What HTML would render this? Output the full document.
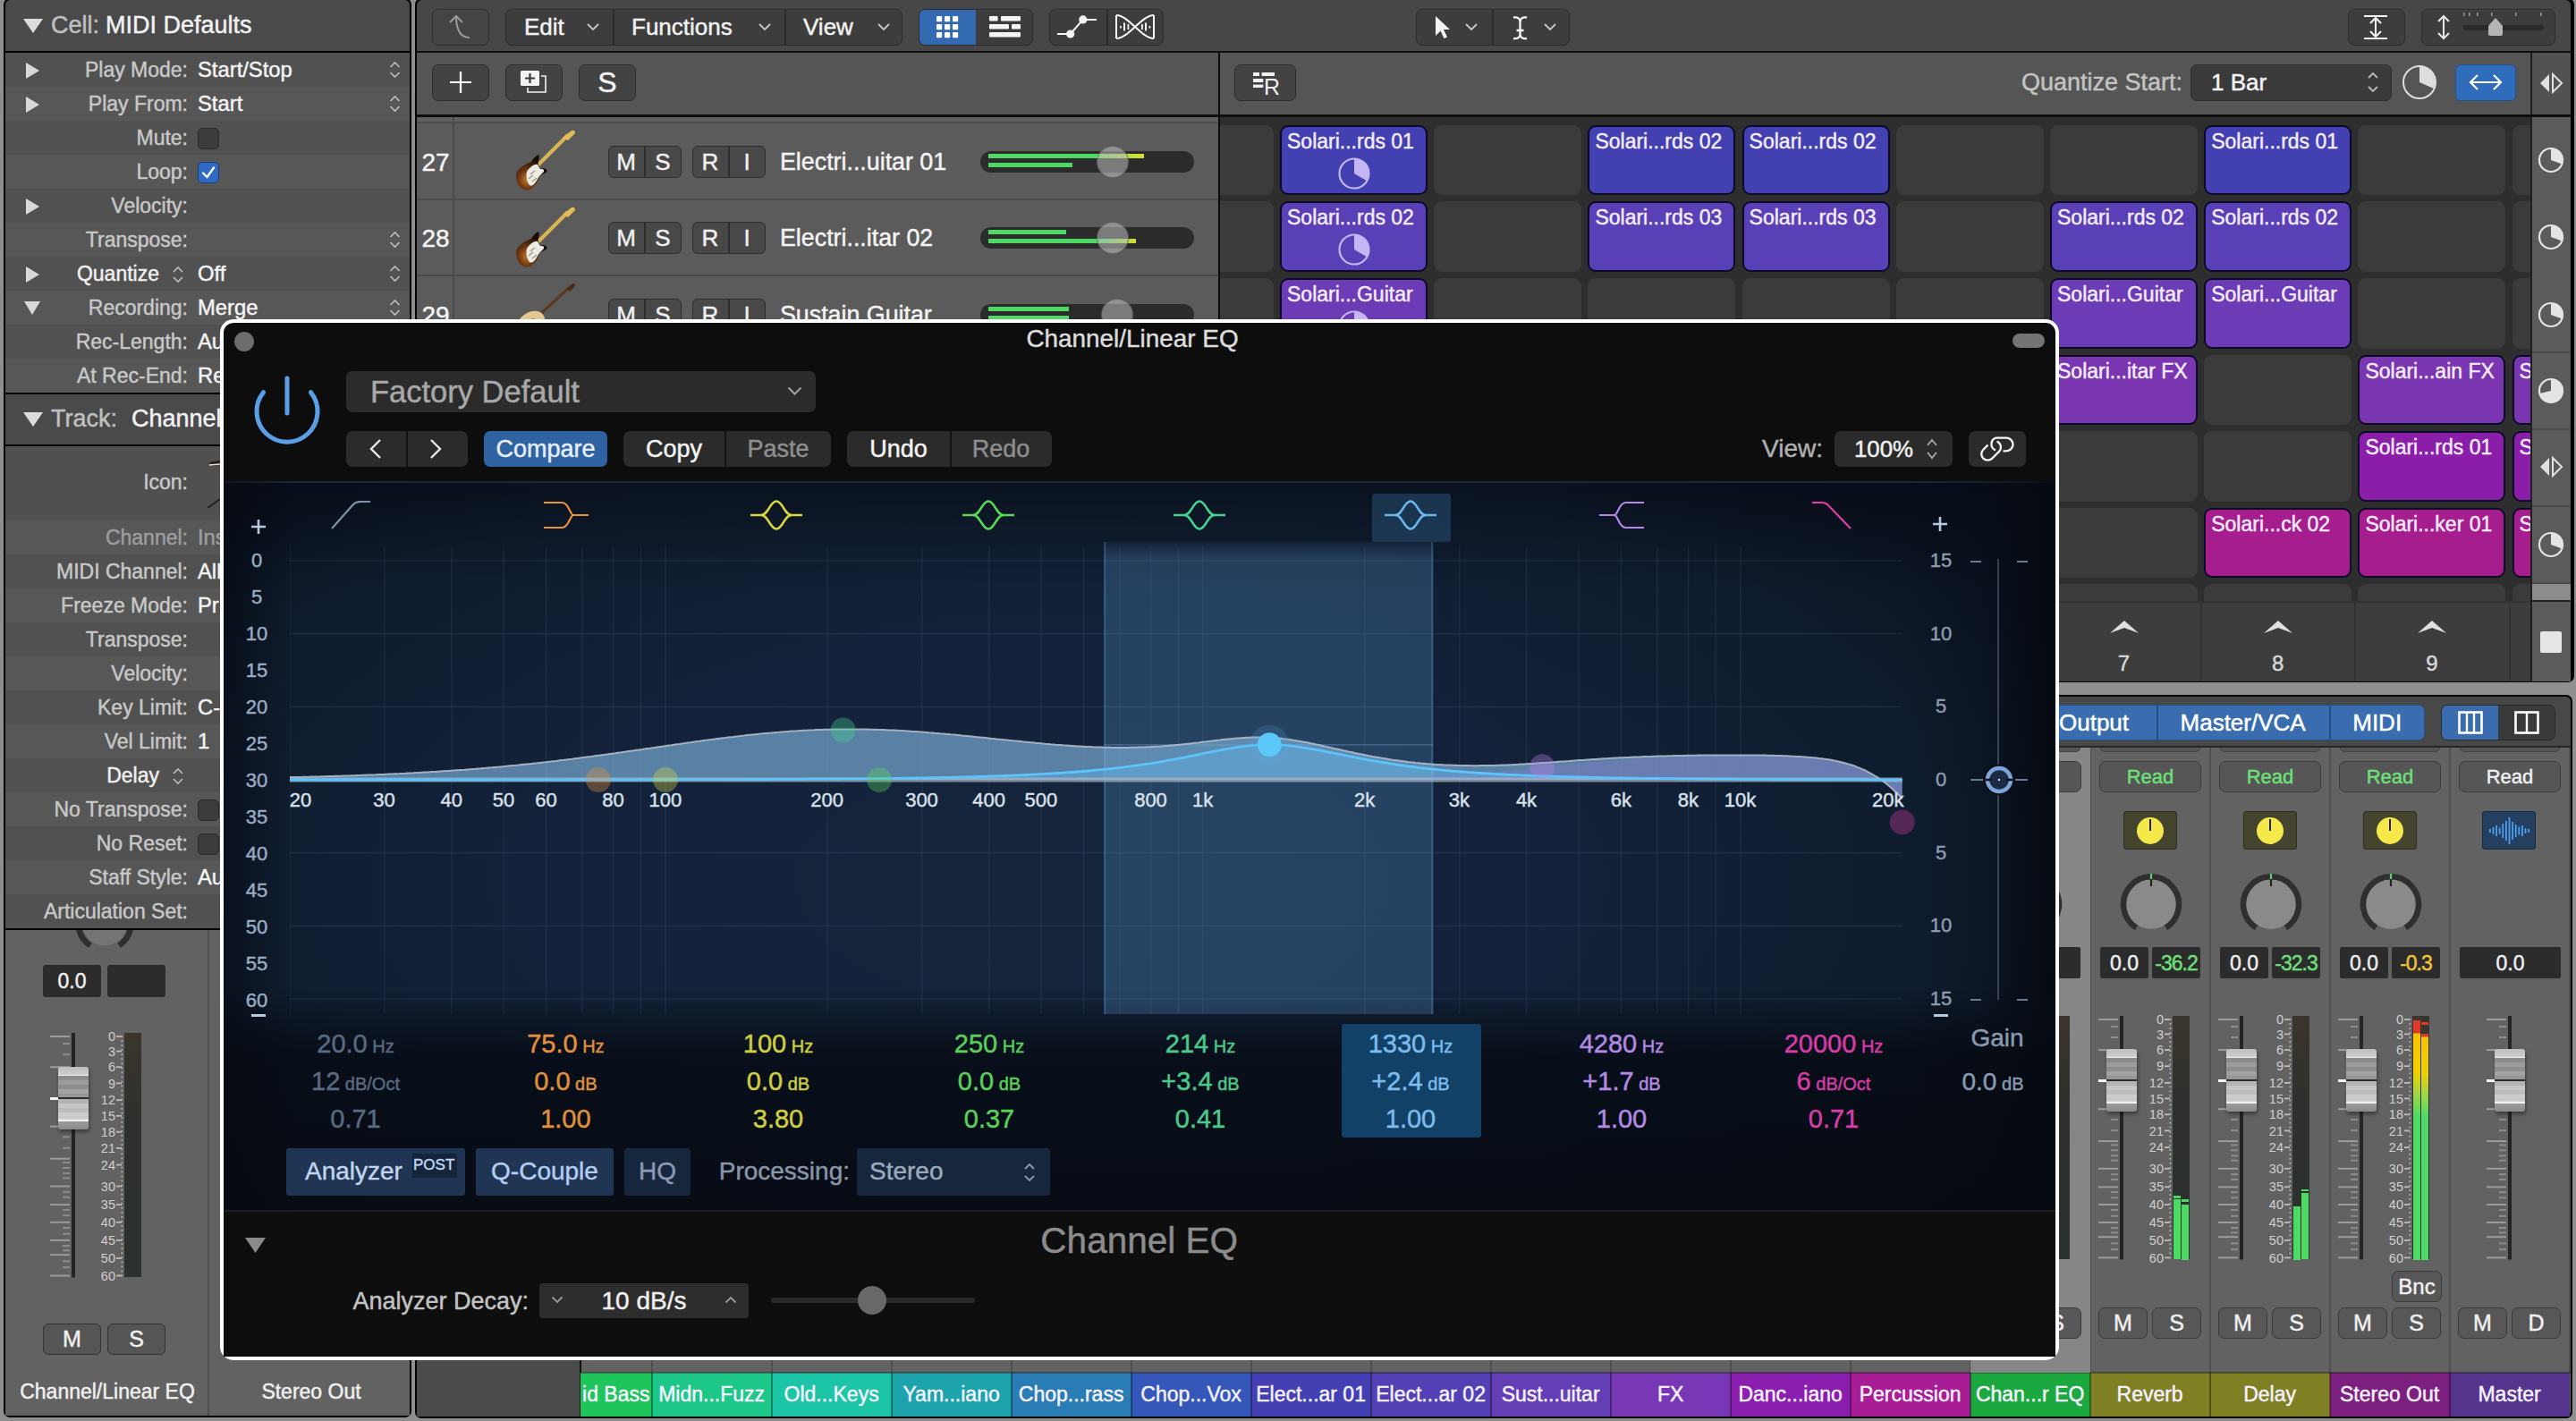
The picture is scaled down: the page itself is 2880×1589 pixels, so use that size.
<!DOCTYPE html>
<html><head><meta charset="utf-8"><title>Logic</title>
<style>
html,body{margin:0;padding:0;background:#8f8f8f;overflow:hidden}
#root{position:relative;width:2880px;height:1589px;overflow:hidden;background:#8f8f8f;font-family:"Liberation Sans",sans-serif}
#root div{position:absolute;box-sizing:border-box;-webkit-text-stroke:0.45px}
</style></head><body><div id="root">
<div style="left:4px;top:-2px;width:456px;height:1587px;background:#000;border-radius:7px"></div>
<div style="left:6px;top:0px;width:452px;height:1583px;background:#525252;border-radius:6px;overflow:hidden"></div>
<div style="left:6px;top:0px;width:452px;height:57px;background:#4a4a4a;border-top-left-radius:6px;border-top-right-radius:6px"></div>
<div style="left:6px;top:57px;width:452px;height:2px;background:#000"></div>
<svg style="position:absolute;left:26px;top:20px;" width="24" height="18" viewBox="0 0 24 18"><path d="M0 1 L22 1 L11 17 Z" fill="#dcdcdc"/></svg>
<div style="left:57.0px;top:-2.0px;height:60px;line-height:60px;white-space:nowrap;font-size:27px;color:#c0c0c0;">Cell:</div>
<div style="left:118.0px;top:-2.0px;height:60px;line-height:60px;white-space:nowrap;font-size:27px;color:#f2f2f2;">MIDI Defaults</div>
<div style="left:6px;top:59px;width:452px;height:38px;background:#515151"></div>
<svg style="position:absolute;left:28px;top:69px;" width="18" height="20" viewBox="0 0 18 20"><path d="M1 1 L16 10 L1 19 Z" fill="#d8d8d8"/></svg>
<div style="left:-790.0px;top:48.0px;width:1000px;height:60px;line-height:60px;text-align:right;white-space:nowrap;font-size:23px;color:#c8c8c8;">Play Mode:</div>
<div style="left:221.0px;top:48.0px;height:60px;line-height:60px;white-space:nowrap;font-size:23.8px;color:#f4f4f4;">Start/Stop</div>
<svg style="position:absolute;left:435px;top:68px;" width="13" height="20" viewBox="0 0 13 20"><path d="M1.5 7 L6.5 2 L11.5 7 M1.5 13 L6.5 18 L11.5 13" stroke="#bdbdbd" stroke-width="1.6" fill="none"/></svg>
<div style="left:6px;top:97px;width:452px;height:38px;background:#575757"></div>
<svg style="position:absolute;left:28px;top:107px;" width="18" height="20" viewBox="0 0 18 20"><path d="M1 1 L16 10 L1 19 Z" fill="#d8d8d8"/></svg>
<div style="left:-790.0px;top:86.0px;width:1000px;height:60px;line-height:60px;text-align:right;white-space:nowrap;font-size:23px;color:#c8c8c8;">Play From:</div>
<div style="left:221.0px;top:86.0px;height:60px;line-height:60px;white-space:nowrap;font-size:23.8px;color:#f4f4f4;">Start</div>
<svg style="position:absolute;left:435px;top:106px;" width="13" height="20" viewBox="0 0 13 20"><path d="M1.5 7 L6.5 2 L11.5 7 M1.5 13 L6.5 18 L11.5 13" stroke="#bdbdbd" stroke-width="1.6" fill="none"/></svg>
<div style="left:6px;top:135px;width:452px;height:38px;background:#515151"></div>
<div style="left:-790.0px;top:124.0px;width:1000px;height:60px;line-height:60px;text-align:right;white-space:nowrap;font-size:23px;color:#c8c8c8;">Mute:</div>
<div style="left:221px;top:143px;width:24px;height:24px;background:#3c3c3c;border-radius:5px;border:1px solid #2a2a2a"></div>
<div style="left:6px;top:173px;width:452px;height:38px;background:#575757"></div>
<div style="left:-790.0px;top:162.0px;width:1000px;height:60px;line-height:60px;text-align:right;white-space:nowrap;font-size:23px;color:#c8c8c8;">Loop:</div>
<div style="left:221px;top:181px;width:24px;height:24px;background:#2f6bc4;border-radius:5px;border:1px solid #1a3e78"></div>
<svg style="position:absolute;left:221px;top:181px;" width="24" height="24" viewBox="0 0 24 24"><path d="M6 12.5 L10.5 17 L18 6.5" stroke="#fff" stroke-width="2.4" fill="none" stroke-linecap="round"/></svg>
<div style="left:6px;top:211px;width:452px;height:38px;background:#515151"></div>
<svg style="position:absolute;left:28px;top:221px;" width="18" height="20" viewBox="0 0 18 20"><path d="M1 1 L16 10 L1 19 Z" fill="#d8d8d8"/></svg>
<div style="left:-790.0px;top:200.0px;width:1000px;height:60px;line-height:60px;text-align:right;white-space:nowrap;font-size:23px;color:#c8c8c8;">Velocity:</div>
<div style="left:6px;top:249px;width:452px;height:38px;background:#575757"></div>
<div style="left:-790.0px;top:238.0px;width:1000px;height:60px;line-height:60px;text-align:right;white-space:nowrap;font-size:23px;color:#c8c8c8;">Transpose:</div>
<svg style="position:absolute;left:435px;top:258px;" width="13" height="20" viewBox="0 0 13 20"><path d="M1.5 7 L6.5 2 L11.5 7 M1.5 13 L6.5 18 L11.5 13" stroke="#bdbdbd" stroke-width="1.6" fill="none"/></svg>
<div style="left:6px;top:287px;width:452px;height:38px;background:#515151"></div>
<svg style="position:absolute;left:28px;top:297px;" width="18" height="20" viewBox="0 0 18 20"><path d="M1 1 L16 10 L1 19 Z" fill="#d8d8d8"/></svg>
<div style="left:-822.0px;top:276.0px;width:1000px;height:60px;line-height:60px;text-align:right;white-space:nowrap;font-size:23px;color:#f0f0f0;">Quantize</div>
<svg style="position:absolute;left:193px;top:297px;" width="12" height="20" viewBox="0 0 12 20"><path d="M1 7 L6 2 L11 7 M1 13 L6 18 L11 13" stroke="#bdbdbd" stroke-width="1.6" fill="none"/></svg>
<div style="left:221.0px;top:276.0px;height:60px;line-height:60px;white-space:nowrap;font-size:23.8px;color:#f4f4f4;">Off</div>
<svg style="position:absolute;left:435px;top:296px;" width="13" height="20" viewBox="0 0 13 20"><path d="M1.5 7 L6.5 2 L11.5 7 M1.5 13 L6.5 18 L11.5 13" stroke="#bdbdbd" stroke-width="1.6" fill="none"/></svg>
<div style="left:6px;top:325px;width:452px;height:38px;background:#575757"></div>
<svg style="position:absolute;left:26px;top:336px;" width="20" height="17" viewBox="0 0 20 17"><path d="M1 1 L19 1 L10 16 Z" fill="#d8d8d8"/></svg>
<div style="left:-790.0px;top:314.0px;width:1000px;height:60px;line-height:60px;text-align:right;white-space:nowrap;font-size:23px;color:#c8c8c8;">Recording:</div>
<div style="left:221.0px;top:314.0px;height:60px;line-height:60px;white-space:nowrap;font-size:23.8px;color:#f4f4f4;">Merge</div>
<svg style="position:absolute;left:435px;top:334px;" width="13" height="20" viewBox="0 0 13 20"><path d="M1.5 7 L6.5 2 L11.5 7 M1.5 13 L6.5 18 L11.5 13" stroke="#bdbdbd" stroke-width="1.6" fill="none"/></svg>
<div style="left:6px;top:363px;width:452px;height:38px;background:#515151"></div>
<div style="left:-790.0px;top:352.0px;width:1000px;height:60px;line-height:60px;text-align:right;white-space:nowrap;font-size:23px;color:#c8c8c8;">Rec-Length:</div>
<div style="left:221.0px;top:352.0px;height:60px;line-height:60px;white-space:nowrap;font-size:23.8px;color:#f4f4f4;">Au</div>
<div style="left:6px;top:401px;width:452px;height:38px;background:#575757"></div>
<div style="left:-790.0px;top:390.0px;width:1000px;height:60px;line-height:60px;text-align:right;white-space:nowrap;font-size:23px;color:#c8c8c8;">At Rec-End:</div>
<div style="left:221.0px;top:390.0px;height:60px;line-height:60px;white-space:nowrap;font-size:23.8px;color:#f4f4f4;">Re</div>
<div style="left:6px;top:439px;width:452px;height:2px;background:#000"></div>
<div style="left:6px;top:441px;width:452px;height:56px;background:#4a4a4a"></div>
<svg style="position:absolute;left:26px;top:460px;" width="24" height="18" viewBox="0 0 24 18"><path d="M0 1 L22 1 L11 17 Z" fill="#dcdcdc"/></svg>
<div style="left:57.0px;top:438.0px;height:60px;line-height:60px;white-space:nowrap;font-size:27px;color:#c0c0c0;">Track:</div>
<div style="left:147.0px;top:438.0px;height:60px;line-height:60px;white-space:nowrap;font-size:27px;color:#f2f2f2;">Channel</div>
<div style="left:6px;top:497px;width:452px;height:2px;background:#000"></div>
<div style="left:6px;top:499px;width:452px;height:83px;background:#505050"></div>
<div style="left:-790.0px;top:509.0px;width:1000px;height:60px;line-height:60px;text-align:right;white-space:nowrap;font-size:23px;color:#c8c8c8;">Icon:</div>
<svg style="position:absolute;left:232px;top:508px;" width="16" height="60" viewBox="0 0 16 60"><path d="M2 9 L14 7 L14 12 L4 13 Z" fill="#2a2018"/><path d="M2 12 L14 11" stroke="#e8e0d8" stroke-width="1.5"/><path d="M0 60 L14 50" stroke="#222" stroke-width="2"/></svg>
<div style="left:6px;top:582px;width:452px;height:38px;background:#575757"></div>
<div style="left:-790.0px;top:571.0px;width:1000px;height:60px;line-height:60px;text-align:right;white-space:nowrap;font-size:23px;color:#9e9e9e;">Channel:</div>
<div style="left:221.0px;top:571.0px;height:60px;line-height:60px;white-space:nowrap;font-size:23.8px;color:#9e9e9e;">Ins</div>
<div style="left:6px;top:620px;width:452px;height:38px;background:#515151"></div>
<div style="left:-790.0px;top:609.0px;width:1000px;height:60px;line-height:60px;text-align:right;white-space:nowrap;font-size:23px;color:#c8c8c8;">MIDI Channel:</div>
<div style="left:221.0px;top:609.0px;height:60px;line-height:60px;white-space:nowrap;font-size:23.8px;color:#f4f4f4;">All</div>
<div style="left:6px;top:658px;width:452px;height:38px;background:#575757"></div>
<div style="left:-790.0px;top:647.0px;width:1000px;height:60px;line-height:60px;text-align:right;white-space:nowrap;font-size:23px;color:#c8c8c8;">Freeze Mode:</div>
<div style="left:221.0px;top:647.0px;height:60px;line-height:60px;white-space:nowrap;font-size:23.8px;color:#f4f4f4;">Pr</div>
<div style="left:6px;top:696px;width:452px;height:38px;background:#515151"></div>
<div style="left:-790.0px;top:685.0px;width:1000px;height:60px;line-height:60px;text-align:right;white-space:nowrap;font-size:23px;color:#c8c8c8;">Transpose:</div>
<div style="left:6px;top:734px;width:452px;height:38px;background:#575757"></div>
<div style="left:-790.0px;top:723.0px;width:1000px;height:60px;line-height:60px;text-align:right;white-space:nowrap;font-size:23px;color:#c8c8c8;">Velocity:</div>
<div style="left:6px;top:772px;width:452px;height:38px;background:#515151"></div>
<div style="left:-790.0px;top:761.0px;width:1000px;height:60px;line-height:60px;text-align:right;white-space:nowrap;font-size:23px;color:#c8c8c8;">Key Limit:</div>
<div style="left:221.0px;top:761.0px;height:60px;line-height:60px;white-space:nowrap;font-size:23.8px;color:#f4f4f4;">C-</div>
<div style="left:6px;top:810px;width:452px;height:38px;background:#575757"></div>
<div style="left:-790.0px;top:799.0px;width:1000px;height:60px;line-height:60px;text-align:right;white-space:nowrap;font-size:23px;color:#c8c8c8;">Vel Limit:</div>
<div style="left:221.0px;top:799.0px;height:60px;line-height:60px;white-space:nowrap;font-size:23.8px;color:#f4f4f4;">1</div>
<div style="left:6px;top:848px;width:452px;height:38px;background:#515151"></div>
<div style="left:-822.0px;top:837.0px;width:1000px;height:60px;line-height:60px;text-align:right;white-space:nowrap;font-size:23px;color:#f0f0f0;">Delay</div>
<svg style="position:absolute;left:193px;top:858px;" width="12" height="20" viewBox="0 0 12 20"><path d="M1 7 L6 2 L11 7 M1 13 L6 18 L11 13" stroke="#bdbdbd" stroke-width="1.6" fill="none"/></svg>
<div style="left:6px;top:886px;width:452px;height:38px;background:#575757"></div>
<div style="left:-790.0px;top:875.0px;width:1000px;height:60px;line-height:60px;text-align:right;white-space:nowrap;font-size:23px;color:#c8c8c8;">No Transpose:</div>
<div style="left:221px;top:894px;width:24px;height:24px;background:#3c3c3c;border-radius:5px;border:1px solid #2a2a2a"></div>
<div style="left:6px;top:924px;width:452px;height:38px;background:#515151"></div>
<div style="left:-790.0px;top:913.0px;width:1000px;height:60px;line-height:60px;text-align:right;white-space:nowrap;font-size:23px;color:#c8c8c8;">No Reset:</div>
<div style="left:221px;top:932px;width:24px;height:24px;background:#3c3c3c;border-radius:5px;border:1px solid #2a2a2a"></div>
<div style="left:6px;top:962px;width:452px;height:38px;background:#575757"></div>
<div style="left:-790.0px;top:951.0px;width:1000px;height:60px;line-height:60px;text-align:right;white-space:nowrap;font-size:23px;color:#c8c8c8;">Staff Style:</div>
<div style="left:221.0px;top:951.0px;height:60px;line-height:60px;white-space:nowrap;font-size:23.8px;color:#f4f4f4;">Au</div>
<div style="left:6px;top:1000px;width:452px;height:38px;background:#515151"></div>
<div style="left:-790.0px;top:989.0px;width:1000px;height:60px;line-height:60px;text-align:right;white-space:nowrap;font-size:23px;color:#c8c8c8;">Articulation Set:</div>
<div style="left:6px;top:1038px;width:452px;height:2px;background:#000"></div>
<div style="left:6px;top:1040px;width:452px;height:543px;background:#626262"></div>
<div style="left:232px;top:1040px;width:2px;height:543px;background:#4e4e4e"></div>
<svg style="position:absolute;left:80px;top:1040px;" width="74" height="24" viewBox="0 0 74 24"><circle cx="37" cy="-7.5" r="25" fill="#757575"/><path d="M20.9 17.2 A29.5 29.5 0 1 1 53.1 17.2" stroke="#2f2f2f" stroke-width="6.5" fill="none"/></svg>
<div style="left:48px;top:1079px;width:65px;height:36px;background:#2c2c2c;border-radius:3px"></div>
<div style="left:48.0px;top:1067.0px;width:65px;height:60px;line-height:60px;text-align:center;font-size:23px;color:#f0f0f0;">0.0</div>
<div style="left:120px;top:1079px;width:65px;height:36px;background:#2c2c2c;border-radius:3px"></div>
<svg style="position:absolute;left:56px;top:1148.5px;" width="104" height="289.5" viewBox="0 0 104 289.5"><g transform="translate(0,10)"><rect x="0" y="-1.0" width="22" height="2" fill="#9c9c9c"/><rect x="0" y="33.2" width="22" height="2" fill="#9c9c9c"/><rect x="0" y="99.6" width="22" height="2" fill="#9c9c9c"/><rect x="0" y="135.7" width="22" height="2" fill="#9c9c9c"/><rect x="0" y="166.5" width="22" height="2" fill="#9c9c9c"/><rect x="0" y="187.1" width="22" height="2" fill="#9c9c9c"/><rect x="0" y="206.8" width="22" height="2" fill="#9c9c9c"/><rect x="0" y="226.9" width="22" height="2" fill="#9c9c9c"/><rect x="0" y="243.2" width="22" height="2" fill="#9c9c9c"/><rect x="0" y="266.5" width="22" height="2" fill="#9c9c9c"/><rect x="14" y="7.0" width="8" height="2" fill="#8c8c8c"/><rect x="14" y="19.1" width="8" height="2" fill="#8c8c8c"/><rect x="14" y="111.3" width="8" height="2" fill="#8c8c8c"/><rect x="14" y="123.7" width="8" height="2" fill="#8c8c8c"/><rect x="14" y="140.0" width="8" height="2" fill="#8c8c8c"/><rect x="14" y="145.9" width="8" height="2" fill="#8c8c8c"/><rect x="14" y="152.0" width="8" height="2" fill="#8c8c8c"/><rect x="14" y="157.4" width="8" height="2" fill="#8c8c8c"/><rect x="14" y="172.9" width="8" height="2" fill="#8c8c8c"/><rect x="14" y="178.8" width="8" height="2" fill="#8c8c8c"/><rect x="14" y="192.9" width="8" height="2" fill="#8c8c8c"/><rect x="14" y="199.1" width="8" height="2" fill="#8c8c8c"/><rect x="14" y="213.0" width="8" height="2" fill="#8c8c8c"/><rect x="14" y="219.7" width="8" height="2" fill="#8c8c8c"/><rect x="14" y="233.1" width="8" height="2" fill="#8c8c8c"/><rect x="14" y="238.4" width="8" height="2" fill="#8c8c8c"/><rect x="14" y="250.4" width="8" height="2" fill="#8c8c8c"/><rect x="14" y="257.1" width="8" height="2" fill="#8c8c8c"/><rect x="24" y="-4" width="4" height="273.5" fill="#242424"/><text x="73" y="5.2" text-anchor="end" font-size="14.5" fill="#d0d0d0" font-family="Liberation Sans">0</text><rect x="74" y="-0.9" width="6" height="1.8" fill="#bdbdbd"/><text x="73" y="21.7" text-anchor="end" font-size="14.5" fill="#d0d0d0" font-family="Liberation Sans">3</text><rect x="74" y="15.6" width="6" height="1.8" fill="#bdbdbd"/><text x="73" y="39.4" text-anchor="end" font-size="14.5" fill="#d0d0d0" font-family="Liberation Sans">6</text><rect x="74" y="33.3" width="6" height="1.8" fill="#bdbdbd"/><text x="73" y="57.6" text-anchor="end" font-size="14.5" fill="#d0d0d0" font-family="Liberation Sans">9</text><rect x="74" y="51.5" width="6" height="1.8" fill="#bdbdbd"/><text x="73" y="76.4" text-anchor="end" font-size="14.5" fill="#d0d0d0" font-family="Liberation Sans">12</text><rect x="74" y="70.3" width="6" height="1.8" fill="#bdbdbd"/><text x="73" y="94.0" text-anchor="end" font-size="14.5" fill="#d0d0d0" font-family="Liberation Sans">15</text><rect x="74" y="87.9" width="6" height="1.8" fill="#bdbdbd"/><text x="73" y="111.9" text-anchor="end" font-size="14.5" fill="#d0d0d0" font-family="Liberation Sans">18</text><rect x="74" y="105.8" width="6" height="1.8" fill="#bdbdbd"/><text x="73" y="130.1" text-anchor="end" font-size="14.5" fill="#d0d0d0" font-family="Liberation Sans">21</text><rect x="74" y="124.0" width="6" height="1.8" fill="#bdbdbd"/><text x="73" y="148.8" text-anchor="end" font-size="14.5" fill="#d0d0d0" font-family="Liberation Sans">24</text><rect x="74" y="142.7" width="6" height="1.8" fill="#bdbdbd"/><text x="73" y="172.7" text-anchor="end" font-size="14.5" fill="#d0d0d0" font-family="Liberation Sans">30</text><rect x="74" y="166.6" width="6" height="1.8" fill="#bdbdbd"/><text x="73" y="193.3" text-anchor="end" font-size="14.5" fill="#d0d0d0" font-family="Liberation Sans">35</text><rect x="74" y="187.2" width="6" height="1.8" fill="#bdbdbd"/><text x="73" y="213.0" text-anchor="end" font-size="14.5" fill="#d0d0d0" font-family="Liberation Sans">40</text><rect x="74" y="206.9" width="6" height="1.8" fill="#bdbdbd"/><text x="73" y="233.1" text-anchor="end" font-size="14.5" fill="#d0d0d0" font-family="Liberation Sans">45</text><rect x="74" y="227.0" width="6" height="1.8" fill="#bdbdbd"/><text x="73" y="253.2" text-anchor="end" font-size="14.5" fill="#d0d0d0" font-family="Liberation Sans">50</text><rect x="74" y="247.1" width="6" height="1.8" fill="#bdbdbd"/><text x="73" y="272.7" text-anchor="end" font-size="14.5" fill="#d0d0d0" font-family="Liberation Sans">60</text><rect x="74" y="266.6" width="6" height="1.8" fill="#bdbdbd"/><rect x="79.4" y="-0.9" width="1.8" height="1.8" fill="#b0b0b0"/><rect x="79.4" y="4.1" width="1.8" height="1.8" fill="#b0b0b0"/><rect x="79.4" y="9.2" width="1.8" height="1.8" fill="#b0b0b0"/><rect x="79.4" y="14.2" width="1.8" height="1.8" fill="#b0b0b0"/><rect x="79.4" y="19.3" width="1.8" height="1.8" fill="#b0b0b0"/><rect x="79.4" y="24.3" width="1.8" height="1.8" fill="#b0b0b0"/><rect x="79.4" y="29.4" width="1.8" height="1.8" fill="#b0b0b0"/><rect x="79.4" y="34.4" width="1.8" height="1.8" fill="#b0b0b0"/><rect x="79.4" y="39.5" width="1.8" height="1.8" fill="#b0b0b0"/><rect x="79.4" y="44.5" width="1.8" height="1.8" fill="#b0b0b0"/><rect x="79.4" y="49.6" width="1.8" height="1.8" fill="#b0b0b0"/><rect x="79.4" y="54.6" width="1.8" height="1.8" fill="#b0b0b0"/><rect x="79.4" y="59.7" width="1.8" height="1.8" fill="#b0b0b0"/><rect x="79.4" y="64.7" width="1.8" height="1.8" fill="#b0b0b0"/><rect x="79.4" y="69.8" width="1.8" height="1.8" fill="#b0b0b0"/><rect x="79.4" y="74.8" width="1.8" height="1.8" fill="#b0b0b0"/><rect x="79.4" y="79.9" width="1.8" height="1.8" fill="#b0b0b0"/><rect x="79.4" y="84.9" width="1.8" height="1.8" fill="#b0b0b0"/><rect x="79.4" y="89.9" width="1.8" height="1.8" fill="#b0b0b0"/><rect x="79.4" y="95.0" width="1.8" height="1.8" fill="#b0b0b0"/><rect x="79.4" y="100.0" width="1.8" height="1.8" fill="#b0b0b0"/><rect x="79.4" y="105.1" width="1.8" height="1.8" fill="#b0b0b0"/><rect x="79.4" y="110.1" width="1.8" height="1.8" fill="#b0b0b0"/><rect x="79.4" y="115.2" width="1.8" height="1.8" fill="#b0b0b0"/><rect x="79.4" y="120.2" width="1.8" height="1.8" fill="#b0b0b0"/><rect x="79.4" y="125.3" width="1.8" height="1.8" fill="#b0b0b0"/><rect x="79.4" y="130.3" width="1.8" height="1.8" fill="#b0b0b0"/><rect x="79.4" y="135.4" width="1.8" height="1.8" fill="#b0b0b0"/><rect x="79.4" y="140.4" width="1.8" height="1.8" fill="#b0b0b0"/><rect x="79.4" y="145.5" width="1.8" height="1.8" fill="#b0b0b0"/><rect x="79.4" y="150.5" width="1.8" height="1.8" fill="#b0b0b0"/><rect x="79.4" y="155.6" width="1.8" height="1.8" fill="#b0b0b0"/><rect x="79.4" y="160.6" width="1.8" height="1.8" fill="#b0b0b0"/><rect x="79.4" y="165.7" width="1.8" height="1.8" fill="#b0b0b0"/><rect x="79.4" y="170.7" width="1.8" height="1.8" fill="#b0b0b0"/><rect x="79.4" y="175.8" width="1.8" height="1.8" fill="#b0b0b0"/><rect x="79.4" y="180.8" width="1.8" height="1.8" fill="#b0b0b0"/><rect x="79.4" y="185.8" width="1.8" height="1.8" fill="#b0b0b0"/><rect x="79.4" y="190.9" width="1.8" height="1.8" fill="#b0b0b0"/><rect x="79.4" y="195.9" width="1.8" height="1.8" fill="#b0b0b0"/><rect x="79.4" y="201.0" width="1.8" height="1.8" fill="#b0b0b0"/><rect x="79.4" y="206.0" width="1.8" height="1.8" fill="#b0b0b0"/><rect x="79.4" y="211.1" width="1.8" height="1.8" fill="#b0b0b0"/><rect x="79.4" y="216.1" width="1.8" height="1.8" fill="#b0b0b0"/><rect x="79.4" y="221.2" width="1.8" height="1.8" fill="#b0b0b0"/><rect x="79.4" y="226.2" width="1.8" height="1.8" fill="#b0b0b0"/><rect x="79.4" y="231.3" width="1.8" height="1.8" fill="#b0b0b0"/><rect x="79.4" y="236.3" width="1.8" height="1.8" fill="#b0b0b0"/><rect x="79.4" y="241.4" width="1.8" height="1.8" fill="#b0b0b0"/><rect x="79.4" y="246.4" width="1.8" height="1.8" fill="#b0b0b0"/><rect x="79.4" y="251.5" width="1.8" height="1.8" fill="#b0b0b0"/><rect x="79.4" y="256.5" width="1.8" height="1.8" fill="#b0b0b0"/><rect x="79.4" y="261.6" width="1.8" height="1.8" fill="#b0b0b0"/><rect x="79.4" y="266.6" width="1.8" height="1.8" fill="#b0b0b0"/></g></svg>
<div style="left:139px;top:1154.5px;width:19px;height:273.5px;background:linear-gradient(#3b352c,#2e302d 35%,#2b312d)"></div>
<div style="left:65px;top:1193px;width:34px;height:70px;border-radius:3px;box-shadow:1px 3px 4px rgba(0,0,0,.4);background:linear-gradient(#bdbdbd 0,#cfcfcf 13%,#ececec 13.5%,#ececec 14.5%,#8c8c8c 15%,#8c8c8c 21.5%,#9c9c9c 22%,#9c9c9c 28%,#8e8e8e 28.5%,#8e8e8e 35%,#a3a3a3 35.5%,#a3a3a3 42%,#979797 42.5%,#979797 48.5%,#2c2c2c 49%,#2c2c2c 51%,#b4b4b4 51.5%,#b4b4b4 58%,#c6c6c6 58.5%,#c6c6c6 65%,#bcbcbc 65.5%,#bcbcbc 72%,#cdcdcd 72.5%,#cdcdcd 79%,#c4c4c4 79.5%,#d6d6d6 84.5%,#f2f2f2 85%,#f2f2f2 86.5%,#9c9c9c 87%,#8a8a8a 100%)"></div>
<div style="left:56px;top:1226.5px;width:9px;height:3px;background:#f4f4f4"></div>
<div style="left:48px;top:1480px;width:65px;height:35px;background:#555;border:1.5px solid #333;border-radius:6px"></div>
<div style="left:48.0px;top:1467.0px;width:65px;height:60px;line-height:60px;text-align:center;font-size:25px;color:#f0f0f0;">M</div>
<div style="left:120px;top:1480px;width:65px;height:35px;background:#555;border:1.5px solid #333;border-radius:6px"></div>
<div style="left:120.0px;top:1467.0px;width:65px;height:60px;line-height:60px;text-align:center;font-size:25px;color:#f0f0f0;">S</div>
<div style="left:7.0px;top:1526.0px;width:226px;height:60px;line-height:60px;text-align:center;font-size:23px;color:#f0f0f0;">Channel/Linear EQ</div>
<div style="left:235.0px;top:1526.0px;width:226px;height:60px;line-height:60px;text-align:center;font-size:23px;color:#f0f0f0;">Stereo Out</div>
<div style="left:464px;top:-2px;width:2414px;height:765px;background:#000;border-radius:7px"></div>
<div style="left:466px;top:0px;width:2408px;height:761px;background:#2d2d2d;border-radius:6px;overflow:hidden"></div>
<div style="left:466px;top:0px;width:2408px;height:57px;background:#474747;border-top-left-radius:6px;border-top-right-radius:6px"></div>
<div style="left:466px;top:57px;width:2408px;height:2px;background:#111"></div>
<div style="left:483px;top:10px;width:64px;height:41px;background:#444;border-radius:7px;border:1.5px solid #2c2c2c;box-shadow:0 1px 0 rgba(255,255,255,.04) inset"></div>
<svg style="position:absolute;left:483px;top:10px;" width="64" height="41" viewBox="0 0 64 41"><path d="M20 15 L27 8 L34 15 M27 8 Q27 32 42 32" stroke="#9c9c9c" stroke-width="2" fill="none"/></svg>
<div style="left:565px;top:10px;width:444px;height:41px;background:#3d3d3d;border-radius:7px;border:1.5px solid #2c2c2c;box-shadow:0 1px 0 rgba(255,255,255,.04) inset"></div>
<div style="left:685px;top:11px;width:2px;height:39px;background:#2c2c2c"></div>
<div style="left:877px;top:11px;width:2px;height:39px;background:#2c2c2c"></div>
<div style="left:586.0px;top:0.0px;height:60px;line-height:60px;white-space:nowrap;font-size:26px;color:#f2f2f2;">Edit</div>
<svg style="position:absolute;left:656px;top:26px;" width="15" height="9" viewBox="0 0 15 9"><path d="M1 1 L7 7 L13 1" stroke="#c8c8c8" stroke-width="1.8" fill="none"/></svg>
<div style="left:706.0px;top:0.0px;height:60px;line-height:60px;white-space:nowrap;font-size:26px;color:#f2f2f2;">Functions</div>
<svg style="position:absolute;left:848px;top:26px;" width="15" height="9" viewBox="0 0 15 9"><path d="M1 1 L7 7 L13 1" stroke="#c8c8c8" stroke-width="1.8" fill="none"/></svg>
<div style="left:898.0px;top:0.0px;height:60px;line-height:60px;white-space:nowrap;font-size:26px;color:#f2f2f2;">View</div>
<svg style="position:absolute;left:981px;top:26px;" width="15" height="9" viewBox="0 0 15 9"><path d="M1 1 L7 7 L13 1" stroke="#c8c8c8" stroke-width="1.8" fill="none"/></svg>
<div style="left:1027px;top:10px;width:128px;height:41px;background:#3d3d3d;border-radius:7px;border:1.5px solid #2c2c2c;box-shadow:0 1px 0 rgba(255,255,255,.04) inset"></div>
<div style="left:1028px;top:11px;width:63px;height:39px;background:#336ab1;border-radius:6px 0 0 6px"></div>
<svg style="position:absolute;left:1047px;top:18px;" width="26" height="26" viewBox="0 0 26 26"><rect x="0" y="0" width="6.2" height="6.2" rx="1" fill="#fff"/><rect x="9" y="0" width="6.2" height="6.2" rx="1" fill="#fff"/><rect x="18" y="0" width="6.2" height="6.2" rx="1" fill="#fff"/><rect x="0" y="9" width="6.2" height="6.2" rx="1" fill="#fff"/><rect x="9" y="9" width="6.2" height="6.2" rx="1" fill="#fff"/><rect x="18" y="9" width="6.2" height="6.2" rx="1" fill="#fff"/><rect x="0" y="18" width="6.2" height="6.2" rx="1" fill="#fff"/><rect x="9" y="18" width="6.2" height="6.2" rx="1" fill="#fff"/><rect x="18" y="18" width="6.2" height="6.2" rx="1" fill="#fff"/></svg>
<svg style="position:absolute;left:1106px;top:18px;" width="36" height="24" viewBox="0 0 36 24"><g fill="#f4f4f4"><rect x="0" y="0" width="9.6" height="5.6" rx="1"/><rect x="13" y="0" width="22" height="5.6" rx="1"/><rect x="0" y="9" width="22" height="5.6" rx="1"/><rect x="25" y="9" width="10" height="5.6" rx="1"/><rect x="0" y="18" width="35" height="5.6" rx="1"/></g></svg>
<div style="left:1173px;top:10px;width:128px;height:41px;background:#3d3d3d;border-radius:7px;border:1.5px solid #2c2c2c;box-shadow:0 1px 0 rgba(255,255,255,.04) inset"></div>
<div style="left:1237px;top:11px;width:2px;height:39px;background:#2c2c2c"></div>
<svg style="position:absolute;left:1173px;top:10px;" width="64" height="41" viewBox="0 0 64 41"><g stroke="#f4f4f4" stroke-width="2" fill="#f4f4f4"><path d="M9 28 H20 M23.7 28 L37.8 11.9 M42 11.9 H53"/><circle cx="23.7" cy="28" r="3.6"/><circle cx="37.8" cy="11.9" r="3.6"/></g></svg>
<svg style="position:absolute;left:1240px;top:10px;" width="60" height="41" viewBox="0 0 60 41"><g stroke="#f4f4f4" stroke-width="2" fill="none"><path d="M8 7 V33 M50 7 V33"/><path d="M8 7 C22 7 36 33 50 33 M8 33 C22 33 36 7 50 7"/></g><g fill="#f4f4f4"><rect x="12" y="19" width="1.8" height="2.5"/><rect x="16" y="15.5" width="2" height="9"/><rect x="20.5" y="17" width="1.8" height="6"/><rect x="36" y="17" width="1.8" height="6"/><rect x="40" y="15.5" width="2" height="9"/><rect x="44.5" y="19" width="1.8" height="2.5"/></g></svg>
<div style="left:1583px;top:10px;width:172px;height:41px;background:#3d3d3d;border-radius:7px;border:1.5px solid #2c2c2c;box-shadow:0 1px 0 rgba(255,255,255,.04) inset"></div>
<div style="left:1668px;top:11px;width:2px;height:39px;background:#2c2c2c"></div>
<svg style="position:absolute;left:1603px;top:16px;" width="22" height="30" viewBox="0 0 22 30"><path d="M2 2 L2 24 L7.5 18.5 L11.5 27 L15 25.5 L11 17 L18 17 Z" fill="#f4f4f4"/></svg>
<svg style="position:absolute;left:1638px;top:26px;" width="15" height="9" viewBox="0 0 15 9"><path d="M1 1 L7 7 L13 1" stroke="#c8c8c8" stroke-width="1.8" fill="none"/></svg>
<svg style="position:absolute;left:1691px;top:17px;" width="18" height="28" viewBox="0 0 18 28"><g stroke="#f6f6f6" stroke-width="2.3" fill="none"><path d="M1 2.5 Q8.5 1.5 8.5 8 M16 2.5 Q8.5 1.5 8.5 8 M8.5 8 V20.5 M8.5 20.5 Q8.5 27 1 26 M8.5 20.5 Q8.5 27 16 26 M4.5 17 H12.5"/></g></svg>
<svg style="position:absolute;left:1726px;top:26px;" width="15" height="9" viewBox="0 0 15 9"><path d="M1 1 L7 7 L13 1" stroke="#c8c8c8" stroke-width="1.8" fill="none"/></svg>
<div style="left:2625px;top:10px;width:64px;height:41px;background:#3d3d3d;border-radius:7px;border:1.5px solid #2c2c2c;box-shadow:0 1px 0 rgba(255,255,255,.04) inset"></div>
<svg style="position:absolute;left:2641px;top:16px;" width="32" height="30" viewBox="0 0 32 30"><path d="M2 2 H28 M2 27 H28 M15 4 V25 M9 10 L15 4 L21 10 M9 19 L15 25 L21 19" stroke="#f4f4f4" stroke-width="2" fill="none"/></svg>
<div style="left:2707px;top:10px;width:150px;height:41px;background:#3d3d3d;border-radius:7px;border:1.5px solid #2c2c2c;box-shadow:0 1px 0 rgba(255,255,255,.04) inset"></div>
<svg style="position:absolute;left:2722px;top:16px;" width="20" height="30" viewBox="0 0 20 30"><path d="M10 2 V27 M4 8 L10 2 L16 8 M4 21 L10 27 L16 21" stroke="#e8e8e8" stroke-width="2" fill="none"/></svg>
<svg style="position:absolute;left:2754px;top:14px;" width="90" height="6" viewBox="0 0 90 6"><rect x="0" y="0" width="1.5" height="4" fill="#9a9a9a"/><rect x="6" y="0" width="1.5" height="4" fill="#9a9a9a"/><rect x="15" y="0" width="1.5" height="4" fill="#9a9a9a"/><rect x="31" y="0" width="1.5" height="4" fill="#9a9a9a"/><rect x="58" y="0" width="1.5" height="4" fill="#9a9a9a"/><rect x="86" y="0" width="1.5" height="4" fill="#9a9a9a"/></svg>
<div style="left:2754px;top:28px;width:90px;height:6px;background:#2a2a2a;border-radius:3px"></div>
<svg style="position:absolute;left:2780px;top:19px;" width="20" height="22" viewBox="0 0 20 22"><path d="M10 1 L18 10 L18 19 Q18 21 16 21 L4 21 Q2 21 2 19 L2 10 Z" fill="#b5b5b5"/></svg>
<div style="left:466px;top:59px;width:896px;height:69px;background:#555555"></div>
<div style="left:1362px;top:59px;width:1468px;height:69px;background:#555555"></div>
<div style="left:2830px;top:59px;width:44px;height:69px;background:#525252"></div>
<div style="left:2829px;top:59px;width:2px;height:703px;background:#1e1e1e"></div>
<div style="left:466px;top:128px;width:2408px;height:3px;background:#0e0e0e"></div>
<div style="left:483px;top:72px;width:64px;height:41px;background:#434343;border-radius:7px;border:1.5px solid #2c2c2c;box-shadow:0 1px 0 rgba(255,255,255,.04) inset"></div>
<svg style="position:absolute;left:499px;top:76px;" width="32" height="32" viewBox="0 0 32 32"><path d="M16 4 V28 M4 16 H28" stroke="#fff" stroke-width="2.2"/></svg>
<div style="left:565px;top:72px;width:64px;height:41px;background:#434343;border-radius:7px;border:1.5px solid #2c2c2c;box-shadow:0 1px 0 rgba(255,255,255,.04) inset"></div>
<svg style="position:absolute;left:580px;top:77px;" width="36" height="32" viewBox="0 0 36 32"><path d="M11 13 H3 V3 H26 V8" stroke="none" fill="none"/><rect x="2" y="2" width="21" height="17" rx="1.5" fill="#f4f4f4"/><path d="M12.5 5 V16 M7 10.5 H18" stroke="#3a3a3a" stroke-width="2.2"/><path d="M25 8 H30 V26 H10 V21" stroke="#f4f4f4" stroke-width="1.6" fill="none"/></svg>
<div style="left:647px;top:72px;width:64px;height:41px;background:#434343;border-radius:7px;border:1.5px solid #2c2c2c;box-shadow:0 1px 0 rgba(255,255,255,.04) inset"></div>
<div style="left:647.0px;top:62.0px;width:64px;height:60px;line-height:60px;text-align:center;font-size:32px;color:#f4f4f4;">S</div>
<div style="left:1380px;top:72px;width:69px;height:41px;background:#434343;border-radius:7px;border:1.5px solid #2c2c2c;box-shadow:0 1px 0 rgba(255,255,255,.04) inset"></div>
<svg style="position:absolute;left:1399px;top:79px;" width="34" height="30" viewBox="0 0 34 30"><g fill="#f0f0f0"><rect x="2" y="2" width="7" height="4"/><rect x="11.6" y="2" width="14.4" height="4"/><rect x="2" y="9" width="11.3" height="4"/><rect x="2" y="15.6" width="11.3" height="3.4"/></g></svg>
<div style="left:1413px;top:82px;height:30px;line-height:30px;font-size:25px;color:#f0f0f0;-webkit-text-stroke:0">R</div>
<div style="left:1440.0px;top:62.0px;width:1000px;height:60px;line-height:60px;text-align:right;white-space:nowrap;font-size:27px;color:#c4c4c4;">Quantize Start:</div>
<div style="left:2449px;top:72px;width:225px;height:41px;background:#3a3a3a;border-radius:7px;border:1.5px solid #2c2c2c;box-shadow:0 1px 0 rgba(255,255,255,.04) inset"></div>
<div style="left:2472.0px;top:62.0px;height:60px;line-height:60px;white-space:nowrap;font-size:26px;color:#f4f4f4;">1 Bar</div>
<svg style="position:absolute;left:2646px;top:79px;" width="14" height="26" viewBox="0 0 14 26"><path d="M2 8 L7 3 L12 8 M2 18 L7 23 L12 18" stroke="#bbb" stroke-width="1.8" fill="none"/></svg>
<svg style="position:absolute;left:2684px;top:71px;" width="42" height="42" viewBox="0 0 42 42"><circle cx="21" cy="21" r="18" stroke="#ddd" stroke-width="2" fill="none"/><path d="M21 21 V3 A18 18 0 0 1 37 28 Z" fill="#ddd"/></svg>
<div style="left:2745px;top:72px;width:68px;height:41px;background:#2f6cbb;border-radius:6px;border:1.5px solid #22508a"></div>
<svg style="position:absolute;left:2759px;top:81px;" width="40" height="22" viewBox="0 0 40 22"><path d="M3 11 H37 M11 3 L3 11 L11 19 M29 3 L37 11 L29 19" stroke="#fff" stroke-width="2.2" fill="none"/></svg>
<svg style="position:absolute;left:2838px;top:81px;" width="30" height="24" viewBox="0 0 30 24"><path d="M12 2 L2 12 L12 22 Z" fill="#e0e0e0"/><path d="M16 2 L26 12 L16 22 Z" stroke="#e0e0e0" stroke-width="2" fill="none"/></svg>
<div style="left:1362px;top:59px;width:2px;height:703px;background:#0c0c0c"></div>
<div style="left:466px;top:131px;width:896px;height:631px;background:#5b5b5b"></div>
<div style="left:466px;top:131px;width:896px;height:5px;background:#606060"></div>
<div style="left:466px;top:136px;width:896px;height:1.5px;background:#4c4c4c"></div>
<div style="left:506px;top:131px;width:2px;height:631px;background:#4a4a4a"></div>
<div style="left:466px;top:221.5px;width:896px;height:2px;background:#4b4b4b"></div>
<div style="left:462.0px;top:151.5px;width:50px;height:60px;line-height:60px;text-align:center;font-size:28px;color:#f4f4f4;">27</div>
<svg style="position:absolute;left:560px;top:135.0px;" width="100" height="90" viewBox="0 0 100 90"><defs><radialGradient id="sb" cx="0.35" cy="0.7" r="0.6"><stop offset="0" stop-color="#c07a2a"/><stop offset="0.45" stop-color="#6e3612"/><stop offset="1" stop-color="#160c06"/></radialGradient></defs><path d="M41 50 L75 16" stroke="#d9b455" stroke-width="4.2"/><path d="M69 19 L79 11 Q83 10 83 14 L75 22 Z" fill="#e2bc55"/><path d="M41.8 38 C38 40 35 44 34 46 C28 48 17 54 17 61 C17 70 22 77 28 77.5 C33 78 37 74 40 70 C42 66 43 62 45 60.5 C48 59 52 58 51.5 55.5 C51 53 46 53 44 53.5 L41.5 48 C42 44 44 39 41.8 38 Z" fill="url(#sb)"/><path d="M29 57 C33 51 38 48 41 49 L44 54 C47 53.5 49.5 55 47.5 57.5 C45 60 42.5 61.5 40.5 66 C37.5 72 34 73.5 32 72 C29.5 69.5 27.5 62 29 57 Z" fill="#ecece4"/><path d="M33 60 L38 56 M31 65 L36 61 M35 68 L40 64" stroke="#9a9a90" stroke-width="1.4"/></svg>
<div style="left:680px;top:162.5px;width:82px;height:36px;background:#484848;border:1.5px solid #2e2e2e;border-radius:6px"></div>
<div style="left:720px;top:163.5px;width:1.5px;height:34px;background:#2e2e2e"></div>
<div style="left:680.0px;top:150.5px;width:40px;height:60px;line-height:60px;text-align:center;font-size:26px;color:#f0f0f0;">M</div>
<div style="left:721.0px;top:150.5px;width:40px;height:60px;line-height:60px;text-align:center;font-size:26px;color:#f0f0f0;">S</div>
<div style="left:774px;top:162.5px;width:82px;height:36px;background:#484848;border:1.5px solid #2e2e2e;border-radius:6px"></div>
<div style="left:814px;top:163.5px;width:1.5px;height:34px;background:#2e2e2e"></div>
<div style="left:774.0px;top:150.5px;width:40px;height:60px;line-height:60px;text-align:center;font-size:26px;color:#f0f0f0;">R</div>
<div style="left:815.0px;top:150.5px;width:40px;height:60px;line-height:60px;text-align:center;font-size:26px;color:#f0f0f0;">I</div>
<div style="left:872.0px;top:150.5px;height:60px;line-height:60px;white-space:nowrap;font-size:26.8px;color:#f4f4f4;">Electri...uitar 01</div>
<div style="left:1096px;top:168.5px;width:239px;height:24px;background:#2b2b2b;border-radius:12px"></div>
<div style="left:1105px;top:171.5px;width:122px;height:5px;background:#4cd964"></div>
<div style="left:1227px;top:171.5px;width:52px;height:5px;background:linear-gradient(90deg,#6bd85a,#d8e030)"></div>
<div style="left:1105px;top:181.5px;width:94px;height:5px;background:#4cd964"></div>
<div style="left:1226px;top:162.5px;width:36px;height:36px;border-radius:50%;background:rgba(190,190,190,.55);border:1.5px solid rgba(70,70,70,.6)"></div>
<div style="left:466px;top:307.1px;width:896px;height:2px;background:#4b4b4b"></div>
<div style="left:462.0px;top:237.1px;width:50px;height:60px;line-height:60px;text-align:center;font-size:28px;color:#f4f4f4;">28</div>
<svg style="position:absolute;left:560px;top:220.6px;" width="100" height="90" viewBox="0 0 100 90"><defs><radialGradient id="sb" cx="0.35" cy="0.7" r="0.6"><stop offset="0" stop-color="#c07a2a"/><stop offset="0.45" stop-color="#6e3612"/><stop offset="1" stop-color="#160c06"/></radialGradient></defs><path d="M41 50 L75 16" stroke="#d9b455" stroke-width="4.2"/><path d="M69 19 L79 11 Q83 10 83 14 L75 22 Z" fill="#e2bc55"/><path d="M41.8 38 C38 40 35 44 34 46 C28 48 17 54 17 61 C17 70 22 77 28 77.5 C33 78 37 74 40 70 C42 66 43 62 45 60.5 C48 59 52 58 51.5 55.5 C51 53 46 53 44 53.5 L41.5 48 C42 44 44 39 41.8 38 Z" fill="url(#sb)"/><path d="M29 57 C33 51 38 48 41 49 L44 54 C47 53.5 49.5 55 47.5 57.5 C45 60 42.5 61.5 40.5 66 C37.5 72 34 73.5 32 72 C29.5 69.5 27.5 62 29 57 Z" fill="#ecece4"/><path d="M33 60 L38 56 M31 65 L36 61 M35 68 L40 64" stroke="#9a9a90" stroke-width="1.4"/></svg>
<div style="left:680px;top:248.10000000000002px;width:82px;height:36px;background:#484848;border:1.5px solid #2e2e2e;border-radius:6px"></div>
<div style="left:720px;top:249.10000000000002px;width:1.5px;height:34px;background:#2e2e2e"></div>
<div style="left:680.0px;top:236.1px;width:40px;height:60px;line-height:60px;text-align:center;font-size:26px;color:#f0f0f0;">M</div>
<div style="left:721.0px;top:236.1px;width:40px;height:60px;line-height:60px;text-align:center;font-size:26px;color:#f0f0f0;">S</div>
<div style="left:774px;top:248.10000000000002px;width:82px;height:36px;background:#484848;border:1.5px solid #2e2e2e;border-radius:6px"></div>
<div style="left:814px;top:249.10000000000002px;width:1.5px;height:34px;background:#2e2e2e"></div>
<div style="left:774.0px;top:236.1px;width:40px;height:60px;line-height:60px;text-align:center;font-size:26px;color:#f0f0f0;">R</div>
<div style="left:815.0px;top:236.1px;width:40px;height:60px;line-height:60px;text-align:center;font-size:26px;color:#f0f0f0;">I</div>
<div style="left:872.0px;top:236.1px;height:60px;line-height:60px;white-space:nowrap;font-size:26.8px;color:#f4f4f4;">Electri...itar 02</div>
<div style="left:1096px;top:254.10000000000002px;width:239px;height:24px;background:#2b2b2b;border-radius:12px"></div>
<div style="left:1105px;top:257.1px;width:87px;height:5px;background:#4cd964"></div>
<div style="left:1105px;top:267.1px;width:135px;height:5px;background:#4cd964"></div>
<div style="left:1240px;top:267.1px;width:30px;height:5px;background:linear-gradient(90deg,#6bd85a,#d8e030)"></div>
<div style="left:1226px;top:248.10000000000002px;width:36px;height:36px;border-radius:50%;background:rgba(190,190,190,.55);border:1.5px solid rgba(70,70,70,.6)"></div>
<div style="left:466px;top:392.7px;width:896px;height:2px;background:#4b4b4b"></div>
<div style="left:462.0px;top:322.7px;width:50px;height:60px;line-height:60px;text-align:center;font-size:28px;color:#f4f4f4;">29</div>
<svg style="position:absolute;left:560px;top:306.2px;" width="100" height="90" viewBox="0 0 100 90"><path d="M40 49 L78 14" stroke="#5a3a22" stroke-width="3.2"/><path d="M74 17 L80 11 Q83 10 83 14 L77 20 Z" fill="#4a2a16"/><ellipse cx="33" cy="57" rx="18" ry="13" fill="#e6c690" transform="rotate(-40 33 57)"/><circle cx="36" cy="54" r="3.5" fill="#3a2410"/></svg>
<div style="left:680px;top:333.7px;width:82px;height:36px;background:#484848;border:1.5px solid #2e2e2e;border-radius:6px"></div>
<div style="left:720px;top:334.7px;width:1.5px;height:34px;background:#2e2e2e"></div>
<div style="left:680.0px;top:321.7px;width:40px;height:60px;line-height:60px;text-align:center;font-size:26px;color:#f0f0f0;">M</div>
<div style="left:721.0px;top:321.7px;width:40px;height:60px;line-height:60px;text-align:center;font-size:26px;color:#f0f0f0;">S</div>
<div style="left:774px;top:333.7px;width:82px;height:36px;background:#484848;border:1.5px solid #2e2e2e;border-radius:6px"></div>
<div style="left:814px;top:334.7px;width:1.5px;height:34px;background:#2e2e2e"></div>
<div style="left:774.0px;top:321.7px;width:40px;height:60px;line-height:60px;text-align:center;font-size:26px;color:#f0f0f0;">R</div>
<div style="left:815.0px;top:321.7px;width:40px;height:60px;line-height:60px;text-align:center;font-size:26px;color:#f0f0f0;">I</div>
<div style="left:872.0px;top:321.7px;height:60px;line-height:60px;white-space:nowrap;font-size:26.8px;color:#f4f4f4;">Sustain Guitar</div>
<div style="left:1096px;top:339.7px;width:239px;height:24px;background:#2b2b2b;border-radius:12px"></div>
<div style="left:1105px;top:342.7px;width:90px;height:5px;background:#4cd964"></div>
<div style="left:1105px;top:352.7px;width:90px;height:5px;background:#4cd964"></div>
<div style="left:1231px;top:333.7px;width:36px;height:36px;border-radius:50%;background:rgba(190,190,190,.55);border:1.5px solid rgba(70,70,70,.6)"></div>
<div style="left:1364px;top:131px;width:1465px;height:631px;background:#2e2e2e;overflow:hidden"></div>
<div style="left:1364px;top:131px;width:1465px;height:631px;overflow:hidden"><div style="left:-105.2px;top:8.8px;width:165px;height:78.5px;background:#3b3b3b;border-radius:9px"></div><div style="left:67.0px;top:8.8px;width:165px;height:78.5px;background:#4340b1;border:2.5px solid #0c0a28;border-radius:9px;overflow:hidden;white-space:nowrap"><div style="left:6px;top:2px;height:28px;line-height:28px;font-size:23px;color:#f4ecff">Solari...rds 01</div></div><svg style="position:absolute;left:130.5px;top:43.8px" width="38" height="38" viewBox="0 0 38 38"><circle cx="19" cy="19" r="16.5" stroke="#c4b6f4" stroke-width="2.2" fill="none"/><path d="M19 19 V2.5 A16.5 16.5 0 0 1 33.3 27.2 Z" fill="#c4b6f4"/></svg><div style="left:239.2px;top:8.8px;width:165px;height:78.5px;background:#3b3b3b;border-radius:9px"></div><div style="left:411.4px;top:8.8px;width:165px;height:78.5px;background:#4340b1;border:2.5px solid #0c0a28;border-radius:9px;overflow:hidden;white-space:nowrap"><div style="left:6px;top:2px;height:28px;line-height:28px;font-size:23px;color:#f4ecff">Solari...rds 02</div></div><div style="left:583.6px;top:8.8px;width:165px;height:78.5px;background:#4340b1;border:2.5px solid #0c0a28;border-radius:9px;overflow:hidden;white-space:nowrap"><div style="left:6px;top:2px;height:28px;line-height:28px;font-size:23px;color:#f4ecff">Solari...rds 02</div></div><div style="left:755.8px;top:8.8px;width:165px;height:78.5px;background:#3b3b3b;border-radius:9px"></div><div style="left:928.0px;top:8.8px;width:165px;height:78.5px;background:#3b3b3b;border-radius:9px"></div><div style="left:1100.2px;top:8.8px;width:165px;height:78.5px;background:#4340b1;border:2.5px solid #0c0a28;border-radius:9px;overflow:hidden;white-space:nowrap"><div style="left:6px;top:2px;height:28px;line-height:28px;font-size:23px;color:#f4ecff">Solari...rds 01</div></div><div style="left:1272.4px;top:8.8px;width:165px;height:78.5px;background:#3b3b3b;border-radius:9px"></div><div style="left:1444.6px;top:8.8px;width:165px;height:78.5px;background:#3b3b3b;border-radius:9px"></div><div style="left:-105.2px;top:94.4px;width:165px;height:78.5px;background:#3b3b3b;border-radius:9px"></div><div style="left:67.0px;top:94.4px;width:165px;height:78.5px;background:#5a40b6;border:2.5px solid #0c0a28;border-radius:9px;overflow:hidden;white-space:nowrap"><div style="left:6px;top:2px;height:28px;line-height:28px;font-size:23px;color:#f4ecff">Solari...rds 02</div></div><svg style="position:absolute;left:130.5px;top:129.4px" width="38" height="38" viewBox="0 0 38 38"><circle cx="19" cy="19" r="16.5" stroke="#c4b6f4" stroke-width="2.2" fill="none"/><path d="M19 19 V2.5 A16.5 16.5 0 0 1 33.3 27.2 Z" fill="#c4b6f4"/></svg><div style="left:239.2px;top:94.4px;width:165px;height:78.5px;background:#3b3b3b;border-radius:9px"></div><div style="left:411.4px;top:94.4px;width:165px;height:78.5px;background:#5a40b6;border:2.5px solid #0c0a28;border-radius:9px;overflow:hidden;white-space:nowrap"><div style="left:6px;top:2px;height:28px;line-height:28px;font-size:23px;color:#f4ecff">Solari...rds 03</div></div><div style="left:583.6px;top:94.4px;width:165px;height:78.5px;background:#5a40b6;border:2.5px solid #0c0a28;border-radius:9px;overflow:hidden;white-space:nowrap"><div style="left:6px;top:2px;height:28px;line-height:28px;font-size:23px;color:#f4ecff">Solari...rds 03</div></div><div style="left:755.8px;top:94.4px;width:165px;height:78.5px;background:#3b3b3b;border-radius:9px"></div><div style="left:928.0px;top:94.4px;width:165px;height:78.5px;background:#5a40b6;border:2.5px solid #0c0a28;border-radius:9px;overflow:hidden;white-space:nowrap"><div style="left:6px;top:2px;height:28px;line-height:28px;font-size:23px;color:#f4ecff">Solari...rds 02</div></div><div style="left:1100.2px;top:94.4px;width:165px;height:78.5px;background:#5a40b6;border:2.5px solid #0c0a28;border-radius:9px;overflow:hidden;white-space:nowrap"><div style="left:6px;top:2px;height:28px;line-height:28px;font-size:23px;color:#f4ecff">Solari...rds 02</div></div><div style="left:1272.4px;top:94.4px;width:165px;height:78.5px;background:#3b3b3b;border-radius:9px"></div><div style="left:1444.6px;top:94.4px;width:165px;height:78.5px;background:#3b3b3b;border-radius:9px"></div><div style="left:-105.2px;top:180.0px;width:165px;height:78.5px;background:#3b3b3b;border-radius:9px"></div><div style="left:67.0px;top:180.0px;width:165px;height:78.5px;background:#6c3cb6;border:2.5px solid #0c0a28;border-radius:9px;overflow:hidden;white-space:nowrap"><div style="left:6px;top:2px;height:28px;line-height:28px;font-size:23px;color:#f4ecff">Solari...Guitar</div></div><svg style="position:absolute;left:130.5px;top:215.0px" width="38" height="38" viewBox="0 0 38 38"><circle cx="19" cy="19" r="16.5" stroke="#c4b6f4" stroke-width="2.2" fill="none"/><path d="M19 19 V2.5 A16.5 16.5 0 0 1 33.3 27.2 Z" fill="#c4b6f4"/></svg><div style="left:239.2px;top:180.0px;width:165px;height:78.5px;background:#3b3b3b;border-radius:9px"></div><div style="left:411.4px;top:180.0px;width:165px;height:78.5px;background:#3b3b3b;border-radius:9px"></div><div style="left:583.6px;top:180.0px;width:165px;height:78.5px;background:#3b3b3b;border-radius:9px"></div><div style="left:755.8px;top:180.0px;width:165px;height:78.5px;background:#3b3b3b;border-radius:9px"></div><div style="left:928.0px;top:180.0px;width:165px;height:78.5px;background:#6c3cb6;border:2.5px solid #0c0a28;border-radius:9px;overflow:hidden;white-space:nowrap"><div style="left:6px;top:2px;height:28px;line-height:28px;font-size:23px;color:#f4ecff">Solari...Guitar</div></div><div style="left:1100.2px;top:180.0px;width:165px;height:78.5px;background:#6c3cb6;border:2.5px solid #0c0a28;border-radius:9px;overflow:hidden;white-space:nowrap"><div style="left:6px;top:2px;height:28px;line-height:28px;font-size:23px;color:#f4ecff">Solari...Guitar</div></div><div style="left:1272.4px;top:180.0px;width:165px;height:78.5px;background:#3b3b3b;border-radius:9px"></div><div style="left:1444.6px;top:180.0px;width:165px;height:78.5px;background:#3b3b3b;border-radius:9px"></div><div style="left:-105.2px;top:265.6px;width:165px;height:78.5px;background:#3b3b3b;border-radius:9px"></div><div style="left:67.0px;top:265.6px;width:165px;height:78.5px;background:#3b3b3b;border-radius:9px"></div><div style="left:239.2px;top:265.6px;width:165px;height:78.5px;background:#3b3b3b;border-radius:9px"></div><div style="left:411.4px;top:265.6px;width:165px;height:78.5px;background:#3b3b3b;border-radius:9px"></div><div style="left:583.6px;top:265.6px;width:165px;height:78.5px;background:#3b3b3b;border-radius:9px"></div><div style="left:755.8px;top:265.6px;width:165px;height:78.5px;background:#3b3b3b;border-radius:9px"></div><div style="left:928.0px;top:265.6px;width:165px;height:78.5px;background:#7a36b0;border:2.5px solid #0c0a28;border-radius:9px;overflow:hidden;white-space:nowrap"><div style="left:6px;top:2px;height:28px;line-height:28px;font-size:23px;color:#f4ecff">Solari...itar FX</div></div><div style="left:1100.2px;top:265.6px;width:165px;height:78.5px;background:#3b3b3b;border-radius:9px"></div><div style="left:1272.4px;top:265.6px;width:165px;height:78.5px;background:#7a36b0;border:2.5px solid #0c0a28;border-radius:9px;overflow:hidden;white-space:nowrap"><div style="left:6px;top:2px;height:28px;line-height:28px;font-size:23px;color:#f4ecff">Solari...ain FX</div></div><div style="left:1444.6px;top:265.6px;width:165px;height:78.5px;background:#7a36b0;border:2.5px solid #0c0a28;border-radius:9px;overflow:hidden;white-space:nowrap"><div style="left:6px;top:2px;height:28px;line-height:28px;font-size:23px;color:#f4ecff">Solari...ain FX</div></div><div style="left:-105.2px;top:351.2px;width:165px;height:78.5px;background:#3b3b3b;border-radius:9px"></div><div style="left:67.0px;top:351.2px;width:165px;height:78.5px;background:#3b3b3b;border-radius:9px"></div><div style="left:239.2px;top:351.2px;width:165px;height:78.5px;background:#3b3b3b;border-radius:9px"></div><div style="left:411.4px;top:351.2px;width:165px;height:78.5px;background:#3b3b3b;border-radius:9px"></div><div style="left:583.6px;top:351.2px;width:165px;height:78.5px;background:#3b3b3b;border-radius:9px"></div><div style="left:755.8px;top:351.2px;width:165px;height:78.5px;background:#3b3b3b;border-radius:9px"></div><div style="left:928.0px;top:351.2px;width:165px;height:78.5px;background:#3b3b3b;border-radius:9px"></div><div style="left:1100.2px;top:351.2px;width:165px;height:78.5px;background:#3b3b3b;border-radius:9px"></div><div style="left:1272.4px;top:351.2px;width:165px;height:78.5px;background:#8a1ea8;border:2.5px solid #0c0a28;border-radius:9px;overflow:hidden;white-space:nowrap"><div style="left:6px;top:2px;height:28px;line-height:28px;font-size:23px;color:#f4ecff">Solari...rds 01</div></div><div style="left:1444.6px;top:351.2px;width:165px;height:78.5px;background:#8a1ea8;border:2.5px solid #0c0a28;border-radius:9px;overflow:hidden;white-space:nowrap"><div style="left:6px;top:2px;height:28px;line-height:28px;font-size:23px;color:#f4ecff">Solari...rds 01</div></div><div style="left:-105.2px;top:436.8px;width:165px;height:78.5px;background:#3b3b3b;border-radius:9px"></div><div style="left:67.0px;top:436.8px;width:165px;height:78.5px;background:#3b3b3b;border-radius:9px"></div><div style="left:239.2px;top:436.8px;width:165px;height:78.5px;background:#3b3b3b;border-radius:9px"></div><div style="left:411.4px;top:436.8px;width:165px;height:78.5px;background:#3b3b3b;border-radius:9px"></div><div style="left:583.6px;top:436.8px;width:165px;height:78.5px;background:#3b3b3b;border-radius:9px"></div><div style="left:755.8px;top:436.8px;width:165px;height:78.5px;background:#3b3b3b;border-radius:9px"></div><div style="left:928.0px;top:436.8px;width:165px;height:78.5px;background:#3b3b3b;border-radius:9px"></div><div style="left:1100.2px;top:436.8px;width:165px;height:78.5px;background:#a61d8e;border:2.5px solid #0c0a28;border-radius:9px;overflow:hidden;white-space:nowrap"><div style="left:6px;top:2px;height:28px;line-height:28px;font-size:23px;color:#f4ecff">Solari...ck 02</div></div><div style="left:1272.4px;top:436.8px;width:165px;height:78.5px;background:#a61d8e;border:2.5px solid #0c0a28;border-radius:9px;overflow:hidden;white-space:nowrap"><div style="left:6px;top:2px;height:28px;line-height:28px;font-size:23px;color:#f4ecff">Solari...ker 01</div></div><div style="left:1444.6px;top:436.8px;width:165px;height:78.5px;background:#a61d8e;border:2.5px solid #0c0a28;border-radius:9px;overflow:hidden;white-space:nowrap"><div style="left:6px;top:2px;height:28px;line-height:28px;font-size:23px;color:#f4ecff">Solari...ker 01</div></div><div style="left:-105.2px;top:522.4px;width:165px;height:40px;background:#3b3b3b;border-radius:9px"></div><div style="left:67.0px;top:522.4px;width:165px;height:40px;background:#3b3b3b;border-radius:9px"></div><div style="left:239.2px;top:522.4px;width:165px;height:40px;background:#3b3b3b;border-radius:9px"></div><div style="left:411.4px;top:522.4px;width:165px;height:40px;background:#3b3b3b;border-radius:9px"></div><div style="left:583.6px;top:522.4px;width:165px;height:40px;background:#3b3b3b;border-radius:9px"></div><div style="left:755.8px;top:522.4px;width:165px;height:40px;background:#3b3b3b;border-radius:9px"></div><div style="left:928.0px;top:522.4px;width:165px;height:40px;background:#3b3b3b;border-radius:9px"></div><div style="left:1100.2px;top:522.4px;width:165px;height:40px;background:#3b3b3b;border-radius:9px"></div><div style="left:1272.4px;top:522.4px;width:165px;height:40px;background:#3b3b3b;border-radius:9px"></div><div style="left:1444.6px;top:522.4px;width:165px;height:40px;background:#3b3b3b;border-radius:9px"></div></div>
<div style="left:1364px;top:672px;width:1465px;height:90px;background:#3d3d3d;border-top:2px solid #333"></div>
<div style="left:1771.3999999999999px;top:673px;width:2px;height:89px;background:#333"></div>
<div style="left:1943.6px;top:673px;width:2px;height:89px;background:#333"></div>
<div style="left:2115.8px;top:673px;width:2px;height:89px;background:#333"></div>
<div style="left:2288.0px;top:673px;width:2px;height:89px;background:#333"></div>
<div style="left:2460.2px;top:673px;width:2px;height:89px;background:#333"></div>
<div style="left:2632.3999999999996px;top:673px;width:2px;height:89px;background:#333"></div>
<div style="left:2804.6px;top:673px;width:2px;height:89px;background:#333"></div>
<svg style="position:absolute;left:1496.5px;top:692px;" width="34" height="18" viewBox="0 0 34 18"><path d="M1 16 L17 2 L33 16 L17 10 Z" fill="#e0e0e0"/></svg>
<div style="left:1483.5px;top:712.0px;width:60px;height:60px;line-height:60px;text-align:center;font-size:24px;color:#d8d8d8;">2</div>
<svg style="position:absolute;left:1668.6999999999998px;top:692px;" width="34" height="18" viewBox="0 0 34 18"><path d="M1 16 L17 2 L33 16 L17 10 Z" fill="#e0e0e0"/></svg>
<div style="left:1655.7px;top:712.0px;width:60px;height:60px;line-height:60px;text-align:center;font-size:24px;color:#d8d8d8;">3</div>
<svg style="position:absolute;left:1840.8999999999999px;top:692px;" width="34" height="18" viewBox="0 0 34 18"><path d="M1 16 L17 2 L33 16 L17 10 Z" fill="#e0e0e0"/></svg>
<div style="left:1827.9px;top:712.0px;width:60px;height:60px;line-height:60px;text-align:center;font-size:24px;color:#d8d8d8;">4</div>
<svg style="position:absolute;left:2013.1px;top:692px;" width="34" height="18" viewBox="0 0 34 18"><path d="M1 16 L17 2 L33 16 L17 10 Z" fill="#e0e0e0"/></svg>
<div style="left:2000.1px;top:712.0px;width:60px;height:60px;line-height:60px;text-align:center;font-size:24px;color:#d8d8d8;">5</div>
<svg style="position:absolute;left:2185.3px;top:692px;" width="34" height="18" viewBox="0 0 34 18"><path d="M1 16 L17 2 L33 16 L17 10 Z" fill="#e0e0e0"/></svg>
<div style="left:2172.3px;top:712.0px;width:60px;height:60px;line-height:60px;text-align:center;font-size:24px;color:#d8d8d8;">6</div>
<svg style="position:absolute;left:2357.5px;top:692px;" width="34" height="18" viewBox="0 0 34 18"><path d="M1 16 L17 2 L33 16 L17 10 Z" fill="#e0e0e0"/></svg>
<div style="left:2344.5px;top:712.0px;width:60px;height:60px;line-height:60px;text-align:center;font-size:24px;color:#d8d8d8;">7</div>
<svg style="position:absolute;left:2529.7px;top:692px;" width="34" height="18" viewBox="0 0 34 18"><path d="M1 16 L17 2 L33 16 L17 10 Z" fill="#e0e0e0"/></svg>
<div style="left:2516.7px;top:712.0px;width:60px;height:60px;line-height:60px;text-align:center;font-size:24px;color:#d8d8d8;">8</div>
<svg style="position:absolute;left:2701.8999999999996px;top:692px;" width="34" height="18" viewBox="0 0 34 18"><path d="M1 16 L17 2 L33 16 L17 10 Z" fill="#e0e0e0"/></svg>
<div style="left:2688.9px;top:712.0px;width:60px;height:60px;line-height:60px;text-align:center;font-size:24px;color:#d8d8d8;">9</div>
<div style="left:2831px;top:131px;width:43px;height:631px;background:#5b5b5b"></div>
<div style="left:2831px;top:392.6px;width:43px;height:2px;background:#4a4a4a"></div>
<div style="left:2831px;top:479px;width:43px;height:2px;background:#4a4a4a"></div>
<div style="left:2831px;top:565.4px;width:43px;height:2px;background:#4a4a4a"></div>
<div style="left:2831px;top:651px;width:43px;height:2px;background:#4a4a4a"></div>
<div style="left:2831px;top:653px;width:43px;height:18px;background:#8c8c8c"></div>
<div style="left:2831px;top:671px;width:43px;height:2px;background:#222"></div>
<div style="left:2831px;top:673px;width:43px;height:89px;background:#5b5b5b"></div>
<svg style="position:absolute;left:2837px;top:164px;" width="30" height="30" viewBox="0 0 30 30"><circle cx="15" cy="15" r="13" stroke="#e4e4e4" stroke-width="2.2" fill="none"/><path d="M15 15 V2 A13 13 0 0 1 27.2 19.5 Z" fill="#e4e4e4"/></svg>
<svg style="position:absolute;left:2837px;top:250px;" width="30" height="30" viewBox="0 0 30 30"><circle cx="15" cy="15" r="13" stroke="#e4e4e4" stroke-width="2.2" fill="none"/><path d="M15 15 V2 A13 13 0 0 1 27.2 19.5 Z" fill="#e4e4e4"/></svg>
<svg style="position:absolute;left:2837px;top:337px;" width="30" height="30" viewBox="0 0 30 30"><circle cx="15" cy="15" r="13" stroke="#e4e4e4" stroke-width="2.2" fill="none"/><path d="M15 15 V2 A13 13 0 0 1 27.2 19.5 Z" fill="#e4e4e4"/></svg>
<svg style="position:absolute;left:2837px;top:422px;" width="30" height="30" viewBox="0 0 30 30"><circle cx="15" cy="15" r="13" stroke="#e4e4e4" stroke-width="2.2" fill="none"/><path d="M15 15 V2 A13 13 0 1 1 2.5 18 Z" fill="#e4e4e4"/></svg>
<svg style="position:absolute;left:2837px;top:594px;" width="30" height="30" viewBox="0 0 30 30"><circle cx="15" cy="15" r="13" stroke="#e4e4e4" stroke-width="2.2" fill="none"/><path d="M15 15 V2 A13 13 0 0 1 27.2 19.5 Z" fill="#e4e4e4"/></svg>
<svg style="position:absolute;left:2838px;top:510px;" width="30" height="24" viewBox="0 0 30 24"><path d="M12 2 L2 12 L12 22 Z" fill="#e0e0e0"/><path d="M16 2 L26 12 L16 22 Z" stroke="#e0e0e0" stroke-width="2" fill="none"/></svg>
<div style="left:2840px;top:706px;width:24px;height:24px;background:#e6e6e6;border-radius:2px"></div>
<div style="left:464px;top:777px;width:2412px;height:809px;background:#000;border-radius:7px"></div>
<div style="left:466px;top:779px;width:2408px;height:805px;background:#626262;border-radius:6px;overflow:hidden"></div>
<div style="left:466px;top:779px;width:2408px;height:55px;background:#484848;border-top-left-radius:6px;border-top-right-radius:6px"></div>
<div style="left:466px;top:834px;width:2408px;height:2px;background:#262626"></div>
<div style="left:2150px;top:788px;width:561px;height:40px;background:#3a6cb0;border-radius:7px;border:1.5px solid #24508a"></div>
<div style="left:2411px;top:789px;width:2px;height:38px;background:#234f86"></div>
<div style="left:2604px;top:789px;width:2px;height:38px;background:#234f86"></div>
<div style="left:2302.0px;top:778.0px;height:60px;line-height:60px;white-space:nowrap;font-size:26px;color:#fff;">Output</div>
<div style="left:2412.6px;top:778.0px;width:190px;height:60px;line-height:60px;text-align:center;font-size:26px;color:#fff;">Master/VCA</div>
<div style="left:2607.7px;top:778.0px;width:100px;height:60px;line-height:60px;text-align:center;font-size:26px;color:#fff;">MIDI</div>
<div style="left:2729px;top:788px;width:128px;height:40px;background:#3a3a3a;border-radius:7px;border:1.5px solid #2a2a2a"></div>
<div style="left:2730px;top:789px;width:63px;height:38px;background:#3a6cb0;border-radius:6px 0 0 6px"></div>
<svg style="position:absolute;left:2748px;top:795px;" width="28" height="26" viewBox="0 0 28 26"><rect x="1.5" y="1.5" width="25" height="23" stroke="#fff" stroke-width="2.6" fill="none"/><path d="M10 2 V24 M18 2 V24" stroke="#fff" stroke-width="2.4"/></svg>
<svg style="position:absolute;left:2811px;top:795px;" width="28" height="26" viewBox="0 0 28 26"><rect x="1.5" y="1.5" width="25" height="23" stroke="#fff" stroke-width="2.6" fill="none"/><path d="M14 2 V24" stroke="#fff" stroke-width="2.4"/></svg>
<div style="left:466px;top:836px;width:183px;height:748px;background:#4b4b4b"></div>
<div style="left:648px;top:836px;width:2px;height:748px;background:#111"></div>
<div style="left:727.6px;top:836px;width:2px;height:700px;background:#4f4f4f"></div>
<div style="left:861.6px;top:836px;width:2px;height:700px;background:#4f4f4f"></div>
<div style="left:995.6px;top:836px;width:2px;height:700px;background:#4f4f4f"></div>
<div style="left:1129.6px;top:836px;width:2px;height:700px;background:#4f4f4f"></div>
<div style="left:1263.6px;top:836px;width:2px;height:700px;background:#4f4f4f"></div>
<div style="left:1397.6px;top:836px;width:2px;height:700px;background:#4f4f4f"></div>
<div style="left:1531.6px;top:836px;width:2px;height:700px;background:#4f4f4f"></div>
<div style="left:1665.6px;top:836px;width:2px;height:700px;background:#4f4f4f"></div>
<div style="left:1799.6px;top:836px;width:2px;height:700px;background:#4f4f4f"></div>
<div style="left:1933.6px;top:836px;width:2px;height:700px;background:#4f4f4f"></div>
<div style="left:2067.6px;top:836px;width:2px;height:700px;background:#4f4f4f"></div>
<div style="left:2201.6px;top:836px;width:2px;height:700px;background:#4f4f4f"></div>
<div style="left:2335.6px;top:836px;width:2px;height:700px;background:#4f4f4f"></div>
<div style="left:2469.6px;top:836px;width:2px;height:700px;background:#4f4f4f"></div>
<div style="left:2603.6px;top:836px;width:2px;height:700px;background:#4f4f4f"></div>
<div style="left:2737.6px;top:836px;width:2px;height:700px;background:#4f4f4f"></div>
<div style="left:2871.6px;top:836px;width:2px;height:700px;background:#4f4f4f"></div>
<div style="left:649px;top:1535px;width:79.60000000000002px;height:49px;background:#1dc55a"></div>
<div style="left:621.8px;top:1529.0px;width:134px;height:60px;line-height:60px;text-align:center;font-size:23px;color:#f6f2ff;">id Bass</div>
<div style="left:728.6px;top:1535px;width:134.0px;height:49px;background:#1dc787"></div>
<div style="left:727.6px;top:1535px;width:2px;height:49px;background:rgba(0,0,0,.35)"></div>
<div style="left:728.6px;top:1529.0px;width:134px;height:60px;line-height:60px;text-align:center;font-size:23px;color:#f6f2ff;">Midn...Fuzz</div>
<div style="left:862.6px;top:1535px;width:134.0px;height:49px;background:#1cc5a5"></div>
<div style="left:861.6px;top:1535px;width:2px;height:49px;background:rgba(0,0,0,.35)"></div>
<div style="left:862.6px;top:1529.0px;width:134px;height:60px;line-height:60px;text-align:center;font-size:23px;color:#f6f2ff;">Old...Keys</div>
<div style="left:996.6px;top:1535px;width:133.9999999999999px;height:49px;background:#1da3ab"></div>
<div style="left:995.6px;top:1535px;width:2px;height:49px;background:rgba(0,0,0,.35)"></div>
<div style="left:996.6px;top:1529.0px;width:134px;height:60px;line-height:60px;text-align:center;font-size:23px;color:#f6f2ff;">Yam...iano</div>
<div style="left:1130.6px;top:1535px;width:134.0px;height:49px;background:#2a7cb5"></div>
<div style="left:1129.6px;top:1535px;width:2px;height:49px;background:rgba(0,0,0,.35)"></div>
<div style="left:1130.6px;top:1529.0px;width:134px;height:60px;line-height:60px;text-align:center;font-size:23px;color:#f6f2ff;">Chop...rass</div>
<div style="left:1264.6px;top:1535px;width:134.0px;height:49px;background:#3457b9"></div>
<div style="left:1263.6px;top:1535px;width:2px;height:49px;background:rgba(0,0,0,.35)"></div>
<div style="left:1264.6px;top:1529.0px;width:134px;height:60px;line-height:60px;text-align:center;font-size:23px;color:#f6f2ff;">Chop...Vox</div>
<div style="left:1398.6px;top:1535px;width:134.0px;height:49px;background:#4440b4"></div>
<div style="left:1397.6px;top:1535px;width:2px;height:49px;background:rgba(0,0,0,.35)"></div>
<div style="left:1398.6px;top:1529.0px;width:134px;height:60px;line-height:60px;text-align:center;font-size:23px;color:#f6f2ff;">Elect...ar 01</div>
<div style="left:1532.6px;top:1535px;width:134.0px;height:49px;background:#5340b4"></div>
<div style="left:1531.6px;top:1535px;width:2px;height:49px;background:rgba(0,0,0,.35)"></div>
<div style="left:1532.6px;top:1529.0px;width:134px;height:60px;line-height:60px;text-align:center;font-size:23px;color:#f6f2ff;">Elect...ar 02</div>
<div style="left:1666.6px;top:1535px;width:134.0px;height:49px;background:#643eb4"></div>
<div style="left:1665.6px;top:1535px;width:2px;height:49px;background:rgba(0,0,0,.35)"></div>
<div style="left:1666.6px;top:1529.0px;width:134px;height:60px;line-height:60px;text-align:center;font-size:23px;color:#f6f2ff;">Sust...uitar</div>
<div style="left:1800.6px;top:1535px;width:134.0px;height:49px;background:#7838b6"></div>
<div style="left:1799.6px;top:1535px;width:2px;height:49px;background:rgba(0,0,0,.35)"></div>
<div style="left:1800.6px;top:1529.0px;width:134px;height:60px;line-height:60px;text-align:center;font-size:23px;color:#f6f2ff;">FX</div>
<div style="left:1934.6px;top:1535px;width:134.0px;height:49px;background:#8a1eae"></div>
<div style="left:1933.6px;top:1535px;width:2px;height:49px;background:rgba(0,0,0,.35)"></div>
<div style="left:1934.6px;top:1529.0px;width:134px;height:60px;line-height:60px;text-align:center;font-size:23px;color:#f6f2ff;">Danc...iano</div>
<div style="left:2068.6px;top:1535px;width:134.0px;height:49px;background:#a81c96"></div>
<div style="left:2067.6px;top:1535px;width:2px;height:49px;background:rgba(0,0,0,.35)"></div>
<div style="left:2068.6px;top:1529.0px;width:134px;height:60px;line-height:60px;text-align:center;font-size:23px;color:#f6f2ff;">Percussion</div>
<div style="left:2202.6px;top:1535px;width:134.0px;height:49px;background:#1ba83e"></div>
<div style="left:2201.6px;top:1535px;width:2px;height:49px;background:rgba(0,0,0,.35)"></div>
<div style="left:2202.6px;top:1529.0px;width:134px;height:60px;line-height:60px;text-align:center;font-size:23px;color:#f6f2ff;">Chan...r EQ</div>
<div style="left:2336.6px;top:1535px;width:134.0px;height:49px;background:#7f7f24"></div>
<div style="left:2335.6px;top:1535px;width:2px;height:49px;background:rgba(0,0,0,.35)"></div>
<div style="left:2336.6px;top:1529.0px;width:134px;height:60px;line-height:60px;text-align:center;font-size:23px;color:#f6f2ff;">Reverb</div>
<div style="left:2470.6px;top:1535px;width:134.0px;height:49px;background:#7f7f24"></div>
<div style="left:2469.6px;top:1535px;width:2px;height:49px;background:rgba(0,0,0,.35)"></div>
<div style="left:2470.6px;top:1529.0px;width:134px;height:60px;line-height:60px;text-align:center;font-size:23px;color:#f6f2ff;">Delay</div>
<div style="left:2604.6px;top:1535px;width:134.0px;height:49px;background:#7c1f7e"></div>
<div style="left:2603.6px;top:1535px;width:2px;height:49px;background:rgba(0,0,0,.35)"></div>
<div style="left:2604.6px;top:1529.0px;width:134px;height:60px;line-height:60px;text-align:center;font-size:23px;color:#f6f2ff;">Stereo Out</div>
<div style="left:2738.6px;top:1535px;width:134.0px;height:49px;background:#54348c"></div>
<div style="left:2737.6px;top:1535px;width:2px;height:49px;background:rgba(0,0,0,.35)"></div>
<div style="left:2738.6px;top:1529.0px;width:134px;height:60px;line-height:60px;text-align:center;font-size:23px;color:#f6f2ff;">Master</div>
<div style="left:649px;top:1534px;width:2224px;height:2px;background:rgba(0,0,0,.3)"></div>
<div style="left:2203px;top:836px;width:134px;height:699px;background:#868686"></div>
<div style="left:2214px;top:836px;width:112px;height:5px;background:#555;border-radius:0 0 5px 5px;border:1px solid #444;border-top:none"></div>
<div style="left:2213px;top:851px;width:114px;height:35px;background:#565656;border:1.5px solid #3c3c3c;border-radius:7px"></div>
<div style="left:2215.0px;top:838.5px;width:110px;height:60px;line-height:60px;text-align:center;font-size:22px;color:#6ee07a;">Read</div>
<div style="left:2240px;top:907px;width:60px;height:43px;background:#45442f;border:1.5px solid #2d2d22;border-radius:3px"></div>
<svg style="position:absolute;left:2254px;top:913px;" width="32" height="32" viewBox="0 0 32 32"><circle cx="16" cy="16" r="15" fill="#f4e84a"/><path d="M16 16 V3" stroke="#222" stroke-width="2"/></svg>
<svg style="position:absolute;left:2234px;top:973.8px;" width="74" height="74" viewBox="0 0 74 74"><circle cx="37" cy="37" r="28" fill="#8a8a8a"/><path d="M20.5 63.5 A31 31 0 1 1 53.5 63.5" stroke="#2f2f2f" stroke-width="6.5" fill="none"/><path d="M37 3 V10" stroke="#5ad16a" stroke-width="2.2"/><path d="M37 9 V17" stroke="#222" stroke-width="2.2"/></svg>
<div style="left:2214px;top:1059.4px;width:54px;height:35px;background:#2c2c2c;border-radius:2px"></div>
<div style="left:2214.0px;top:1047.0px;width:54px;height:60px;line-height:60px;text-align:center;font-size:23px;color:#f0f0f0;"></div>
<div style="left:2272px;top:1059.4px;width:54px;height:35px;background:#2c2c2c;border-radius:2px"></div>
<svg style="position:absolute;left:2212px;top:1130.1px;" width="104" height="288.4000000000001" viewBox="0 0 104 288.4000000000001"><g transform="translate(0,10)"><rect x="0" y="-1.0" width="22" height="2" fill="#9c9c9c"/><rect x="0" y="33.1" width="22" height="2" fill="#9c9c9c"/><rect x="0" y="99.2" width="22" height="2" fill="#9c9c9c"/><rect x="0" y="135.1" width="22" height="2" fill="#9c9c9c"/><rect x="0" y="165.8" width="22" height="2" fill="#9c9c9c"/><rect x="0" y="186.3" width="22" height="2" fill="#9c9c9c"/><rect x="0" y="206.0" width="22" height="2" fill="#9c9c9c"/><rect x="0" y="226.0" width="22" height="2" fill="#9c9c9c"/><rect x="0" y="242.2" width="22" height="2" fill="#9c9c9c"/><rect x="0" y="265.4" width="22" height="2" fill="#9c9c9c"/><rect x="14" y="7.0" width="8" height="2" fill="#8c8c8c"/><rect x="14" y="19.0" width="8" height="2" fill="#8c8c8c"/><rect x="14" y="110.9" width="8" height="2" fill="#8c8c8c"/><rect x="14" y="123.1" width="8" height="2" fill="#8c8c8c"/><rect x="14" y="139.4" width="8" height="2" fill="#8c8c8c"/><rect x="14" y="145.3" width="8" height="2" fill="#8c8c8c"/><rect x="14" y="151.4" width="8" height="2" fill="#8c8c8c"/><rect x="14" y="156.7" width="8" height="2" fill="#8c8c8c"/><rect x="14" y="172.2" width="8" height="2" fill="#8c8c8c"/><rect x="14" y="178.0" width="8" height="2" fill="#8c8c8c"/><rect x="14" y="192.1" width="8" height="2" fill="#8c8c8c"/><rect x="14" y="198.3" width="8" height="2" fill="#8c8c8c"/><rect x="14" y="212.1" width="8" height="2" fill="#8c8c8c"/><rect x="14" y="218.8" width="8" height="2" fill="#8c8c8c"/><rect x="14" y="232.1" width="8" height="2" fill="#8c8c8c"/><rect x="14" y="237.4" width="8" height="2" fill="#8c8c8c"/><rect x="14" y="249.4" width="8" height="2" fill="#8c8c8c"/><rect x="14" y="256.1" width="8" height="2" fill="#8c8c8c"/><rect x="24" y="-4" width="4" height="272.4000000000001" fill="#242424"/><text x="73" y="5.2" text-anchor="end" font-size="14.5" fill="#d0d0d0" font-family="Liberation Sans">0</text><rect x="74" y="-0.9" width="6" height="1.8" fill="#bdbdbd"/><text x="73" y="21.6" text-anchor="end" font-size="14.5" fill="#d0d0d0" font-family="Liberation Sans">3</text><rect x="74" y="15.5" width="6" height="1.8" fill="#bdbdbd"/><text x="73" y="39.3" text-anchor="end" font-size="14.5" fill="#d0d0d0" font-family="Liberation Sans">6</text><rect x="74" y="33.2" width="6" height="1.8" fill="#bdbdbd"/><text x="73" y="57.4" text-anchor="end" font-size="14.5" fill="#d0d0d0" font-family="Liberation Sans">9</text><rect x="74" y="51.3" width="6" height="1.8" fill="#bdbdbd"/><text x="73" y="76.1" text-anchor="end" font-size="14.5" fill="#d0d0d0" font-family="Liberation Sans">12</text><rect x="74" y="70.0" width="6" height="1.8" fill="#bdbdbd"/><text x="73" y="93.6" text-anchor="end" font-size="14.5" fill="#d0d0d0" font-family="Liberation Sans">15</text><rect x="74" y="87.5" width="6" height="1.8" fill="#bdbdbd"/><text x="73" y="111.5" text-anchor="end" font-size="14.5" fill="#d0d0d0" font-family="Liberation Sans">18</text><rect x="74" y="105.4" width="6" height="1.8" fill="#bdbdbd"/><text x="73" y="129.6" text-anchor="end" font-size="14.5" fill="#d0d0d0" font-family="Liberation Sans">21</text><rect x="74" y="123.5" width="6" height="1.8" fill="#bdbdbd"/><text x="73" y="148.3" text-anchor="end" font-size="14.5" fill="#d0d0d0" font-family="Liberation Sans">24</text><rect x="74" y="142.2" width="6" height="1.8" fill="#bdbdbd"/><text x="73" y="172.0" text-anchor="end" font-size="14.5" fill="#d0d0d0" font-family="Liberation Sans">30</text><rect x="74" y="165.9" width="6" height="1.8" fill="#bdbdbd"/><text x="73" y="192.5" text-anchor="end" font-size="14.5" fill="#d0d0d0" font-family="Liberation Sans">35</text><rect x="74" y="186.4" width="6" height="1.8" fill="#bdbdbd"/><text x="73" y="212.2" text-anchor="end" font-size="14.5" fill="#d0d0d0" font-family="Liberation Sans">40</text><rect x="74" y="206.1" width="6" height="1.8" fill="#bdbdbd"/><text x="73" y="232.2" text-anchor="end" font-size="14.5" fill="#d0d0d0" font-family="Liberation Sans">45</text><rect x="74" y="226.1" width="6" height="1.8" fill="#bdbdbd"/><text x="73" y="252.2" text-anchor="end" font-size="14.5" fill="#d0d0d0" font-family="Liberation Sans">50</text><rect x="74" y="246.1" width="6" height="1.8" fill="#bdbdbd"/><text x="73" y="271.6" text-anchor="end" font-size="14.5" fill="#d0d0d0" font-family="Liberation Sans">60</text><rect x="74" y="265.5" width="6" height="1.8" fill="#bdbdbd"/><rect x="79.4" y="-0.9" width="1.8" height="1.8" fill="#b0b0b0"/><rect x="79.4" y="4.1" width="1.8" height="1.8" fill="#b0b0b0"/><rect x="79.4" y="9.2" width="1.8" height="1.8" fill="#b0b0b0"/><rect x="79.4" y="14.2" width="1.8" height="1.8" fill="#b0b0b0"/><rect x="79.4" y="19.2" width="1.8" height="1.8" fill="#b0b0b0"/><rect x="79.4" y="24.2" width="1.8" height="1.8" fill="#b0b0b0"/><rect x="79.4" y="29.3" width="1.8" height="1.8" fill="#b0b0b0"/><rect x="79.4" y="34.3" width="1.8" height="1.8" fill="#b0b0b0"/><rect x="79.4" y="39.3" width="1.8" height="1.8" fill="#b0b0b0"/><rect x="79.4" y="44.3" width="1.8" height="1.8" fill="#b0b0b0"/><rect x="79.4" y="49.4" width="1.8" height="1.8" fill="#b0b0b0"/><rect x="79.4" y="54.4" width="1.8" height="1.8" fill="#b0b0b0"/><rect x="79.4" y="59.4" width="1.8" height="1.8" fill="#b0b0b0"/><rect x="79.4" y="64.4" width="1.8" height="1.8" fill="#b0b0b0"/><rect x="79.4" y="69.5" width="1.8" height="1.8" fill="#b0b0b0"/><rect x="79.4" y="74.5" width="1.8" height="1.8" fill="#b0b0b0"/><rect x="79.4" y="79.5" width="1.8" height="1.8" fill="#b0b0b0"/><rect x="79.4" y="84.5" width="1.8" height="1.8" fill="#b0b0b0"/><rect x="79.4" y="89.6" width="1.8" height="1.8" fill="#b0b0b0"/><rect x="79.4" y="94.6" width="1.8" height="1.8" fill="#b0b0b0"/><rect x="79.4" y="99.6" width="1.8" height="1.8" fill="#b0b0b0"/><rect x="79.4" y="104.7" width="1.8" height="1.8" fill="#b0b0b0"/><rect x="79.4" y="109.7" width="1.8" height="1.8" fill="#b0b0b0"/><rect x="79.4" y="114.7" width="1.8" height="1.8" fill="#b0b0b0"/><rect x="79.4" y="119.7" width="1.8" height="1.8" fill="#b0b0b0"/><rect x="79.4" y="124.8" width="1.8" height="1.8" fill="#b0b0b0"/><rect x="79.4" y="129.8" width="1.8" height="1.8" fill="#b0b0b0"/><rect x="79.4" y="134.8" width="1.8" height="1.8" fill="#b0b0b0"/><rect x="79.4" y="139.8" width="1.8" height="1.8" fill="#b0b0b0"/><rect x="79.4" y="144.9" width="1.8" height="1.8" fill="#b0b0b0"/><rect x="79.4" y="149.9" width="1.8" height="1.8" fill="#b0b0b0"/><rect x="79.4" y="154.9" width="1.8" height="1.8" fill="#b0b0b0"/><rect x="79.4" y="159.9" width="1.8" height="1.8" fill="#b0b0b0"/><rect x="79.4" y="165.0" width="1.8" height="1.8" fill="#b0b0b0"/><rect x="79.4" y="170.0" width="1.8" height="1.8" fill="#b0b0b0"/><rect x="79.4" y="175.0" width="1.8" height="1.8" fill="#b0b0b0"/><rect x="79.4" y="180.1" width="1.8" height="1.8" fill="#b0b0b0"/><rect x="79.4" y="185.1" width="1.8" height="1.8" fill="#b0b0b0"/><rect x="79.4" y="190.1" width="1.8" height="1.8" fill="#b0b0b0"/><rect x="79.4" y="195.1" width="1.8" height="1.8" fill="#b0b0b0"/><rect x="79.4" y="200.2" width="1.8" height="1.8" fill="#b0b0b0"/><rect x="79.4" y="205.2" width="1.8" height="1.8" fill="#b0b0b0"/><rect x="79.4" y="210.2" width="1.8" height="1.8" fill="#b0b0b0"/><rect x="79.4" y="215.2" width="1.8" height="1.8" fill="#b0b0b0"/><rect x="79.4" y="220.3" width="1.8" height="1.8" fill="#b0b0b0"/><rect x="79.4" y="225.3" width="1.8" height="1.8" fill="#b0b0b0"/><rect x="79.4" y="230.3" width="1.8" height="1.8" fill="#b0b0b0"/><rect x="79.4" y="235.3" width="1.8" height="1.8" fill="#b0b0b0"/><rect x="79.4" y="240.4" width="1.8" height="1.8" fill="#b0b0b0"/><rect x="79.4" y="245.4" width="1.8" height="1.8" fill="#b0b0b0"/><rect x="79.4" y="250.4" width="1.8" height="1.8" fill="#b0b0b0"/><rect x="79.4" y="255.4" width="1.8" height="1.8" fill="#b0b0b0"/><rect x="79.4" y="260.5" width="1.8" height="1.8" fill="#b0b0b0"/><rect x="79.4" y="265.5" width="1.8" height="1.8" fill="#b0b0b0"/></g></svg>
<div style="left:2295px;top:1136.1px;width:19px;height:272.4000000000001px;background:linear-gradient(#3b352c,#2e302d 35%,#2b312d)"></div>
<div style="left:2221px;top:1173px;width:34px;height:70px;border-radius:3px;box-shadow:1px 3px 4px rgba(0,0,0,.4);background:linear-gradient(#bdbdbd 0,#cfcfcf 13%,#ececec 13.5%,#ececec 14.5%,#8c8c8c 15%,#8c8c8c 21.5%,#9c9c9c 22%,#9c9c9c 28%,#8e8e8e 28.5%,#8e8e8e 35%,#a3a3a3 35.5%,#a3a3a3 42%,#979797 42.5%,#979797 48.5%,#2c2c2c 49%,#2c2c2c 51%,#b4b4b4 51.5%,#b4b4b4 58%,#c6c6c6 58.5%,#c6c6c6 65%,#bcbcbc 65.5%,#bcbcbc 72%,#cdcdcd 72.5%,#cdcdcd 79%,#c4c4c4 79.5%,#d6d6d6 84.5%,#f2f2f2 85%,#f2f2f2 86.5%,#9c9c9c 87%,#8a8a8a 100%)"></div>
<div style="left:2212px;top:1206.5px;width:9px;height:3px;background:#f4f4f4"></div>
<div style="left:2212px;top:1461.6px;width:55px;height:35px;background:#575757;border:1.5px solid #3a3a3a;border-radius:7px"></div>
<div style="left:2214.5px;top:1449.0px;width:50px;height:60px;line-height:60px;text-align:center;font-size:25px;color:#f0f0f0;">M</div>
<div style="left:2272px;top:1461.6px;width:55px;height:35px;background:#575757;border:1.5px solid #3a3a3a;border-radius:7px"></div>
<div style="left:2274.5px;top:1449.0px;width:50px;height:60px;line-height:60px;text-align:center;font-size:25px;color:#f0f0f0;">S</div>
<div style="left:2348px;top:836px;width:112px;height:5px;background:#555;border-radius:0 0 5px 5px;border:1px solid #444;border-top:none"></div>
<div style="left:2347px;top:851px;width:114px;height:35px;background:#565656;border:1.5px solid #3c3c3c;border-radius:7px"></div>
<div style="left:2349.0px;top:838.5px;width:110px;height:60px;line-height:60px;text-align:center;font-size:22px;color:#6ee07a;">Read</div>
<div style="left:2374px;top:907px;width:60px;height:43px;background:#45442f;border:1.5px solid #2d2d22;border-radius:3px"></div>
<svg style="position:absolute;left:2388px;top:913px;" width="32" height="32" viewBox="0 0 32 32"><circle cx="16" cy="16" r="15" fill="#f4e84a"/><path d="M16 16 V3" stroke="#222" stroke-width="2"/></svg>
<svg style="position:absolute;left:2368px;top:973.8px;" width="74" height="74" viewBox="0 0 74 74"><circle cx="37" cy="37" r="28" fill="#8a8a8a"/><path d="M20.5 63.5 A31 31 0 1 1 53.5 63.5" stroke="#2f2f2f" stroke-width="6.5" fill="none"/><path d="M37 3 V10" stroke="#5ad16a" stroke-width="2.2"/><path d="M37 9 V17" stroke="#222" stroke-width="2.2"/></svg>
<div style="left:2348px;top:1059.4px;width:54px;height:35px;background:#2c2c2c;border-radius:2px"></div>
<div style="left:2348.0px;top:1047.0px;width:54px;height:60px;line-height:60px;text-align:center;font-size:23px;color:#f0f0f0;">0.0</div>
<div style="left:2406px;top:1059.4px;width:54px;height:35px;background:#2c2c2c;border-radius:2px"></div>
<div style="left:2406.0px;top:1047.0px;width:54px;height:60px;line-height:60px;text-align:center;font-size:23px;color:#6ee07a;letter-spacing:-1px">-36.2</div>
<svg style="position:absolute;left:2346px;top:1130.1px;" width="104" height="288.4000000000001" viewBox="0 0 104 288.4000000000001"><g transform="translate(0,10)"><rect x="0" y="-1.0" width="22" height="2" fill="#9c9c9c"/><rect x="0" y="33.1" width="22" height="2" fill="#9c9c9c"/><rect x="0" y="99.2" width="22" height="2" fill="#9c9c9c"/><rect x="0" y="135.1" width="22" height="2" fill="#9c9c9c"/><rect x="0" y="165.8" width="22" height="2" fill="#9c9c9c"/><rect x="0" y="186.3" width="22" height="2" fill="#9c9c9c"/><rect x="0" y="206.0" width="22" height="2" fill="#9c9c9c"/><rect x="0" y="226.0" width="22" height="2" fill="#9c9c9c"/><rect x="0" y="242.2" width="22" height="2" fill="#9c9c9c"/><rect x="0" y="265.4" width="22" height="2" fill="#9c9c9c"/><rect x="14" y="7.0" width="8" height="2" fill="#8c8c8c"/><rect x="14" y="19.0" width="8" height="2" fill="#8c8c8c"/><rect x="14" y="110.9" width="8" height="2" fill="#8c8c8c"/><rect x="14" y="123.1" width="8" height="2" fill="#8c8c8c"/><rect x="14" y="139.4" width="8" height="2" fill="#8c8c8c"/><rect x="14" y="145.3" width="8" height="2" fill="#8c8c8c"/><rect x="14" y="151.4" width="8" height="2" fill="#8c8c8c"/><rect x="14" y="156.7" width="8" height="2" fill="#8c8c8c"/><rect x="14" y="172.2" width="8" height="2" fill="#8c8c8c"/><rect x="14" y="178.0" width="8" height="2" fill="#8c8c8c"/><rect x="14" y="192.1" width="8" height="2" fill="#8c8c8c"/><rect x="14" y="198.3" width="8" height="2" fill="#8c8c8c"/><rect x="14" y="212.1" width="8" height="2" fill="#8c8c8c"/><rect x="14" y="218.8" width="8" height="2" fill="#8c8c8c"/><rect x="14" y="232.1" width="8" height="2" fill="#8c8c8c"/><rect x="14" y="237.4" width="8" height="2" fill="#8c8c8c"/><rect x="14" y="249.4" width="8" height="2" fill="#8c8c8c"/><rect x="14" y="256.1" width="8" height="2" fill="#8c8c8c"/><rect x="24" y="-4" width="4" height="272.4000000000001" fill="#242424"/><text x="73" y="5.2" text-anchor="end" font-size="14.5" fill="#d0d0d0" font-family="Liberation Sans">0</text><rect x="74" y="-0.9" width="6" height="1.8" fill="#bdbdbd"/><text x="73" y="21.6" text-anchor="end" font-size="14.5" fill="#d0d0d0" font-family="Liberation Sans">3</text><rect x="74" y="15.5" width="6" height="1.8" fill="#bdbdbd"/><text x="73" y="39.3" text-anchor="end" font-size="14.5" fill="#d0d0d0" font-family="Liberation Sans">6</text><rect x="74" y="33.2" width="6" height="1.8" fill="#bdbdbd"/><text x="73" y="57.4" text-anchor="end" font-size="14.5" fill="#d0d0d0" font-family="Liberation Sans">9</text><rect x="74" y="51.3" width="6" height="1.8" fill="#bdbdbd"/><text x="73" y="76.1" text-anchor="end" font-size="14.5" fill="#d0d0d0" font-family="Liberation Sans">12</text><rect x="74" y="70.0" width="6" height="1.8" fill="#bdbdbd"/><text x="73" y="93.6" text-anchor="end" font-size="14.5" fill="#d0d0d0" font-family="Liberation Sans">15</text><rect x="74" y="87.5" width="6" height="1.8" fill="#bdbdbd"/><text x="73" y="111.5" text-anchor="end" font-size="14.5" fill="#d0d0d0" font-family="Liberation Sans">18</text><rect x="74" y="105.4" width="6" height="1.8" fill="#bdbdbd"/><text x="73" y="129.6" text-anchor="end" font-size="14.5" fill="#d0d0d0" font-family="Liberation Sans">21</text><rect x="74" y="123.5" width="6" height="1.8" fill="#bdbdbd"/><text x="73" y="148.3" text-anchor="end" font-size="14.5" fill="#d0d0d0" font-family="Liberation Sans">24</text><rect x="74" y="142.2" width="6" height="1.8" fill="#bdbdbd"/><text x="73" y="172.0" text-anchor="end" font-size="14.5" fill="#d0d0d0" font-family="Liberation Sans">30</text><rect x="74" y="165.9" width="6" height="1.8" fill="#bdbdbd"/><text x="73" y="192.5" text-anchor="end" font-size="14.5" fill="#d0d0d0" font-family="Liberation Sans">35</text><rect x="74" y="186.4" width="6" height="1.8" fill="#bdbdbd"/><text x="73" y="212.2" text-anchor="end" font-size="14.5" fill="#d0d0d0" font-family="Liberation Sans">40</text><rect x="74" y="206.1" width="6" height="1.8" fill="#bdbdbd"/><text x="73" y="232.2" text-anchor="end" font-size="14.5" fill="#d0d0d0" font-family="Liberation Sans">45</text><rect x="74" y="226.1" width="6" height="1.8" fill="#bdbdbd"/><text x="73" y="252.2" text-anchor="end" font-size="14.5" fill="#d0d0d0" font-family="Liberation Sans">50</text><rect x="74" y="246.1" width="6" height="1.8" fill="#bdbdbd"/><text x="73" y="271.6" text-anchor="end" font-size="14.5" fill="#d0d0d0" font-family="Liberation Sans">60</text><rect x="74" y="265.5" width="6" height="1.8" fill="#bdbdbd"/><rect x="79.4" y="-0.9" width="1.8" height="1.8" fill="#b0b0b0"/><rect x="79.4" y="4.1" width="1.8" height="1.8" fill="#b0b0b0"/><rect x="79.4" y="9.2" width="1.8" height="1.8" fill="#b0b0b0"/><rect x="79.4" y="14.2" width="1.8" height="1.8" fill="#b0b0b0"/><rect x="79.4" y="19.2" width="1.8" height="1.8" fill="#b0b0b0"/><rect x="79.4" y="24.2" width="1.8" height="1.8" fill="#b0b0b0"/><rect x="79.4" y="29.3" width="1.8" height="1.8" fill="#b0b0b0"/><rect x="79.4" y="34.3" width="1.8" height="1.8" fill="#b0b0b0"/><rect x="79.4" y="39.3" width="1.8" height="1.8" fill="#b0b0b0"/><rect x="79.4" y="44.3" width="1.8" height="1.8" fill="#b0b0b0"/><rect x="79.4" y="49.4" width="1.8" height="1.8" fill="#b0b0b0"/><rect x="79.4" y="54.4" width="1.8" height="1.8" fill="#b0b0b0"/><rect x="79.4" y="59.4" width="1.8" height="1.8" fill="#b0b0b0"/><rect x="79.4" y="64.4" width="1.8" height="1.8" fill="#b0b0b0"/><rect x="79.4" y="69.5" width="1.8" height="1.8" fill="#b0b0b0"/><rect x="79.4" y="74.5" width="1.8" height="1.8" fill="#b0b0b0"/><rect x="79.4" y="79.5" width="1.8" height="1.8" fill="#b0b0b0"/><rect x="79.4" y="84.5" width="1.8" height="1.8" fill="#b0b0b0"/><rect x="79.4" y="89.6" width="1.8" height="1.8" fill="#b0b0b0"/><rect x="79.4" y="94.6" width="1.8" height="1.8" fill="#b0b0b0"/><rect x="79.4" y="99.6" width="1.8" height="1.8" fill="#b0b0b0"/><rect x="79.4" y="104.7" width="1.8" height="1.8" fill="#b0b0b0"/><rect x="79.4" y="109.7" width="1.8" height="1.8" fill="#b0b0b0"/><rect x="79.4" y="114.7" width="1.8" height="1.8" fill="#b0b0b0"/><rect x="79.4" y="119.7" width="1.8" height="1.8" fill="#b0b0b0"/><rect x="79.4" y="124.8" width="1.8" height="1.8" fill="#b0b0b0"/><rect x="79.4" y="129.8" width="1.8" height="1.8" fill="#b0b0b0"/><rect x="79.4" y="134.8" width="1.8" height="1.8" fill="#b0b0b0"/><rect x="79.4" y="139.8" width="1.8" height="1.8" fill="#b0b0b0"/><rect x="79.4" y="144.9" width="1.8" height="1.8" fill="#b0b0b0"/><rect x="79.4" y="149.9" width="1.8" height="1.8" fill="#b0b0b0"/><rect x="79.4" y="154.9" width="1.8" height="1.8" fill="#b0b0b0"/><rect x="79.4" y="159.9" width="1.8" height="1.8" fill="#b0b0b0"/><rect x="79.4" y="165.0" width="1.8" height="1.8" fill="#b0b0b0"/><rect x="79.4" y="170.0" width="1.8" height="1.8" fill="#b0b0b0"/><rect x="79.4" y="175.0" width="1.8" height="1.8" fill="#b0b0b0"/><rect x="79.4" y="180.1" width="1.8" height="1.8" fill="#b0b0b0"/><rect x="79.4" y="185.1" width="1.8" height="1.8" fill="#b0b0b0"/><rect x="79.4" y="190.1" width="1.8" height="1.8" fill="#b0b0b0"/><rect x="79.4" y="195.1" width="1.8" height="1.8" fill="#b0b0b0"/><rect x="79.4" y="200.2" width="1.8" height="1.8" fill="#b0b0b0"/><rect x="79.4" y="205.2" width="1.8" height="1.8" fill="#b0b0b0"/><rect x="79.4" y="210.2" width="1.8" height="1.8" fill="#b0b0b0"/><rect x="79.4" y="215.2" width="1.8" height="1.8" fill="#b0b0b0"/><rect x="79.4" y="220.3" width="1.8" height="1.8" fill="#b0b0b0"/><rect x="79.4" y="225.3" width="1.8" height="1.8" fill="#b0b0b0"/><rect x="79.4" y="230.3" width="1.8" height="1.8" fill="#b0b0b0"/><rect x="79.4" y="235.3" width="1.8" height="1.8" fill="#b0b0b0"/><rect x="79.4" y="240.4" width="1.8" height="1.8" fill="#b0b0b0"/><rect x="79.4" y="245.4" width="1.8" height="1.8" fill="#b0b0b0"/><rect x="79.4" y="250.4" width="1.8" height="1.8" fill="#b0b0b0"/><rect x="79.4" y="255.4" width="1.8" height="1.8" fill="#b0b0b0"/><rect x="79.4" y="260.5" width="1.8" height="1.8" fill="#b0b0b0"/><rect x="79.4" y="265.5" width="1.8" height="1.8" fill="#b0b0b0"/></g></svg>
<div style="left:2429px;top:1136.1px;width:19px;height:272.4000000000001px;background:linear-gradient(#3b352c,#2e302d 35%,#2b312d)"></div>
<div style="left:2429.5px;top:1340.6px;width:8px;height:67.90000000000009px;background:#4cd964"></div>
<div style="left:2429.5px;top:1337px;width:8px;height:2.5px;background:#4cd964"></div>
<div style="left:2439.0px;top:1347px;width:8px;height:61.5px;background:#4cd964"></div>
<div style="left:2439.0px;top:1341px;width:8px;height:2.5px;background:#4cd964"></div>
<div style="left:2355px;top:1173px;width:34px;height:70px;border-radius:3px;box-shadow:1px 3px 4px rgba(0,0,0,.4);background:linear-gradient(#bdbdbd 0,#cfcfcf 13%,#ececec 13.5%,#ececec 14.5%,#8c8c8c 15%,#8c8c8c 21.5%,#9c9c9c 22%,#9c9c9c 28%,#8e8e8e 28.5%,#8e8e8e 35%,#a3a3a3 35.5%,#a3a3a3 42%,#979797 42.5%,#979797 48.5%,#2c2c2c 49%,#2c2c2c 51%,#b4b4b4 51.5%,#b4b4b4 58%,#c6c6c6 58.5%,#c6c6c6 65%,#bcbcbc 65.5%,#bcbcbc 72%,#cdcdcd 72.5%,#cdcdcd 79%,#c4c4c4 79.5%,#d6d6d6 84.5%,#f2f2f2 85%,#f2f2f2 86.5%,#9c9c9c 87%,#8a8a8a 100%)"></div>
<div style="left:2346px;top:1206.5px;width:9px;height:3px;background:#f4f4f4"></div>
<div style="left:2346px;top:1461.6px;width:55px;height:35px;background:#575757;border:1.5px solid #3a3a3a;border-radius:7px"></div>
<div style="left:2348.5px;top:1449.0px;width:50px;height:60px;line-height:60px;text-align:center;font-size:25px;color:#f0f0f0;">M</div>
<div style="left:2406px;top:1461.6px;width:55px;height:35px;background:#575757;border:1.5px solid #3a3a3a;border-radius:7px"></div>
<div style="left:2408.5px;top:1449.0px;width:50px;height:60px;line-height:60px;text-align:center;font-size:25px;color:#f0f0f0;">S</div>
<div style="left:2482px;top:836px;width:112px;height:5px;background:#555;border-radius:0 0 5px 5px;border:1px solid #444;border-top:none"></div>
<div style="left:2481px;top:851px;width:114px;height:35px;background:#565656;border:1.5px solid #3c3c3c;border-radius:7px"></div>
<div style="left:2483.0px;top:838.5px;width:110px;height:60px;line-height:60px;text-align:center;font-size:22px;color:#6ee07a;">Read</div>
<div style="left:2508px;top:907px;width:60px;height:43px;background:#45442f;border:1.5px solid #2d2d22;border-radius:3px"></div>
<svg style="position:absolute;left:2522px;top:913px;" width="32" height="32" viewBox="0 0 32 32"><circle cx="16" cy="16" r="15" fill="#f4e84a"/><path d="M16 16 V3" stroke="#222" stroke-width="2"/></svg>
<svg style="position:absolute;left:2502px;top:973.8px;" width="74" height="74" viewBox="0 0 74 74"><circle cx="37" cy="37" r="28" fill="#8a8a8a"/><path d="M20.5 63.5 A31 31 0 1 1 53.5 63.5" stroke="#2f2f2f" stroke-width="6.5" fill="none"/><path d="M37 3 V10" stroke="#5ad16a" stroke-width="2.2"/><path d="M37 9 V17" stroke="#222" stroke-width="2.2"/></svg>
<div style="left:2482px;top:1059.4px;width:54px;height:35px;background:#2c2c2c;border-radius:2px"></div>
<div style="left:2482.0px;top:1047.0px;width:54px;height:60px;line-height:60px;text-align:center;font-size:23px;color:#f0f0f0;">0.0</div>
<div style="left:2540px;top:1059.4px;width:54px;height:35px;background:#2c2c2c;border-radius:2px"></div>
<div style="left:2540.0px;top:1047.0px;width:54px;height:60px;line-height:60px;text-align:center;font-size:23px;color:#6ee07a;letter-spacing:-1px">-32.3</div>
<svg style="position:absolute;left:2480px;top:1130.1px;" width="104" height="288.4000000000001" viewBox="0 0 104 288.4000000000001"><g transform="translate(0,10)"><rect x="0" y="-1.0" width="22" height="2" fill="#9c9c9c"/><rect x="0" y="33.1" width="22" height="2" fill="#9c9c9c"/><rect x="0" y="99.2" width="22" height="2" fill="#9c9c9c"/><rect x="0" y="135.1" width="22" height="2" fill="#9c9c9c"/><rect x="0" y="165.8" width="22" height="2" fill="#9c9c9c"/><rect x="0" y="186.3" width="22" height="2" fill="#9c9c9c"/><rect x="0" y="206.0" width="22" height="2" fill="#9c9c9c"/><rect x="0" y="226.0" width="22" height="2" fill="#9c9c9c"/><rect x="0" y="242.2" width="22" height="2" fill="#9c9c9c"/><rect x="0" y="265.4" width="22" height="2" fill="#9c9c9c"/><rect x="14" y="7.0" width="8" height="2" fill="#8c8c8c"/><rect x="14" y="19.0" width="8" height="2" fill="#8c8c8c"/><rect x="14" y="110.9" width="8" height="2" fill="#8c8c8c"/><rect x="14" y="123.1" width="8" height="2" fill="#8c8c8c"/><rect x="14" y="139.4" width="8" height="2" fill="#8c8c8c"/><rect x="14" y="145.3" width="8" height="2" fill="#8c8c8c"/><rect x="14" y="151.4" width="8" height="2" fill="#8c8c8c"/><rect x="14" y="156.7" width="8" height="2" fill="#8c8c8c"/><rect x="14" y="172.2" width="8" height="2" fill="#8c8c8c"/><rect x="14" y="178.0" width="8" height="2" fill="#8c8c8c"/><rect x="14" y="192.1" width="8" height="2" fill="#8c8c8c"/><rect x="14" y="198.3" width="8" height="2" fill="#8c8c8c"/><rect x="14" y="212.1" width="8" height="2" fill="#8c8c8c"/><rect x="14" y="218.8" width="8" height="2" fill="#8c8c8c"/><rect x="14" y="232.1" width="8" height="2" fill="#8c8c8c"/><rect x="14" y="237.4" width="8" height="2" fill="#8c8c8c"/><rect x="14" y="249.4" width="8" height="2" fill="#8c8c8c"/><rect x="14" y="256.1" width="8" height="2" fill="#8c8c8c"/><rect x="24" y="-4" width="4" height="272.4000000000001" fill="#242424"/><text x="73" y="5.2" text-anchor="end" font-size="14.5" fill="#d0d0d0" font-family="Liberation Sans">0</text><rect x="74" y="-0.9" width="6" height="1.8" fill="#bdbdbd"/><text x="73" y="21.6" text-anchor="end" font-size="14.5" fill="#d0d0d0" font-family="Liberation Sans">3</text><rect x="74" y="15.5" width="6" height="1.8" fill="#bdbdbd"/><text x="73" y="39.3" text-anchor="end" font-size="14.5" fill="#d0d0d0" font-family="Liberation Sans">6</text><rect x="74" y="33.2" width="6" height="1.8" fill="#bdbdbd"/><text x="73" y="57.4" text-anchor="end" font-size="14.5" fill="#d0d0d0" font-family="Liberation Sans">9</text><rect x="74" y="51.3" width="6" height="1.8" fill="#bdbdbd"/><text x="73" y="76.1" text-anchor="end" font-size="14.5" fill="#d0d0d0" font-family="Liberation Sans">12</text><rect x="74" y="70.0" width="6" height="1.8" fill="#bdbdbd"/><text x="73" y="93.6" text-anchor="end" font-size="14.5" fill="#d0d0d0" font-family="Liberation Sans">15</text><rect x="74" y="87.5" width="6" height="1.8" fill="#bdbdbd"/><text x="73" y="111.5" text-anchor="end" font-size="14.5" fill="#d0d0d0" font-family="Liberation Sans">18</text><rect x="74" y="105.4" width="6" height="1.8" fill="#bdbdbd"/><text x="73" y="129.6" text-anchor="end" font-size="14.5" fill="#d0d0d0" font-family="Liberation Sans">21</text><rect x="74" y="123.5" width="6" height="1.8" fill="#bdbdbd"/><text x="73" y="148.3" text-anchor="end" font-size="14.5" fill="#d0d0d0" font-family="Liberation Sans">24</text><rect x="74" y="142.2" width="6" height="1.8" fill="#bdbdbd"/><text x="73" y="172.0" text-anchor="end" font-size="14.5" fill="#d0d0d0" font-family="Liberation Sans">30</text><rect x="74" y="165.9" width="6" height="1.8" fill="#bdbdbd"/><text x="73" y="192.5" text-anchor="end" font-size="14.5" fill="#d0d0d0" font-family="Liberation Sans">35</text><rect x="74" y="186.4" width="6" height="1.8" fill="#bdbdbd"/><text x="73" y="212.2" text-anchor="end" font-size="14.5" fill="#d0d0d0" font-family="Liberation Sans">40</text><rect x="74" y="206.1" width="6" height="1.8" fill="#bdbdbd"/><text x="73" y="232.2" text-anchor="end" font-size="14.5" fill="#d0d0d0" font-family="Liberation Sans">45</text><rect x="74" y="226.1" width="6" height="1.8" fill="#bdbdbd"/><text x="73" y="252.2" text-anchor="end" font-size="14.5" fill="#d0d0d0" font-family="Liberation Sans">50</text><rect x="74" y="246.1" width="6" height="1.8" fill="#bdbdbd"/><text x="73" y="271.6" text-anchor="end" font-size="14.5" fill="#d0d0d0" font-family="Liberation Sans">60</text><rect x="74" y="265.5" width="6" height="1.8" fill="#bdbdbd"/><rect x="79.4" y="-0.9" width="1.8" height="1.8" fill="#b0b0b0"/><rect x="79.4" y="4.1" width="1.8" height="1.8" fill="#b0b0b0"/><rect x="79.4" y="9.2" width="1.8" height="1.8" fill="#b0b0b0"/><rect x="79.4" y="14.2" width="1.8" height="1.8" fill="#b0b0b0"/><rect x="79.4" y="19.2" width="1.8" height="1.8" fill="#b0b0b0"/><rect x="79.4" y="24.2" width="1.8" height="1.8" fill="#b0b0b0"/><rect x="79.4" y="29.3" width="1.8" height="1.8" fill="#b0b0b0"/><rect x="79.4" y="34.3" width="1.8" height="1.8" fill="#b0b0b0"/><rect x="79.4" y="39.3" width="1.8" height="1.8" fill="#b0b0b0"/><rect x="79.4" y="44.3" width="1.8" height="1.8" fill="#b0b0b0"/><rect x="79.4" y="49.4" width="1.8" height="1.8" fill="#b0b0b0"/><rect x="79.4" y="54.4" width="1.8" height="1.8" fill="#b0b0b0"/><rect x="79.4" y="59.4" width="1.8" height="1.8" fill="#b0b0b0"/><rect x="79.4" y="64.4" width="1.8" height="1.8" fill="#b0b0b0"/><rect x="79.4" y="69.5" width="1.8" height="1.8" fill="#b0b0b0"/><rect x="79.4" y="74.5" width="1.8" height="1.8" fill="#b0b0b0"/><rect x="79.4" y="79.5" width="1.8" height="1.8" fill="#b0b0b0"/><rect x="79.4" y="84.5" width="1.8" height="1.8" fill="#b0b0b0"/><rect x="79.4" y="89.6" width="1.8" height="1.8" fill="#b0b0b0"/><rect x="79.4" y="94.6" width="1.8" height="1.8" fill="#b0b0b0"/><rect x="79.4" y="99.6" width="1.8" height="1.8" fill="#b0b0b0"/><rect x="79.4" y="104.7" width="1.8" height="1.8" fill="#b0b0b0"/><rect x="79.4" y="109.7" width="1.8" height="1.8" fill="#b0b0b0"/><rect x="79.4" y="114.7" width="1.8" height="1.8" fill="#b0b0b0"/><rect x="79.4" y="119.7" width="1.8" height="1.8" fill="#b0b0b0"/><rect x="79.4" y="124.8" width="1.8" height="1.8" fill="#b0b0b0"/><rect x="79.4" y="129.8" width="1.8" height="1.8" fill="#b0b0b0"/><rect x="79.4" y="134.8" width="1.8" height="1.8" fill="#b0b0b0"/><rect x="79.4" y="139.8" width="1.8" height="1.8" fill="#b0b0b0"/><rect x="79.4" y="144.9" width="1.8" height="1.8" fill="#b0b0b0"/><rect x="79.4" y="149.9" width="1.8" height="1.8" fill="#b0b0b0"/><rect x="79.4" y="154.9" width="1.8" height="1.8" fill="#b0b0b0"/><rect x="79.4" y="159.9" width="1.8" height="1.8" fill="#b0b0b0"/><rect x="79.4" y="165.0" width="1.8" height="1.8" fill="#b0b0b0"/><rect x="79.4" y="170.0" width="1.8" height="1.8" fill="#b0b0b0"/><rect x="79.4" y="175.0" width="1.8" height="1.8" fill="#b0b0b0"/><rect x="79.4" y="180.1" width="1.8" height="1.8" fill="#b0b0b0"/><rect x="79.4" y="185.1" width="1.8" height="1.8" fill="#b0b0b0"/><rect x="79.4" y="190.1" width="1.8" height="1.8" fill="#b0b0b0"/><rect x="79.4" y="195.1" width="1.8" height="1.8" fill="#b0b0b0"/><rect x="79.4" y="200.2" width="1.8" height="1.8" fill="#b0b0b0"/><rect x="79.4" y="205.2" width="1.8" height="1.8" fill="#b0b0b0"/><rect x="79.4" y="210.2" width="1.8" height="1.8" fill="#b0b0b0"/><rect x="79.4" y="215.2" width="1.8" height="1.8" fill="#b0b0b0"/><rect x="79.4" y="220.3" width="1.8" height="1.8" fill="#b0b0b0"/><rect x="79.4" y="225.3" width="1.8" height="1.8" fill="#b0b0b0"/><rect x="79.4" y="230.3" width="1.8" height="1.8" fill="#b0b0b0"/><rect x="79.4" y="235.3" width="1.8" height="1.8" fill="#b0b0b0"/><rect x="79.4" y="240.4" width="1.8" height="1.8" fill="#b0b0b0"/><rect x="79.4" y="245.4" width="1.8" height="1.8" fill="#b0b0b0"/><rect x="79.4" y="250.4" width="1.8" height="1.8" fill="#b0b0b0"/><rect x="79.4" y="255.4" width="1.8" height="1.8" fill="#b0b0b0"/><rect x="79.4" y="260.5" width="1.8" height="1.8" fill="#b0b0b0"/><rect x="79.4" y="265.5" width="1.8" height="1.8" fill="#b0b0b0"/></g></svg>
<div style="left:2563px;top:1136.1px;width:19px;height:272.4000000000001px;background:linear-gradient(#3b352c,#2e302d 35%,#2b312d)"></div>
<div style="left:2563.5px;top:1348.5px;width:8px;height:60.0px;background:#4cd964"></div>
<div style="left:2573.0px;top:1334.3px;width:8px;height:74.20000000000005px;background:#4cd964"></div>
<div style="left:2573.0px;top:1329.6px;width:8px;height:2.5px;background:#4cd964"></div>
<div style="left:2489px;top:1173px;width:34px;height:70px;border-radius:3px;box-shadow:1px 3px 4px rgba(0,0,0,.4);background:linear-gradient(#bdbdbd 0,#cfcfcf 13%,#ececec 13.5%,#ececec 14.5%,#8c8c8c 15%,#8c8c8c 21.5%,#9c9c9c 22%,#9c9c9c 28%,#8e8e8e 28.5%,#8e8e8e 35%,#a3a3a3 35.5%,#a3a3a3 42%,#979797 42.5%,#979797 48.5%,#2c2c2c 49%,#2c2c2c 51%,#b4b4b4 51.5%,#b4b4b4 58%,#c6c6c6 58.5%,#c6c6c6 65%,#bcbcbc 65.5%,#bcbcbc 72%,#cdcdcd 72.5%,#cdcdcd 79%,#c4c4c4 79.5%,#d6d6d6 84.5%,#f2f2f2 85%,#f2f2f2 86.5%,#9c9c9c 87%,#8a8a8a 100%)"></div>
<div style="left:2480px;top:1206.5px;width:9px;height:3px;background:#f4f4f4"></div>
<div style="left:2480px;top:1461.6px;width:55px;height:35px;background:#575757;border:1.5px solid #3a3a3a;border-radius:7px"></div>
<div style="left:2482.5px;top:1449.0px;width:50px;height:60px;line-height:60px;text-align:center;font-size:25px;color:#f0f0f0;">M</div>
<div style="left:2540px;top:1461.6px;width:55px;height:35px;background:#575757;border:1.5px solid #3a3a3a;border-radius:7px"></div>
<div style="left:2542.5px;top:1449.0px;width:50px;height:60px;line-height:60px;text-align:center;font-size:25px;color:#f0f0f0;">S</div>
<div style="left:2616px;top:836px;width:112px;height:5px;background:#555;border-radius:0 0 5px 5px;border:1px solid #444;border-top:none"></div>
<div style="left:2615px;top:851px;width:114px;height:35px;background:#565656;border:1.5px solid #3c3c3c;border-radius:7px"></div>
<div style="left:2617.0px;top:838.5px;width:110px;height:60px;line-height:60px;text-align:center;font-size:22px;color:#6ee07a;">Read</div>
<div style="left:2642px;top:907px;width:60px;height:43px;background:#45442f;border:1.5px solid #2d2d22;border-radius:3px"></div>
<svg style="position:absolute;left:2656px;top:913px;" width="32" height="32" viewBox="0 0 32 32"><circle cx="16" cy="16" r="15" fill="#f4e84a"/><path d="M16 16 V3" stroke="#222" stroke-width="2"/></svg>
<svg style="position:absolute;left:2636px;top:973.8px;" width="74" height="74" viewBox="0 0 74 74"><circle cx="37" cy="37" r="28" fill="#8a8a8a"/><path d="M20.5 63.5 A31 31 0 1 1 53.5 63.5" stroke="#2f2f2f" stroke-width="6.5" fill="none"/><path d="M37 3 V10" stroke="#5ad16a" stroke-width="2.2"/><path d="M37 9 V17" stroke="#222" stroke-width="2.2"/></svg>
<div style="left:2616px;top:1059.4px;width:54px;height:35px;background:#2c2c2c;border-radius:2px"></div>
<div style="left:2616.0px;top:1047.0px;width:54px;height:60px;line-height:60px;text-align:center;font-size:23px;color:#f0f0f0;">0.0</div>
<div style="left:2674px;top:1059.4px;width:54px;height:35px;background:#2c2c2c;border-radius:2px"></div>
<div style="left:2674.0px;top:1047.0px;width:54px;height:60px;line-height:60px;text-align:center;font-size:23px;color:#f0c43a;letter-spacing:-1px">-0.3</div>
<svg style="position:absolute;left:2614px;top:1130.1px;" width="104" height="288.4000000000001" viewBox="0 0 104 288.4000000000001"><g transform="translate(0,10)"><rect x="0" y="-1.0" width="22" height="2" fill="#9c9c9c"/><rect x="0" y="33.1" width="22" height="2" fill="#9c9c9c"/><rect x="0" y="99.2" width="22" height="2" fill="#9c9c9c"/><rect x="0" y="135.1" width="22" height="2" fill="#9c9c9c"/><rect x="0" y="165.8" width="22" height="2" fill="#9c9c9c"/><rect x="0" y="186.3" width="22" height="2" fill="#9c9c9c"/><rect x="0" y="206.0" width="22" height="2" fill="#9c9c9c"/><rect x="0" y="226.0" width="22" height="2" fill="#9c9c9c"/><rect x="0" y="242.2" width="22" height="2" fill="#9c9c9c"/><rect x="0" y="265.4" width="22" height="2" fill="#9c9c9c"/><rect x="14" y="7.0" width="8" height="2" fill="#8c8c8c"/><rect x="14" y="19.0" width="8" height="2" fill="#8c8c8c"/><rect x="14" y="110.9" width="8" height="2" fill="#8c8c8c"/><rect x="14" y="123.1" width="8" height="2" fill="#8c8c8c"/><rect x="14" y="139.4" width="8" height="2" fill="#8c8c8c"/><rect x="14" y="145.3" width="8" height="2" fill="#8c8c8c"/><rect x="14" y="151.4" width="8" height="2" fill="#8c8c8c"/><rect x="14" y="156.7" width="8" height="2" fill="#8c8c8c"/><rect x="14" y="172.2" width="8" height="2" fill="#8c8c8c"/><rect x="14" y="178.0" width="8" height="2" fill="#8c8c8c"/><rect x="14" y="192.1" width="8" height="2" fill="#8c8c8c"/><rect x="14" y="198.3" width="8" height="2" fill="#8c8c8c"/><rect x="14" y="212.1" width="8" height="2" fill="#8c8c8c"/><rect x="14" y="218.8" width="8" height="2" fill="#8c8c8c"/><rect x="14" y="232.1" width="8" height="2" fill="#8c8c8c"/><rect x="14" y="237.4" width="8" height="2" fill="#8c8c8c"/><rect x="14" y="249.4" width="8" height="2" fill="#8c8c8c"/><rect x="14" y="256.1" width="8" height="2" fill="#8c8c8c"/><rect x="24" y="-4" width="4" height="272.4000000000001" fill="#242424"/><text x="73" y="5.2" text-anchor="end" font-size="14.5" fill="#d0d0d0" font-family="Liberation Sans">0</text><rect x="74" y="-0.9" width="6" height="1.8" fill="#bdbdbd"/><text x="73" y="21.6" text-anchor="end" font-size="14.5" fill="#d0d0d0" font-family="Liberation Sans">3</text><rect x="74" y="15.5" width="6" height="1.8" fill="#bdbdbd"/><text x="73" y="39.3" text-anchor="end" font-size="14.5" fill="#d0d0d0" font-family="Liberation Sans">6</text><rect x="74" y="33.2" width="6" height="1.8" fill="#bdbdbd"/><text x="73" y="57.4" text-anchor="end" font-size="14.5" fill="#d0d0d0" font-family="Liberation Sans">9</text><rect x="74" y="51.3" width="6" height="1.8" fill="#bdbdbd"/><text x="73" y="76.1" text-anchor="end" font-size="14.5" fill="#d0d0d0" font-family="Liberation Sans">12</text><rect x="74" y="70.0" width="6" height="1.8" fill="#bdbdbd"/><text x="73" y="93.6" text-anchor="end" font-size="14.5" fill="#d0d0d0" font-family="Liberation Sans">15</text><rect x="74" y="87.5" width="6" height="1.8" fill="#bdbdbd"/><text x="73" y="111.5" text-anchor="end" font-size="14.5" fill="#d0d0d0" font-family="Liberation Sans">18</text><rect x="74" y="105.4" width="6" height="1.8" fill="#bdbdbd"/><text x="73" y="129.6" text-anchor="end" font-size="14.5" fill="#d0d0d0" font-family="Liberation Sans">21</text><rect x="74" y="123.5" width="6" height="1.8" fill="#bdbdbd"/><text x="73" y="148.3" text-anchor="end" font-size="14.5" fill="#d0d0d0" font-family="Liberation Sans">24</text><rect x="74" y="142.2" width="6" height="1.8" fill="#bdbdbd"/><text x="73" y="172.0" text-anchor="end" font-size="14.5" fill="#d0d0d0" font-family="Liberation Sans">30</text><rect x="74" y="165.9" width="6" height="1.8" fill="#bdbdbd"/><text x="73" y="192.5" text-anchor="end" font-size="14.5" fill="#d0d0d0" font-family="Liberation Sans">35</text><rect x="74" y="186.4" width="6" height="1.8" fill="#bdbdbd"/><text x="73" y="212.2" text-anchor="end" font-size="14.5" fill="#d0d0d0" font-family="Liberation Sans">40</text><rect x="74" y="206.1" width="6" height="1.8" fill="#bdbdbd"/><text x="73" y="232.2" text-anchor="end" font-size="14.5" fill="#d0d0d0" font-family="Liberation Sans">45</text><rect x="74" y="226.1" width="6" height="1.8" fill="#bdbdbd"/><text x="73" y="252.2" text-anchor="end" font-size="14.5" fill="#d0d0d0" font-family="Liberation Sans">50</text><rect x="74" y="246.1" width="6" height="1.8" fill="#bdbdbd"/><text x="73" y="271.6" text-anchor="end" font-size="14.5" fill="#d0d0d0" font-family="Liberation Sans">60</text><rect x="74" y="265.5" width="6" height="1.8" fill="#bdbdbd"/><rect x="79.4" y="-0.9" width="1.8" height="1.8" fill="#b0b0b0"/><rect x="79.4" y="4.1" width="1.8" height="1.8" fill="#b0b0b0"/><rect x="79.4" y="9.2" width="1.8" height="1.8" fill="#b0b0b0"/><rect x="79.4" y="14.2" width="1.8" height="1.8" fill="#b0b0b0"/><rect x="79.4" y="19.2" width="1.8" height="1.8" fill="#b0b0b0"/><rect x="79.4" y="24.2" width="1.8" height="1.8" fill="#b0b0b0"/><rect x="79.4" y="29.3" width="1.8" height="1.8" fill="#b0b0b0"/><rect x="79.4" y="34.3" width="1.8" height="1.8" fill="#b0b0b0"/><rect x="79.4" y="39.3" width="1.8" height="1.8" fill="#b0b0b0"/><rect x="79.4" y="44.3" width="1.8" height="1.8" fill="#b0b0b0"/><rect x="79.4" y="49.4" width="1.8" height="1.8" fill="#b0b0b0"/><rect x="79.4" y="54.4" width="1.8" height="1.8" fill="#b0b0b0"/><rect x="79.4" y="59.4" width="1.8" height="1.8" fill="#b0b0b0"/><rect x="79.4" y="64.4" width="1.8" height="1.8" fill="#b0b0b0"/><rect x="79.4" y="69.5" width="1.8" height="1.8" fill="#b0b0b0"/><rect x="79.4" y="74.5" width="1.8" height="1.8" fill="#b0b0b0"/><rect x="79.4" y="79.5" width="1.8" height="1.8" fill="#b0b0b0"/><rect x="79.4" y="84.5" width="1.8" height="1.8" fill="#b0b0b0"/><rect x="79.4" y="89.6" width="1.8" height="1.8" fill="#b0b0b0"/><rect x="79.4" y="94.6" width="1.8" height="1.8" fill="#b0b0b0"/><rect x="79.4" y="99.6" width="1.8" height="1.8" fill="#b0b0b0"/><rect x="79.4" y="104.7" width="1.8" height="1.8" fill="#b0b0b0"/><rect x="79.4" y="109.7" width="1.8" height="1.8" fill="#b0b0b0"/><rect x="79.4" y="114.7" width="1.8" height="1.8" fill="#b0b0b0"/><rect x="79.4" y="119.7" width="1.8" height="1.8" fill="#b0b0b0"/><rect x="79.4" y="124.8" width="1.8" height="1.8" fill="#b0b0b0"/><rect x="79.4" y="129.8" width="1.8" height="1.8" fill="#b0b0b0"/><rect x="79.4" y="134.8" width="1.8" height="1.8" fill="#b0b0b0"/><rect x="79.4" y="139.8" width="1.8" height="1.8" fill="#b0b0b0"/><rect x="79.4" y="144.9" width="1.8" height="1.8" fill="#b0b0b0"/><rect x="79.4" y="149.9" width="1.8" height="1.8" fill="#b0b0b0"/><rect x="79.4" y="154.9" width="1.8" height="1.8" fill="#b0b0b0"/><rect x="79.4" y="159.9" width="1.8" height="1.8" fill="#b0b0b0"/><rect x="79.4" y="165.0" width="1.8" height="1.8" fill="#b0b0b0"/><rect x="79.4" y="170.0" width="1.8" height="1.8" fill="#b0b0b0"/><rect x="79.4" y="175.0" width="1.8" height="1.8" fill="#b0b0b0"/><rect x="79.4" y="180.1" width="1.8" height="1.8" fill="#b0b0b0"/><rect x="79.4" y="185.1" width="1.8" height="1.8" fill="#b0b0b0"/><rect x="79.4" y="190.1" width="1.8" height="1.8" fill="#b0b0b0"/><rect x="79.4" y="195.1" width="1.8" height="1.8" fill="#b0b0b0"/><rect x="79.4" y="200.2" width="1.8" height="1.8" fill="#b0b0b0"/><rect x="79.4" y="205.2" width="1.8" height="1.8" fill="#b0b0b0"/><rect x="79.4" y="210.2" width="1.8" height="1.8" fill="#b0b0b0"/><rect x="79.4" y="215.2" width="1.8" height="1.8" fill="#b0b0b0"/><rect x="79.4" y="220.3" width="1.8" height="1.8" fill="#b0b0b0"/><rect x="79.4" y="225.3" width="1.8" height="1.8" fill="#b0b0b0"/><rect x="79.4" y="230.3" width="1.8" height="1.8" fill="#b0b0b0"/><rect x="79.4" y="235.3" width="1.8" height="1.8" fill="#b0b0b0"/><rect x="79.4" y="240.4" width="1.8" height="1.8" fill="#b0b0b0"/><rect x="79.4" y="245.4" width="1.8" height="1.8" fill="#b0b0b0"/><rect x="79.4" y="250.4" width="1.8" height="1.8" fill="#b0b0b0"/><rect x="79.4" y="255.4" width="1.8" height="1.8" fill="#b0b0b0"/><rect x="79.4" y="260.5" width="1.8" height="1.8" fill="#b0b0b0"/><rect x="79.4" y="265.5" width="1.8" height="1.8" fill="#b0b0b0"/></g></svg>
<div style="left:2697px;top:1136.1px;width:19px;height:272.4000000000001px;background:linear-gradient(#3b352c,#2e302d 35%,#2b312d)"></div>
<div style="left:2697.5px;top:1141px;width:8px;height:267.5px;background:linear-gradient(#e23a2a 0,#e23a2a 14.0px,#f5c400 15.0px,#f0d000 59.09999999999991px,#9ad84a 84.09999999999991px,#4cd964 109.09999999999991px,#4cd964 100%)"></div>
<div style="left:2707.0px;top:1156px;width:8px;height:252.5px;background:linear-gradient(#e23a2a 0,#e23a2a 3.0px,#f5c400 4.0px,#f0d000 44.09999999999991px,#9ad84a 69.09999999999991px,#4cd964 94.09999999999991px,#4cd964 100%)"></div>
<div style="left:2707.0px;top:1143px;width:8px;height:2.5px;background:#e23a2a"></div>
<div style="left:2623px;top:1173px;width:34px;height:70px;border-radius:3px;box-shadow:1px 3px 4px rgba(0,0,0,.4);background:linear-gradient(#bdbdbd 0,#cfcfcf 13%,#ececec 13.5%,#ececec 14.5%,#8c8c8c 15%,#8c8c8c 21.5%,#9c9c9c 22%,#9c9c9c 28%,#8e8e8e 28.5%,#8e8e8e 35%,#a3a3a3 35.5%,#a3a3a3 42%,#979797 42.5%,#979797 48.5%,#2c2c2c 49%,#2c2c2c 51%,#b4b4b4 51.5%,#b4b4b4 58%,#c6c6c6 58.5%,#c6c6c6 65%,#bcbcbc 65.5%,#bcbcbc 72%,#cdcdcd 72.5%,#cdcdcd 79%,#c4c4c4 79.5%,#d6d6d6 84.5%,#f2f2f2 85%,#f2f2f2 86.5%,#9c9c9c 87%,#8a8a8a 100%)"></div>
<div style="left:2614px;top:1206.5px;width:9px;height:3px;background:#f4f4f4"></div>
<div style="left:2674px;top:1421px;width:56px;height:35px;background:#575757;border:1.5px solid #3a3a3a;border-radius:7px"></div>
<div style="left:2674.0px;top:1408.5px;width:56px;height:60px;line-height:60px;text-align:center;font-size:24px;color:#f0f0f0;">Bnc</div>
<div style="left:2614px;top:1461.6px;width:55px;height:35px;background:#575757;border:1.5px solid #3a3a3a;border-radius:7px"></div>
<div style="left:2616.5px;top:1449.0px;width:50px;height:60px;line-height:60px;text-align:center;font-size:25px;color:#f0f0f0;">M</div>
<div style="left:2674px;top:1461.6px;width:55px;height:35px;background:#575757;border:1.5px solid #3a3a3a;border-radius:7px"></div>
<div style="left:2676.5px;top:1449.0px;width:50px;height:60px;line-height:60px;text-align:center;font-size:25px;color:#f0f0f0;">S</div>
<div style="left:2750px;top:836px;width:112px;height:5px;background:#555;border-radius:0 0 5px 5px;border:1px solid #444;border-top:none"></div>
<div style="left:2749px;top:851px;width:114px;height:35px;background:#565656;border:1.5px solid #3c3c3c;border-radius:7px"></div>
<div style="left:2751.0px;top:838.5px;width:110px;height:60px;line-height:60px;text-align:center;font-size:22px;color:#f0f0f0;">Read</div>
<div style="left:2775px;top:907px;width:60px;height:43px;background:#243f60;border:1.5px solid #1a2a3c;border-radius:3px"></div>
<svg style="position:absolute;left:2781px;top:912px;" width="50" height="34" viewBox="0 0 50 34"><rect x="2.0" y="15.0" width="1.8" height="4" fill="#4aa0f0"/><rect x="5.6" y="13.0" width="1.8" height="8" fill="#4aa0f0"/><rect x="9.2" y="11.0" width="1.8" height="12" fill="#4aa0f0"/><rect x="12.8" y="13.5" width="1.8" height="7" fill="#4aa0f0"/><rect x="16.4" y="9.0" width="1.8" height="16" fill="#4aa0f0"/><rect x="20.0" y="6.0" width="1.8" height="22" fill="#4aa0f0"/><rect x="23.6" y="2.0" width="1.8" height="30" fill="#4aa0f0"/><rect x="27.2" y="7.0" width="1.8" height="20" fill="#4aa0f0"/><rect x="30.8" y="10.0" width="1.8" height="14" fill="#4aa0f0"/><rect x="34.4" y="12.5" width="1.8" height="9" fill="#4aa0f0"/><rect x="38.0" y="11.0" width="1.8" height="12" fill="#4aa0f0"/><rect x="41.6" y="14.0" width="1.8" height="6" fill="#4aa0f0"/><rect x="45.2" y="15.0" width="1.8" height="4" fill="#4aa0f0"/></svg>
<div style="left:2750px;top:1059px;width:113px;height:35px;background:#2c2c2c;border-radius:2px"></div>
<div style="left:2756.5px;top:1047.0px;width:100px;height:60px;line-height:60px;text-align:center;font-size:23px;color:#f0f0f0;">0.0</div>
<svg style="position:absolute;left:2780px;top:1130.1px;" width="104" height="288.4000000000001" viewBox="0 0 104 288.4000000000001"><g transform="translate(0,10)"><rect x="0" y="-1.0" width="22" height="2" fill="#9c9c9c"/><rect x="0" y="33.1" width="22" height="2" fill="#9c9c9c"/><rect x="0" y="99.2" width="22" height="2" fill="#9c9c9c"/><rect x="0" y="135.1" width="22" height="2" fill="#9c9c9c"/><rect x="0" y="165.8" width="22" height="2" fill="#9c9c9c"/><rect x="0" y="186.3" width="22" height="2" fill="#9c9c9c"/><rect x="0" y="206.0" width="22" height="2" fill="#9c9c9c"/><rect x="0" y="226.0" width="22" height="2" fill="#9c9c9c"/><rect x="0" y="242.2" width="22" height="2" fill="#9c9c9c"/><rect x="0" y="265.4" width="22" height="2" fill="#9c9c9c"/><rect x="14" y="7.0" width="8" height="2" fill="#8c8c8c"/><rect x="14" y="19.0" width="8" height="2" fill="#8c8c8c"/><rect x="14" y="110.9" width="8" height="2" fill="#8c8c8c"/><rect x="14" y="123.1" width="8" height="2" fill="#8c8c8c"/><rect x="14" y="139.4" width="8" height="2" fill="#8c8c8c"/><rect x="14" y="145.3" width="8" height="2" fill="#8c8c8c"/><rect x="14" y="151.4" width="8" height="2" fill="#8c8c8c"/><rect x="14" y="156.7" width="8" height="2" fill="#8c8c8c"/><rect x="14" y="172.2" width="8" height="2" fill="#8c8c8c"/><rect x="14" y="178.0" width="8" height="2" fill="#8c8c8c"/><rect x="14" y="192.1" width="8" height="2" fill="#8c8c8c"/><rect x="14" y="198.3" width="8" height="2" fill="#8c8c8c"/><rect x="14" y="212.1" width="8" height="2" fill="#8c8c8c"/><rect x="14" y="218.8" width="8" height="2" fill="#8c8c8c"/><rect x="14" y="232.1" width="8" height="2" fill="#8c8c8c"/><rect x="14" y="237.4" width="8" height="2" fill="#8c8c8c"/><rect x="14" y="249.4" width="8" height="2" fill="#8c8c8c"/><rect x="14" y="256.1" width="8" height="2" fill="#8c8c8c"/><rect x="24" y="-4" width="4" height="272.4000000000001" fill="#242424"/></g></svg>
<div style="left:2789px;top:1173px;width:34px;height:70px;border-radius:3px;box-shadow:1px 3px 4px rgba(0,0,0,.4);background:linear-gradient(#bdbdbd 0,#cfcfcf 13%,#ececec 13.5%,#ececec 14.5%,#8c8c8c 15%,#8c8c8c 21.5%,#9c9c9c 22%,#9c9c9c 28%,#8e8e8e 28.5%,#8e8e8e 35%,#a3a3a3 35.5%,#a3a3a3 42%,#979797 42.5%,#979797 48.5%,#2c2c2c 49%,#2c2c2c 51%,#b4b4b4 51.5%,#b4b4b4 58%,#c6c6c6 58.5%,#c6c6c6 65%,#bcbcbc 65.5%,#bcbcbc 72%,#cdcdcd 72.5%,#cdcdcd 79%,#c4c4c4 79.5%,#d6d6d6 84.5%,#f2f2f2 85%,#f2f2f2 86.5%,#9c9c9c 87%,#8a8a8a 100%)"></div>
<div style="left:2780px;top:1206.5px;width:9px;height:3px;background:#f4f4f4"></div>
<div style="left:2748px;top:1461.6px;width:55px;height:35px;background:#575757;border:1.5px solid #3a3a3a;border-radius:7px"></div>
<div style="left:2750.5px;top:1449.0px;width:50px;height:60px;line-height:60px;text-align:center;font-size:25px;color:#f0f0f0;">M</div>
<div style="left:2808px;top:1461.6px;width:55px;height:35px;background:#575757;border:1.5px solid #3a3a3a;border-radius:7px"></div>
<div style="left:2810.5px;top:1449.0px;width:50px;height:60px;line-height:60px;text-align:center;font-size:25px;color:#f0f0f0;">D</div>
<div style="left:246px;top:357px;width:2056px;height:1164px;background:#fff;border-radius:15px"></div>
<div style="left:250px;top:361px;width:2048px;height:1156px;background:#0d0d0d;border-radius:11px;overflow:hidden"></div>
<div style="left:262px;top:371px;width:22px;height:22px;border-radius:50%;background:#6c6c6c"></div>
<div style="left:2250px;top:373px;width:36px;height:16px;background:#747474;border-radius:8px"></div>
<div style="left:1016.0px;top:349.0px;width:500px;height:60px;line-height:60px;text-align:center;font-size:27.9px;color:#dcdcdc;">Channel/Linear EQ</div>
<svg style="position:absolute;left:283px;top:418px;" width="76" height="84" viewBox="0 0 76 84"><path d="M11.6 20.7 A34 34 0 1 0 64.4 20.7" stroke="#5a9fe6" stroke-width="5" fill="none" stroke-linecap="round"/><path d="M38 5 V44" stroke="#5a9fe6" stroke-width="5" stroke-linecap="round"/></svg>
<div style="left:387px;top:415px;width:525px;height:46px;background:#2b2b2b;border-radius:7px"></div>
<div style="left:414.0px;top:408.0px;height:60px;line-height:60px;white-space:nowrap;font-size:34.5px;color:#a8a8a8;">Factory Default</div>
<svg style="position:absolute;left:880px;top:432px;" width="17" height="11" viewBox="0 0 17 11"><path d="M1.5 1.5 L8.5 8.5 L15.5 1.5" stroke="#a0a0a0" stroke-width="2" fill="none"/></svg>
<div style="left:387px;top:482px;width:136px;height:40px;background:#2b2b2b;border-radius:7px"></div>
<div style="left:454px;top:482px;width:2px;height:40px;background:#121212"></div>
<svg style="position:absolute;left:412px;top:490px;" width="16" height="24" viewBox="0 0 16 24"><path d="M13 2 L3 12 L13 22" stroke="#e8e8e8" stroke-width="2.4" fill="none"/></svg>
<svg style="position:absolute;left:479px;top:490px;" width="16" height="24" viewBox="0 0 16 24"><path d="M3 2 L13 12 L3 22" stroke="#e8e8e8" stroke-width="2.4" fill="none"/></svg>
<div style="left:541px;top:482px;width:138px;height:40px;background:#2f62a0;border-radius:7px"></div>
<div style="left:541.0px;top:472.0px;width:138px;height:60px;line-height:60px;text-align:center;font-size:27px;color:#e6eefa;">Compare</div>
<div style="left:697px;top:482px;width:232px;height:40px;background:#2b2b2b;border-radius:7px"></div>
<div style="left:810px;top:482px;width:2px;height:40px;background:#121212"></div>
<div style="left:698.5px;top:472.0px;width:110px;height:60px;line-height:60px;text-align:center;font-size:27px;color:#f4f4f4;">Copy</div>
<div style="left:815.0px;top:472.0px;width:110px;height:60px;line-height:60px;text-align:center;font-size:27px;color:#8e8e8e;">Paste</div>
<div style="left:947px;top:482px;width:229px;height:40px;background:#2b2b2b;border-radius:7px"></div>
<div style="left:1062px;top:482px;width:2px;height:40px;background:#121212"></div>
<div style="left:949.5px;top:472.0px;width:110px;height:60px;line-height:60px;text-align:center;font-size:27px;color:#f4f4f4;">Undo</div>
<div style="left:1064.0px;top:472.0px;width:110px;height:60px;line-height:60px;text-align:center;font-size:27px;color:#8e8e8e;">Redo</div>
<div style="left:1038.0px;top:472.0px;width:1000px;height:60px;line-height:60px;text-align:right;white-space:nowrap;font-size:28px;color:#b0b0b0;">View:</div>
<div style="left:2051px;top:482px;width:132px;height:40px;background:#2b2b2b;border-radius:7px"></div>
<div style="left:2056.0px;top:472.0px;width:100px;height:60px;line-height:60px;text-align:center;font-size:25.8px;color:#f0f0f0;">100%</div>
<svg style="position:absolute;left:2153px;top:488px;" width="14" height="28" viewBox="0 0 14 28"><path d="M2 10 L7 4 L12 10 M2 18 L7 24 L12 18" stroke="#a8a8a8" stroke-width="1.8" fill="none"/></svg>
<div style="left:2201px;top:482px;width:64px;height:40px;background:#2b2b2b;border-radius:7px"></div>
<svg style="position:absolute;left:2190px;top:470px;" width="90" height="60" viewBox="0 0 90 60"><g fill="none" stroke="#f4f4f4" stroke-width="2.3" stroke-linecap="butt"><path d="M41 33.4 A7.3 7.3 0 0 1 41.5 19.7 L53.2 19.7 A7.3 7.3 0 0 1 53.2 34.3 L49.4 34.3"/><path d="M32.5 27.6 L27.35 32.75 A7 7 0 0 0 37.25 42.65 L45.25 34.65 A7 7 0 0 0 42.6 23.6"/></g></svg>
<div style="left:250px;top:538px;width:2048px;height:816px;background:radial-gradient(ellipse 62% 75% at 45% 55%,#15253c 0%,#13223a 45%,#0f1c2e 80%,#0a1220 100%)"></div>
<div style="left:250px;top:538px;width:2048px;height:2px;background:#1c2838"></div>
<div style="left:2130px;top:538px;width:168px;height:816px;background:linear-gradient(90deg,rgba(8,14,24,0) 0%,rgba(8,14,24,.3) 50%,rgba(5,8,14,.85) 100%)"></div>
<div style="left:250px;top:538px;width:80px;height:816px;background:linear-gradient(90deg,rgba(5,8,14,.6),rgba(5,8,14,0))"></div>
<div style="left:250px;top:540px;width:2048px;height:120px;background:linear-gradient(rgba(6,10,18,.55),rgba(6,10,18,.2) 60%,rgba(6,10,18,0))"></div>
<div style="left:250px;top:1105px;width:2048px;height:249px;background:linear-gradient(rgba(8,13,22,0),rgba(8,13,22,.5) 14%,rgba(6,10,18,.78) 30%,rgba(6,10,18,.85) 70%,rgba(6,10,18,.9))"></div>
<svg style="position:absolute;left:323.8px;top:606px" width="1802.7" height="528"><defs><linearGradient id="selg" x1="0" y1="0" x2="0" y2="1"><stop offset="0" stop-color="rgb(80,140,190)" stop-opacity=".08"/><stop offset=".035" stop-color="rgb(80,140,190)" stop-opacity=".3"/><stop offset="1" stop-color="rgb(80,140,190)" stop-opacity=".3"/></linearGradient></defs><rect x="910.2" y="0" width="368" height="528" fill="url(#selg)"/><rect x="910.2" y="0" width="2" height="528" fill="rgba(90,150,200,.35)"/><rect x="1276.2" y="0" width="2" height="528" fill="rgba(90,150,200,.35)"/><rect x="-0.8" y="5" width="1.5" height="523" fill="rgba(120,150,190,.11)"/><rect x="105.1" y="5" width="1.5" height="523" fill="rgba(120,150,190,.11)"/><rect x="180.1" y="5" width="1.5" height="523" fill="rgba(120,150,190,.11)"/><rect x="238.4" y="5" width="1.5" height="523" fill="rgba(120,150,190,.11)"/><rect x="286.0" y="5" width="1.5" height="523" fill="rgba(120,150,190,.11)"/><rect x="326.2" y="5" width="1.5" height="523" fill="rgba(120,150,190,.11)"/><rect x="361.0" y="5" width="1.5" height="523" fill="rgba(120,150,190,.11)"/><rect x="391.8" y="5" width="1.5" height="523" fill="rgba(120,150,190,.11)"/><rect x="419.3" y="5" width="1.5" height="523" fill="rgba(120,150,190,.11)"/><rect x="600.2" y="5" width="1.5" height="523" fill="rgba(120,150,190,.11)"/><rect x="706.0" y="5" width="1.5" height="523" fill="rgba(120,150,190,.11)"/><rect x="781.0" y="5" width="1.5" height="523" fill="rgba(120,150,190,.11)"/><rect x="839.3" y="5" width="1.5" height="523" fill="rgba(120,150,190,.11)"/><rect x="886.9" y="5" width="1.5" height="523" fill="rgba(120,150,190,.11)"/><rect x="927.1" y="5" width="1.5" height="523" fill="rgba(120,150,190,.11)"/><rect x="961.9" y="5" width="1.5" height="523" fill="rgba(120,150,190,.11)"/><rect x="992.7" y="5" width="1.5" height="523" fill="rgba(120,150,190,.11)"/><rect x="1020.2" y="5" width="1.5" height="523" fill="rgba(120,150,190,.11)"/><rect x="1201.0" y="5" width="1.5" height="523" fill="rgba(120,150,190,.11)"/><rect x="1306.9" y="5" width="1.5" height="523" fill="rgba(120,150,190,.11)"/><rect x="1381.9" y="5" width="1.5" height="523" fill="rgba(120,150,190,.11)"/><rect x="1440.2" y="5" width="1.5" height="523" fill="rgba(120,150,190,.11)"/><rect x="1487.8" y="5" width="1.5" height="523" fill="rgba(120,150,190,.11)"/><rect x="1528.0" y="5" width="1.5" height="523" fill="rgba(120,150,190,.11)"/><rect x="1562.8" y="5" width="1.5" height="523" fill="rgba(120,150,190,.11)"/><rect x="1593.6" y="5" width="1.5" height="523" fill="rgba(120,150,190,.11)"/><rect x="1621.1" y="5" width="1.5" height="523" fill="rgba(120,150,190,.11)"/><rect x="1802.0" y="5" width="1.5" height="523" fill="rgba(120,150,190,.11)"/><rect x="0" y="20.3" width="1802.7" height="1.5" fill="rgba(120,150,190,.13)"/><rect x="0" y="102.0" width="1802.7" height="1.5" fill="rgba(120,150,190,.13)"/><rect x="0" y="183.6" width="1802.7" height="1.5" fill="rgba(120,150,190,.13)"/><rect x="0" y="265.2" width="1802.7" height="1.5" fill="rgba(120,150,190,.13)"/><rect x="0" y="346.9" width="1802.7" height="1.5" fill="rgba(120,150,190,.13)"/><rect x="0" y="428.5" width="1802.7" height="1.5" fill="rgba(120,150,190,.13)"/><rect x="0" y="510.2" width="1802.7" height="1.5" fill="rgba(120,150,190,.13)"/><rect x="910.2" y="226.1" width="368" height="1.5" fill="rgba(120,170,220,.35)"/></svg>
<svg style="position:absolute;left:323.8px;top:606px;overflow:visible" width="1802.7" height="528"><path d="M0.0 263.1 L3.0 263.1 L6.0 263.0 L9.0 262.9 L12.0 262.9 L15.0 262.8 L18.0 262.7 L21.0 262.7 L24.0 262.6 L27.0 262.5 L30.0 262.4 L33.0 262.4 L36.1 262.3 L39.1 262.2 L42.1 262.1 L45.1 262.0 L48.1 261.9 L51.1 261.8 L54.1 261.8 L57.1 261.7 L60.1 261.6 L63.1 261.5 L66.1 261.4 L69.1 261.3 L72.1 261.2 L75.1 261.1 L78.1 261.0 L81.1 260.8 L84.1 260.7 L87.1 260.6 L90.1 260.5 L93.1 260.4 L96.1 260.3 L99.1 260.1 L102.2 260.0 L105.2 259.9 L108.2 259.7 L111.2 259.6 L114.2 259.5 L117.2 259.3 L120.2 259.2 L123.2 259.1 L126.2 258.9 L129.2 258.8 L132.2 258.6 L135.2 258.4 L138.2 258.3 L141.2 258.1 L144.2 258.0 L147.2 257.8 L150.2 257.6 L153.2 257.5 L156.2 257.3 L159.2 257.1 L162.2 256.9 L165.2 256.7 L168.3 256.5 L171.3 256.3 L174.3 256.1 L177.3 255.9 L180.3 255.7 L183.3 255.5 L186.3 255.3 L189.3 255.1 L192.3 254.9 L195.3 254.7 L198.3 254.4 L201.3 254.2 L204.3 254.0 L207.3 253.8 L210.3 253.5 L213.3 253.3 L216.3 253.0 L219.3 252.8 L222.3 252.5 L225.3 252.3 L228.3 252.0 L231.3 251.7 L234.4 251.5 L237.4 251.2 L240.4 250.9 L243.4 250.6 L246.4 250.3 L249.4 250.0 L252.4 249.8 L255.4 249.5 L258.4 249.1 L261.4 248.8 L264.4 248.5 L267.4 248.2 L270.4 247.9 L273.4 247.6 L276.4 247.3 L279.4 246.9 L282.4 246.6 L285.4 246.3 L288.4 245.9 L291.4 245.6 L294.4 245.2 L297.4 244.9 L300.4 244.5 L303.5 244.1 L306.5 243.8 L309.5 243.4 L312.5 243.0 L315.5 242.7 L318.5 242.3 L321.5 241.9 L324.5 241.5 L327.5 241.1 L330.5 240.7 L333.5 240.3 L336.5 240.0 L339.5 239.6 L342.5 239.1 L345.5 238.7 L348.5 238.3 L351.5 237.9 L354.5 237.5 L357.5 237.1 L360.5 236.7 L363.5 236.3 L366.5 235.8 L369.6 235.4 L372.6 235.0 L375.6 234.6 L378.6 234.1 L381.6 233.7 L384.6 233.3 L387.6 232.8 L390.6 232.4 L393.6 232.0 L396.6 231.5 L399.6 231.1 L402.6 230.7 L405.6 230.2 L408.6 229.8 L411.6 229.3 L414.6 228.9 L417.6 228.5 L420.6 228.0 L423.6 227.6 L426.6 227.2 L429.6 226.7 L432.6 226.3 L435.7 225.9 L438.7 225.4 L441.7 225.0 L444.7 224.6 L447.7 224.2 L450.7 223.7 L453.7 223.3 L456.7 222.9 L459.7 222.5 L462.7 222.1 L465.7 221.7 L468.7 221.3 L471.7 220.9 L474.7 220.5 L477.7 220.1 L480.7 219.7 L483.7 219.3 L486.7 219.0 L489.7 218.6 L492.7 218.2 L495.7 217.9 L498.7 217.5 L501.8 217.2 L504.8 216.8 L507.8 216.5 L510.8 216.1 L513.8 215.8 L516.8 215.5 L519.8 215.2 L522.8 214.9 L525.8 214.6 L528.8 214.3 L531.8 214.0 L534.8 213.7 L537.8 213.5 L540.8 213.2 L543.8 212.9 L546.8 212.7 L549.8 212.4 L552.8 212.2 L555.8 212.0 L558.8 211.8 L561.8 211.6 L564.8 211.4 L567.9 211.2 L570.9 211.0 L573.9 210.8 L576.9 210.7 L579.9 210.5 L582.9 210.4 L585.9 210.3 L588.9 210.1 L591.9 210.0 L594.9 209.9 L597.9 209.8 L600.9 209.7 L603.9 209.7 L606.9 209.6 L609.9 209.5 L612.9 209.5 L615.9 209.5 L618.9 209.4 L621.9 209.4 L624.9 209.4 L627.9 209.4 L630.9 209.4 L633.9 209.4 L637.0 209.5 L640.0 209.5 L643.0 209.5 L646.0 209.6 L649.0 209.7 L652.0 209.7 L655.0 209.8 L658.0 209.9 L661.0 210.0 L664.0 210.1 L667.0 210.2 L670.0 210.4 L673.0 210.5 L676.0 210.6 L679.0 210.8 L682.0 211.0 L685.0 211.1 L688.0 211.3 L691.0 211.5 L694.0 211.7 L697.0 211.9 L700.0 212.1 L703.1 212.3 L706.1 212.5 L709.1 212.7 L712.1 212.9 L715.1 213.2 L718.1 213.4 L721.1 213.7 L724.1 213.9 L727.1 214.2 L730.1 214.4 L733.1 214.7 L736.1 215.0 L739.1 215.3 L742.1 215.5 L745.1 215.8 L748.1 216.1 L751.1 216.4 L754.1 216.7 L757.1 217.0 L760.1 217.3 L763.1 217.6 L766.1 217.9 L769.2 218.2 L772.2 218.5 L775.2 218.8 L778.2 219.1 L781.2 219.4 L784.2 219.8 L787.2 220.1 L790.2 220.4 L793.2 220.7 L796.2 221.0 L799.2 221.3 L802.2 221.6 L805.2 221.9 L808.2 222.2 L811.2 222.5 L814.2 222.8 L817.2 223.1 L820.2 223.4 L823.2 223.7 L826.2 224.0 L829.2 224.3 L832.2 224.6 L835.3 224.9 L838.3 225.1 L841.3 225.4 L844.3 225.7 L847.3 225.9 L850.3 226.2 L853.3 226.4 L856.3 226.7 L859.3 226.9 L862.3 227.1 L865.3 227.4 L868.3 227.6 L871.3 227.8 L874.3 228.0 L877.3 228.2 L880.3 228.4 L883.3 228.5 L886.3 228.7 L889.3 228.9 L892.3 229.0 L895.3 229.1 L898.3 229.3 L901.3 229.4 L904.4 229.5 L907.4 229.6 L910.4 229.7 L913.4 229.7 L916.4 229.8 L919.4 229.9 L922.4 229.9 L925.4 229.9 L928.4 229.9 L931.4 229.9 L934.4 229.9 L937.4 229.9 L940.4 229.8 L943.4 229.8 L946.4 229.7 L949.4 229.6 L952.4 229.5 L955.4 229.4 L958.4 229.3 L961.4 229.2 L964.4 229.0 L967.4 228.8 L970.5 228.7 L973.5 228.5 L976.5 228.2 L979.5 228.0 L982.5 227.8 L985.5 227.5 L988.5 227.3 L991.5 227.0 L994.5 226.7 L997.5 226.4 L1000.5 226.1 L1003.5 225.7 L1006.5 225.4 L1009.5 225.1 L1012.5 224.7 L1015.5 224.4 L1018.5 224.0 L1021.5 223.6 L1024.5 223.3 L1027.5 222.9 L1030.5 222.6 L1033.5 222.2 L1036.6 221.8 L1039.6 221.5 L1042.6 221.1 L1045.6 220.8 L1048.6 220.5 L1051.6 220.2 L1054.6 219.9 L1057.6 219.6 L1060.6 219.4 L1063.6 219.2 L1066.6 219.0 L1069.6 218.8 L1072.6 218.7 L1075.6 218.6 L1078.6 218.5 L1081.6 218.5 L1084.6 218.5 L1087.6 218.5 L1090.6 218.6 L1093.6 218.7 L1096.6 218.8 L1099.6 219.0 L1102.7 219.3 L1105.7 219.5 L1108.7 219.8 L1111.7 220.2 L1114.7 220.5 L1117.7 220.9 L1120.7 221.4 L1123.7 221.9 L1126.7 222.4 L1129.7 222.9 L1132.7 223.4 L1135.7 224.0 L1138.7 224.6 L1141.7 225.2 L1144.7 225.8 L1147.7 226.5 L1150.7 227.1 L1153.7 227.8 L1156.7 228.4 L1159.7 229.1 L1162.7 229.8 L1165.7 230.5 L1168.8 231.2 L1171.8 231.8 L1174.8 232.5 L1177.8 233.2 L1180.8 233.8 L1183.8 234.5 L1186.8 235.1 L1189.8 235.8 L1192.8 236.4 L1195.8 237.0 L1198.8 237.6 L1201.8 238.2 L1204.8 238.8 L1207.8 239.4 L1210.8 240.0 L1213.8 240.5 L1216.8 241.0 L1219.8 241.5 L1222.8 242.0 L1225.8 242.5 L1228.8 243.0 L1231.8 243.5 L1234.8 243.9 L1237.9 244.3 L1240.9 244.7 L1243.9 245.1 L1246.9 245.5 L1249.9 245.9 L1252.9 246.2 L1255.9 246.5 L1258.9 246.9 L1261.9 247.2 L1264.9 247.5 L1267.9 247.7 L1270.9 248.0 L1273.9 248.2 L1276.9 248.5 L1279.9 248.7 L1282.9 248.9 L1285.9 249.0 L1288.9 249.2 L1291.9 249.4 L1294.9 249.5 L1297.9 249.6 L1300.9 249.7 L1304.0 249.8 L1307.0 249.9 L1310.0 250.0 L1313.0 250.1 L1316.0 250.1 L1319.0 250.1 L1322.0 250.2 L1325.0 250.2 L1328.0 250.2 L1331.0 250.1 L1334.0 250.1 L1337.0 250.1 L1340.0 250.0 L1343.0 250.0 L1346.0 249.9 L1349.0 249.8 L1352.0 249.7 L1355.0 249.6 L1358.0 249.5 L1361.0 249.4 L1364.0 249.2 L1367.0 249.1 L1370.1 248.9 L1373.1 248.8 L1376.1 248.6 L1379.1 248.5 L1382.1 248.3 L1385.1 248.1 L1388.1 247.9 L1391.1 247.7 L1394.1 247.5 L1397.1 247.3 L1400.1 247.1 L1403.1 246.9 L1406.1 246.7 L1409.1 246.5 L1412.1 246.3 L1415.1 246.1 L1418.1 245.8 L1421.1 245.6 L1424.1 245.4 L1427.1 245.2 L1430.1 245.0 L1433.1 244.7 L1436.2 244.5 L1439.2 244.3 L1442.2 244.1 L1445.2 243.9 L1448.2 243.7 L1451.2 243.5 L1454.2 243.3 L1457.2 243.1 L1460.2 242.9 L1463.2 242.7 L1466.2 242.5 L1469.2 242.3 L1472.2 242.2 L1475.2 242.0 L1478.2 241.8 L1481.2 241.6 L1484.2 241.5 L1487.2 241.3 L1490.2 241.2 L1493.2 241.0 L1496.2 240.9 L1499.2 240.7 L1502.2 240.6 L1505.3 240.5 L1508.3 240.4 L1511.3 240.2 L1514.3 240.1 L1517.3 240.0 L1520.3 239.9 L1523.3 239.8 L1526.3 239.7 L1529.3 239.6 L1532.3 239.5 L1535.3 239.4 L1538.3 239.4 L1541.3 239.3 L1544.3 239.2 L1547.3 239.1 L1550.3 239.1 L1553.3 239.0 L1556.3 238.9 L1559.3 238.9 L1562.3 238.8 L1565.3 238.8 L1568.3 238.7 L1571.4 238.7 L1574.4 238.6 L1577.4 238.6 L1580.4 238.6 L1583.4 238.5 L1586.4 238.5 L1589.4 238.5 L1592.4 238.5 L1595.4 238.4 L1598.4 238.4 L1601.4 238.4 L1604.4 238.4 L1607.4 238.4 L1610.4 238.4 L1613.4 238.4 L1616.4 238.4 L1619.4 238.4 L1622.4 238.4 L1625.4 238.4 L1628.4 238.4 L1631.4 238.4 L1634.4 238.5 L1637.5 238.5 L1640.5 238.5 L1643.5 238.6 L1646.5 238.6 L1649.5 238.6 L1652.5 238.7 L1655.5 238.8 L1658.5 238.8 L1661.5 238.9 L1664.5 239.0 L1667.5 239.1 L1670.5 239.2 L1673.5 239.3 L1676.5 239.4 L1679.5 239.6 L1682.5 239.7 L1685.5 239.9 L1688.5 240.1 L1691.5 240.3 L1694.5 240.5 L1697.5 240.7 L1700.5 241.0 L1703.6 241.3 L1706.6 241.6 L1709.6 241.9 L1712.6 242.3 L1715.6 242.7 L1718.6 243.1 L1721.6 243.6 L1724.6 244.1 L1727.6 244.7 L1730.6 245.3 L1733.6 246.0 L1736.6 246.7 L1739.6 247.5 L1742.6 248.4 L1745.6 249.3 L1748.6 250.3 L1751.6 251.4 L1754.6 252.6 L1757.6 253.9 L1760.6 255.2 L1763.6 256.7 L1766.6 258.3 L1769.7 260.0 L1772.7 261.8 L1775.7 263.7 L1778.7 265.7 L1781.7 267.9 L1784.7 270.3 L1787.7 272.7 L1790.7 275.3 L1793.7 278.1 L1796.7 281.0 L1799.7 284.0 L1802.7 287.2 L1802.7 266.0 L0 266.0 Z" fill="rgba(120,170,210,.7)"/><path d="M0.0 266.0 L3.0 266.0 L6.0 266.0 L9.0 266.0 L12.0 266.0 L15.0 266.0 L18.0 266.0 L21.0 266.0 L24.0 266.0 L27.0 266.0 L30.0 266.0 L33.0 266.0 L36.1 266.0 L39.1 266.0 L42.1 266.0 L45.1 266.0 L48.1 266.0 L51.1 266.0 L54.1 266.0 L57.1 266.0 L60.1 266.0 L63.1 266.0 L66.1 266.0 L69.1 266.0 L72.1 266.0 L75.1 266.0 L78.1 266.0 L81.1 266.0 L84.1 266.0 L87.1 266.0 L90.1 266.0 L93.1 266.0 L96.1 266.0 L99.1 266.0 L102.2 266.0 L105.2 266.0 L108.2 266.0 L111.2 266.0 L114.2 266.0 L117.2 266.0 L120.2 266.0 L123.2 266.0 L126.2 266.0 L129.2 266.0 L132.2 266.0 L135.2 266.0 L138.2 266.0 L141.2 266.0 L144.2 266.0 L147.2 266.0 L150.2 266.0 L153.2 266.0 L156.2 266.0 L159.2 266.0 L162.2 266.0 L165.2 266.0 L168.3 266.0 L171.3 266.0 L174.3 266.0 L177.3 266.0 L180.3 266.0 L183.3 266.0 L186.3 266.0 L189.3 266.0 L192.3 266.0 L195.3 266.0 L198.3 266.0 L201.3 266.0 L204.3 266.0 L207.3 266.0 L210.3 266.0 L213.3 266.0 L216.3 266.0 L219.3 266.0 L222.3 266.0 L225.3 266.0 L228.3 266.0 L231.3 266.0 L234.4 266.0 L237.4 266.0 L240.4 266.0 L243.4 266.0 L246.4 266.0 L249.4 266.0 L252.4 266.0 L255.4 266.0 L258.4 266.0 L261.4 266.0 L264.4 266.0 L267.4 266.0 L270.4 266.0 L273.4 266.0 L276.4 266.0 L279.4 266.0 L282.4 266.0 L285.4 266.0 L288.4 266.0 L291.4 266.0 L294.4 266.0 L297.4 266.0 L300.4 266.0 L303.5 266.0 L306.5 266.0 L309.5 266.0 L312.5 266.0 L315.5 266.0 L318.5 266.0 L321.5 266.0 L324.5 266.0 L327.5 266.0 L330.5 266.0 L333.5 266.0 L336.5 266.0 L339.5 266.0 L342.5 266.0 L345.5 266.0 L348.5 266.0 L351.5 266.0 L354.5 266.0 L357.5 266.0 L360.5 266.0 L363.5 266.0 L366.5 266.0 L369.6 266.0 L372.6 266.0 L375.6 266.0 L378.6 266.0 L381.6 266.0 L384.6 266.0 L387.6 266.0 L390.6 266.0 L393.6 266.0 L396.6 266.0 L399.6 266.0 L402.6 266.0 L405.6 266.0 L408.6 266.0 L411.6 266.0 L414.6 266.0 L417.6 266.0 L420.6 266.0 L423.6 266.0 L426.6 266.0 L429.6 266.0 L432.6 266.0 L435.7 266.0 L438.7 266.0 L441.7 266.0 L444.7 266.0 L447.7 266.0 L450.7 266.0 L453.7 266.0 L456.7 266.0 L459.7 266.0 L462.7 266.0 L465.7 266.0 L468.7 266.0 L471.7 266.0 L474.7 266.0 L477.7 266.0 L480.7 266.0 L483.7 266.0 L486.7 266.0 L489.7 266.0 L492.7 266.0 L495.7 266.0 L498.7 266.0 L501.8 266.0 L504.8 266.0 L507.8 266.0 L510.8 266.0 L513.8 266.0 L516.8 266.0 L519.8 266.0 L522.8 266.0 L525.8 266.0 L528.8 266.0 L531.8 266.0 L534.8 266.0 L537.8 266.0 L540.8 266.0 L543.8 266.0 L546.8 266.0 L549.8 266.0 L552.8 266.0 L555.8 266.0 L558.8 266.0 L561.8 266.0 L564.8 266.0 L567.9 266.0 L570.9 266.0 L573.9 266.0 L576.9 266.0 L579.9 266.0 L582.9 266.0 L585.9 266.0 L588.9 266.0 L591.9 266.0 L594.9 266.0 L597.9 266.0 L600.9 266.0 L603.9 266.0 L606.9 266.0 L609.9 266.0 L612.9 266.0 L615.9 266.0 L618.9 266.0 L621.9 266.0 L624.9 266.0 L627.9 266.0 L630.9 266.0 L633.9 266.0 L637.0 266.0 L640.0 266.0 L643.0 266.0 L646.0 266.0 L649.0 266.0 L652.0 266.0 L655.0 266.0 L658.0 266.0 L661.0 266.0 L664.0 266.0 L667.0 266.0 L670.0 266.0 L673.0 266.0 L676.0 266.0 L679.0 266.0 L682.0 266.0 L685.0 266.0 L688.0 266.0 L691.0 266.0 L694.0 266.0 L697.0 266.0 L700.0 266.0 L703.1 266.0 L706.1 266.0 L709.1 266.0 L712.1 266.0 L715.1 266.0 L718.1 266.0 L721.1 266.0 L724.1 266.0 L727.1 266.0 L730.1 266.0 L733.1 266.0 L736.1 266.0 L739.1 266.0 L742.1 266.0 L745.1 266.0 L748.1 266.0 L751.1 266.0 L754.1 266.0 L757.1 266.0 L760.1 266.0 L763.1 266.0 L766.1 266.0 L769.2 266.0 L772.2 266.0 L775.2 266.0 L778.2 266.0 L781.2 266.0 L784.2 266.0 L787.2 266.0 L790.2 266.0 L793.2 266.0 L796.2 266.0 L799.2 266.0 L802.2 266.0 L805.2 266.0 L808.2 266.0 L811.2 266.0 L814.2 266.0 L817.2 266.0 L820.2 266.0 L823.2 266.0 L826.2 266.0 L829.2 266.0 L832.2 266.0 L835.3 266.0 L838.3 266.0 L841.3 266.0 L844.3 266.0 L847.3 266.0 L850.3 266.0 L853.3 266.0 L856.3 266.0 L859.3 266.0 L862.3 266.0 L865.3 266.0 L868.3 266.0 L871.3 266.0 L874.3 266.0 L877.3 266.0 L880.3 266.0 L883.3 266.0 L886.3 266.0 L889.3 266.0 L892.3 266.0 L895.3 266.0 L898.3 266.0 L901.3 266.0 L904.4 266.0 L907.4 266.0 L910.4 266.0 L913.4 266.0 L916.4 266.0 L919.4 266.0 L922.4 266.0 L925.4 266.0 L928.4 266.0 L931.4 266.0 L934.4 266.0 L937.4 266.0 L940.4 266.0 L943.4 266.0 L946.4 266.0 L949.4 266.0 L952.4 266.0 L955.4 266.0 L958.4 266.0 L961.4 266.0 L964.4 266.0 L967.4 266.0 L970.5 266.0 L973.5 266.0 L976.5 266.0 L979.5 266.0 L982.5 266.0 L985.5 266.0 L988.5 266.0 L991.5 266.0 L994.5 266.0 L997.5 266.0 L1000.5 266.0 L1003.5 266.0 L1006.5 266.0 L1009.5 266.0 L1012.5 266.0 L1015.5 266.0 L1018.5 266.0 L1021.5 266.0 L1024.5 266.0 L1027.5 266.0 L1030.5 266.0 L1033.5 266.0 L1036.6 266.0 L1039.6 266.0 L1042.6 265.9 L1045.6 265.9 L1048.6 265.9 L1051.6 265.9 L1054.6 265.9 L1057.6 265.9 L1060.6 265.9 L1063.6 265.9 L1066.6 265.9 L1069.6 265.9 L1072.6 265.9 L1075.6 265.9 L1078.6 265.9 L1081.6 265.9 L1084.6 265.9 L1087.6 265.9 L1090.6 265.8 L1093.6 265.8 L1096.6 265.8 L1099.6 265.8 L1102.7 265.8 L1105.7 265.8 L1108.7 265.8 L1111.7 265.8 L1114.7 265.8 L1117.7 265.7 L1120.7 265.7 L1123.7 265.7 L1126.7 265.7 L1129.7 265.7 L1132.7 265.7 L1135.7 265.6 L1138.7 265.6 L1141.7 265.6 L1144.7 265.6 L1147.7 265.6 L1150.7 265.5 L1153.7 265.5 L1156.7 265.5 L1159.7 265.5 L1162.7 265.4 L1165.7 265.4 L1168.8 265.4 L1171.8 265.3 L1174.8 265.3 L1177.8 265.3 L1180.8 265.2 L1183.8 265.2 L1186.8 265.2 L1189.8 265.1 L1192.8 265.1 L1195.8 265.0 L1198.8 265.0 L1201.8 264.9 L1204.8 264.9 L1207.8 264.8 L1210.8 264.8 L1213.8 264.7 L1216.8 264.6 L1219.8 264.6 L1222.8 264.5 L1225.8 264.4 L1228.8 264.3 L1231.8 264.3 L1234.8 264.2 L1237.9 264.1 L1240.9 264.0 L1243.9 263.9 L1246.9 263.8 L1249.9 263.7 L1252.9 263.6 L1255.9 263.5 L1258.9 263.4 L1261.9 263.3 L1264.9 263.1 L1267.9 263.0 L1270.9 262.9 L1273.9 262.7 L1276.9 262.6 L1279.9 262.5 L1282.9 262.3 L1285.9 262.1 L1288.9 262.0 L1291.9 261.8 L1294.9 261.6 L1297.9 261.5 L1300.9 261.3 L1304.0 261.1 L1307.0 260.9 L1310.0 260.7 L1313.0 260.5 L1316.0 260.2 L1319.0 260.0 L1322.0 259.8 L1325.0 259.6 L1328.0 259.3 L1331.0 259.1 L1334.0 258.8 L1337.0 258.6 L1340.0 258.3 L1343.0 258.0 L1346.0 257.8 L1349.0 257.5 L1352.0 257.2 L1355.0 256.9 L1358.0 256.6 L1361.0 256.3 L1364.0 256.0 L1367.0 255.7 L1370.1 255.4 L1373.1 255.1 L1376.1 254.8 L1379.1 254.4 L1382.1 254.1 L1385.1 253.8 L1388.1 253.5 L1391.1 253.1 L1394.1 252.8 L1397.1 252.5 L1400.1 252.1 L1403.1 251.8 L1406.1 251.5 L1409.1 251.2 L1412.1 250.8 L1415.1 250.5 L1418.1 250.2 L1421.1 249.9 L1424.1 249.5 L1427.1 249.2 L1430.1 248.9 L1433.1 248.6 L1436.2 248.3 L1439.2 248.0 L1442.2 247.7 L1445.2 247.4 L1448.2 247.1 L1451.2 246.8 L1454.2 246.5 L1457.2 246.3 L1460.2 246.0 L1463.2 245.7 L1466.2 245.5 L1469.2 245.2 L1472.2 245.0 L1475.2 244.7 L1478.2 244.5 L1481.2 244.3 L1484.2 244.0 L1487.2 243.8 L1490.2 243.6 L1493.2 243.4 L1496.2 243.2 L1499.2 243.0 L1502.2 242.8 L1505.3 242.6 L1508.3 242.5 L1511.3 242.3 L1514.3 242.1 L1517.3 242.0 L1520.3 241.8 L1523.3 241.7 L1526.3 241.5 L1529.3 241.4 L1532.3 241.3 L1535.3 241.1 L1538.3 241.0 L1541.3 240.9 L1544.3 240.8 L1547.3 240.7 L1550.3 240.6 L1553.3 240.5 L1556.3 240.4 L1559.3 240.3 L1562.3 240.2 L1565.3 240.1 L1568.3 240.0 L1571.4 240.0 L1574.4 239.9 L1577.4 239.8 L1580.4 239.8 L1583.4 239.7 L1586.4 239.7 L1589.4 239.6 L1592.4 239.6 L1595.4 239.5 L1598.4 239.5 L1601.4 239.4 L1604.4 239.4 L1607.4 239.4 L1610.4 239.3 L1613.4 239.3 L1616.4 239.3 L1619.4 239.3 L1622.4 239.3 L1625.4 239.2 L1628.4 239.2 L1631.4 239.2 L1634.4 239.2 L1637.5 239.3 L1640.5 239.3 L1643.5 239.3 L1646.5 239.3 L1649.5 239.3 L1652.5 239.4 L1655.5 239.4 L1658.5 239.5 L1661.5 239.5 L1664.5 239.6 L1667.5 239.7 L1670.5 239.8 L1673.5 239.9 L1676.5 240.0 L1679.5 240.1 L1682.5 240.3 L1685.5 240.4 L1688.5 240.6 L1691.5 240.8 L1694.5 241.0 L1697.5 241.2 L1700.5 241.5 L1703.6 241.7 L1706.6 242.0 L1709.6 242.4 L1712.6 242.7 L1715.6 243.1 L1718.6 243.6 L1721.6 244.0 L1724.6 244.5 L1727.6 245.1 L1730.6 245.7 L1733.6 246.4 L1736.6 247.1 L1739.6 247.9 L1742.6 248.7 L1745.6 249.7 L1748.6 250.7 L1751.6 251.8 L1754.6 252.9 L1757.6 254.2 L1760.6 255.5 L1763.6 257.0 L1766.6 258.6 L1769.7 260.2 L1772.7 262.0 L1775.7 264.0 L1778.7 266.0 L1781.7 268.2 L1784.7 270.5 L1787.7 273.0 L1790.7 275.6 L1793.7 278.3 L1796.7 281.2 L1799.7 284.2 L1802.7 287.4 L1802.7 266.0 L0 266.0 Z" fill="rgba(150,120,220,.28)"/><path d="M0.0 266.0 L3.0 266.0 L6.0 266.0 L9.0 266.0 L12.0 266.0 L15.0 266.0 L18.0 266.0 L21.0 266.0 L24.0 266.0 L27.0 266.0 L30.0 266.0 L33.0 266.0 L36.1 266.0 L39.1 266.0 L42.1 266.0 L45.1 266.0 L48.1 266.0 L51.1 266.0 L54.1 266.0 L57.1 266.0 L60.1 266.0 L63.1 266.0 L66.1 266.0 L69.1 266.0 L72.1 266.0 L75.1 266.0 L78.1 266.0 L81.1 266.0 L84.1 266.0 L87.1 266.0 L90.1 266.0 L93.1 266.0 L96.1 266.0 L99.1 266.0 L102.2 266.0 L105.2 266.0 L108.2 266.0 L111.2 266.0 L114.2 266.0 L117.2 266.0 L120.2 266.0 L123.2 266.0 L126.2 266.0 L129.2 266.0 L132.2 266.0 L135.2 266.0 L138.2 266.0 L141.2 266.0 L144.2 266.0 L147.2 266.0 L150.2 266.0 L153.2 266.0 L156.2 266.0 L159.2 266.0 L162.2 266.0 L165.2 266.0 L168.3 266.0 L171.3 266.0 L174.3 266.0 L177.3 266.0 L180.3 266.0 L183.3 266.0 L186.3 266.0 L189.3 266.0 L192.3 266.0 L195.3 266.0 L198.3 266.0 L201.3 266.0 L204.3 266.0 L207.3 266.0 L210.3 266.0 L213.3 266.0 L216.3 266.0 L219.3 266.0 L222.3 266.0 L225.3 265.9 L228.3 265.9 L231.3 265.9 L234.4 265.9 L237.4 265.9 L240.4 265.9 L243.4 265.9 L246.4 265.9 L249.4 265.9 L252.4 265.9 L255.4 265.9 L258.4 265.9 L261.4 265.9 L264.4 265.9 L267.4 265.9 L270.4 265.9 L273.4 265.9 L276.4 265.9 L279.4 265.9 L282.4 265.9 L285.4 265.9 L288.4 265.9 L291.4 265.9 L294.4 265.9 L297.4 265.9 L300.4 265.9 L303.5 265.9 L306.5 265.9 L309.5 265.9 L312.5 265.9 L315.5 265.9 L318.5 265.9 L321.5 265.9 L324.5 265.9 L327.5 265.9 L330.5 265.9 L333.5 265.9 L336.5 265.9 L339.5 265.9 L342.5 265.9 L345.5 265.9 L348.5 265.9 L351.5 265.9 L354.5 265.9 L357.5 265.9 L360.5 265.9 L363.5 265.9 L366.5 265.9 L369.6 265.8 L372.6 265.8 L375.6 265.8 L378.6 265.8 L381.6 265.8 L384.6 265.8 L387.6 265.8 L390.6 265.8 L393.6 265.8 L396.6 265.8 L399.6 265.8 L402.6 265.8 L405.6 265.8 L408.6 265.8 L411.6 265.8 L414.6 265.8 L417.6 265.8 L420.6 265.8 L423.6 265.8 L426.6 265.8 L429.6 265.8 L432.6 265.8 L435.7 265.7 L438.7 265.7 L441.7 265.7 L444.7 265.7 L447.7 265.7 L450.7 265.7 L453.7 265.7 L456.7 265.7 L459.7 265.7 L462.7 265.7 L465.7 265.7 L468.7 265.7 L471.7 265.7 L474.7 265.7 L477.7 265.6 L480.7 265.6 L483.7 265.6 L486.7 265.6 L489.7 265.6 L492.7 265.6 L495.7 265.6 L498.7 265.6 L501.8 265.6 L504.8 265.6 L507.8 265.6 L510.8 265.5 L513.8 265.5 L516.8 265.5 L519.8 265.5 L522.8 265.5 L525.8 265.5 L528.8 265.5 L531.8 265.5 L534.8 265.5 L537.8 265.4 L540.8 265.4 L543.8 265.4 L546.8 265.4 L549.8 265.4 L552.8 265.4 L555.8 265.4 L558.8 265.3 L561.8 265.3 L564.8 265.3 L567.9 265.3 L570.9 265.3 L573.9 265.3 L576.9 265.2 L579.9 265.2 L582.9 265.2 L585.9 265.2 L588.9 265.2 L591.9 265.1 L594.9 265.1 L597.9 265.1 L600.9 265.1 L603.9 265.1 L606.9 265.0 L609.9 265.0 L612.9 265.0 L615.9 265.0 L618.9 264.9 L621.9 264.9 L624.9 264.9 L627.9 264.9 L630.9 264.8 L633.9 264.8 L637.0 264.8 L640.0 264.8 L643.0 264.7 L646.0 264.7 L649.0 264.7 L652.0 264.6 L655.0 264.6 L658.0 264.6 L661.0 264.5 L664.0 264.5 L667.0 264.5 L670.0 264.4 L673.0 264.4 L676.0 264.3 L679.0 264.3 L682.0 264.3 L685.0 264.2 L688.0 264.2 L691.0 264.1 L694.0 264.1 L697.0 264.0 L700.0 264.0 L703.1 263.9 L706.1 263.9 L709.1 263.8 L712.1 263.8 L715.1 263.7 L718.1 263.7 L721.1 263.6 L724.1 263.6 L727.1 263.5 L730.1 263.4 L733.1 263.4 L736.1 263.3 L739.1 263.3 L742.1 263.2 L745.1 263.1 L748.1 263.0 L751.1 263.0 L754.1 262.9 L757.1 262.8 L760.1 262.7 L763.1 262.7 L766.1 262.6 L769.2 262.5 L772.2 262.4 L775.2 262.3 L778.2 262.2 L781.2 262.1 L784.2 262.0 L787.2 261.9 L790.2 261.8 L793.2 261.7 L796.2 261.6 L799.2 261.5 L802.2 261.4 L805.2 261.3 L808.2 261.1 L811.2 261.0 L814.2 260.9 L817.2 260.8 L820.2 260.6 L823.2 260.5 L826.2 260.4 L829.2 260.2 L832.2 260.1 L835.3 259.9 L838.3 259.7 L841.3 259.6 L844.3 259.4 L847.3 259.2 L850.3 259.1 L853.3 258.9 L856.3 258.7 L859.3 258.5 L862.3 258.3 L865.3 258.1 L868.3 257.9 L871.3 257.7 L874.3 257.5 L877.3 257.3 L880.3 257.0 L883.3 256.8 L886.3 256.5 L889.3 256.3 L892.3 256.0 L895.3 255.8 L898.3 255.5 L901.3 255.2 L904.4 254.9 L907.4 254.6 L910.4 254.3 L913.4 254.0 L916.4 253.7 L919.4 253.4 L922.4 253.0 L925.4 252.7 L928.4 252.3 L931.4 252.0 L934.4 251.6 L937.4 251.2 L940.4 250.8 L943.4 250.4 L946.4 250.0 L949.4 249.6 L952.4 249.1 L955.4 248.7 L958.4 248.2 L961.4 247.8 L964.4 247.3 L967.4 246.8 L970.5 246.3 L973.5 245.8 L976.5 245.3 L979.5 244.7 L982.5 244.2 L985.5 243.6 L988.5 243.1 L991.5 242.5 L994.5 241.9 L997.5 241.4 L1000.5 240.8 L1003.5 240.2 L1006.5 239.6 L1009.5 239.0 L1012.5 238.4 L1015.5 237.8 L1018.5 237.2 L1021.5 236.5 L1024.5 235.9 L1027.5 235.3 L1030.5 234.7 L1033.5 234.1 L1036.6 233.6 L1039.6 233.0 L1042.6 232.4 L1045.6 231.9 L1048.6 231.4 L1051.6 230.8 L1054.6 230.4 L1057.6 229.9 L1060.6 229.4 L1063.6 229.0 L1066.6 228.6 L1069.6 228.3 L1072.6 228.0 L1075.6 227.7 L1078.6 227.4 L1081.6 227.2 L1084.6 227.1 L1087.6 226.9 L1090.6 226.9 L1093.6 226.8 L1096.6 226.8 L1099.6 226.9 L1102.7 226.9 L1105.7 227.1 L1108.7 227.2 L1111.7 227.4 L1114.7 227.7 L1117.7 227.9 L1120.7 228.3 L1123.7 228.6 L1126.7 229.0 L1129.7 229.4 L1132.7 229.8 L1135.7 230.3 L1138.7 230.8 L1141.7 231.3 L1144.7 231.8 L1147.7 232.4 L1150.7 232.9 L1153.7 233.5 L1156.7 234.1 L1159.7 234.7 L1162.7 235.3 L1165.7 235.9 L1168.8 236.5 L1171.8 237.1 L1174.8 237.7 L1177.8 238.3 L1180.8 238.9 L1183.8 239.5 L1186.8 240.1 L1189.8 240.7 L1192.8 241.3 L1195.8 241.9 L1198.8 242.4 L1201.8 243.0 L1204.8 243.6 L1207.8 244.1 L1210.8 244.7 L1213.8 245.2 L1216.8 245.7 L1219.8 246.2 L1222.8 246.7 L1225.8 247.2 L1228.8 247.7 L1231.8 248.2 L1234.8 248.6 L1237.9 249.1 L1240.9 249.5 L1243.9 249.9 L1246.9 250.3 L1249.9 250.8 L1252.9 251.1 L1255.9 251.5 L1258.9 251.9 L1261.9 252.3 L1264.9 252.6 L1267.9 253.0 L1270.9 253.3 L1273.9 253.7 L1276.9 254.0 L1279.9 254.3 L1282.9 254.6 L1285.9 254.9 L1288.9 255.2 L1291.9 255.5 L1294.9 255.7 L1297.9 256.0 L1300.9 256.3 L1304.0 256.5 L1307.0 256.8 L1310.0 257.0 L1313.0 257.2 L1316.0 257.4 L1319.0 257.7 L1322.0 257.9 L1325.0 258.1 L1328.0 258.3 L1331.0 258.5 L1334.0 258.7 L1337.0 258.9 L1340.0 259.0 L1343.0 259.2 L1346.0 259.4 L1349.0 259.6 L1352.0 259.7 L1355.0 259.9 L1358.0 260.0 L1361.0 260.2 L1364.0 260.3 L1367.0 260.5 L1370.1 260.6 L1373.1 260.7 L1376.1 260.9 L1379.1 261.0 L1382.1 261.1 L1385.1 261.2 L1388.1 261.4 L1391.1 261.5 L1394.1 261.6 L1397.1 261.7 L1400.1 261.8 L1403.1 261.9 L1406.1 262.0 L1409.1 262.1 L1412.1 262.2 L1415.1 262.3 L1418.1 262.4 L1421.1 262.5 L1424.1 262.6 L1427.1 262.6 L1430.1 262.7 L1433.1 262.8 L1436.2 262.9 L1439.2 263.0 L1442.2 263.0 L1445.2 263.1 L1448.2 263.2 L1451.2 263.2 L1454.2 263.3 L1457.2 263.4 L1460.2 263.4 L1463.2 263.5 L1466.2 263.6 L1469.2 263.6 L1472.2 263.7 L1475.2 263.7 L1478.2 263.8 L1481.2 263.8 L1484.2 263.9 L1487.2 263.9 L1490.2 264.0 L1493.2 264.0 L1496.2 264.1 L1499.2 264.1 L1502.2 264.2 L1505.3 264.2 L1508.3 264.3 L1511.3 264.3 L1514.3 264.3 L1517.3 264.4 L1520.3 264.4 L1523.3 264.5 L1526.3 264.5 L1529.3 264.5 L1532.3 264.6 L1535.3 264.6 L1538.3 264.6 L1541.3 264.7 L1544.3 264.7 L1547.3 264.7 L1550.3 264.7 L1553.3 264.8 L1556.3 264.8 L1559.3 264.8 L1562.3 264.9 L1565.3 264.9 L1568.3 264.9 L1571.4 264.9 L1574.4 265.0 L1577.4 265.0 L1580.4 265.0 L1583.4 265.0 L1586.4 265.1 L1589.4 265.1 L1592.4 265.1 L1595.4 265.1 L1598.4 265.1 L1601.4 265.2 L1604.4 265.2 L1607.4 265.2 L1610.4 265.2 L1613.4 265.2 L1616.4 265.3 L1619.4 265.3 L1622.4 265.3 L1625.4 265.3 L1628.4 265.3 L1631.4 265.3 L1634.4 265.4 L1637.5 265.4 L1640.5 265.4 L1643.5 265.4 L1646.5 265.4 L1649.5 265.4 L1652.5 265.4 L1655.5 265.5 L1658.5 265.5 L1661.5 265.5 L1664.5 265.5 L1667.5 265.5 L1670.5 265.5 L1673.5 265.5 L1676.5 265.5 L1679.5 265.5 L1682.5 265.6 L1685.5 265.6 L1688.5 265.6 L1691.5 265.6 L1694.5 265.6 L1697.5 265.6 L1700.5 265.6 L1703.6 265.6 L1706.6 265.6 L1709.6 265.6 L1712.6 265.6 L1715.6 265.7 L1718.6 265.7 L1721.6 265.7 L1724.6 265.7 L1727.6 265.7 L1730.6 265.7 L1733.6 265.7 L1736.6 265.7 L1739.6 265.7 L1742.6 265.7 L1745.6 265.7 L1748.6 265.7 L1751.6 265.7 L1754.6 265.7 L1757.6 265.8 L1760.6 265.8 L1763.6 265.8 L1766.6 265.8 L1769.7 265.8 L1772.7 265.8 L1775.7 265.8 L1778.7 265.8 L1781.7 265.8 L1784.7 265.8 L1787.7 265.8 L1790.7 265.8 L1793.7 265.8 L1796.7 265.8 L1799.7 265.8 L1802.7 265.8 L1802.7 266.0 L0 266.0 Z" fill="rgba(100,190,245,.35)"/><path d="M0.0 263.1 L3.0 263.1 L6.0 263.0 L9.0 262.9 L12.0 262.9 L15.0 262.8 L18.0 262.7 L21.0 262.7 L24.0 262.6 L27.0 262.5 L30.0 262.4 L33.0 262.4 L36.1 262.3 L39.1 262.2 L42.1 262.1 L45.1 262.0 L48.1 261.9 L51.1 261.8 L54.1 261.8 L57.1 261.7 L60.1 261.6 L63.1 261.5 L66.1 261.4 L69.1 261.3 L72.1 261.2 L75.1 261.1 L78.1 261.0 L81.1 260.8 L84.1 260.7 L87.1 260.6 L90.1 260.5 L93.1 260.4 L96.1 260.3 L99.1 260.1 L102.2 260.0 L105.2 259.9 L108.2 259.7 L111.2 259.6 L114.2 259.5 L117.2 259.3 L120.2 259.2 L123.2 259.1 L126.2 258.9 L129.2 258.8 L132.2 258.6 L135.2 258.4 L138.2 258.3 L141.2 258.1 L144.2 258.0 L147.2 257.8 L150.2 257.6 L153.2 257.5 L156.2 257.3 L159.2 257.1 L162.2 256.9 L165.2 256.7 L168.3 256.5 L171.3 256.3 L174.3 256.1 L177.3 255.9 L180.3 255.7 L183.3 255.5 L186.3 255.3 L189.3 255.1 L192.3 254.9 L195.3 254.7 L198.3 254.4 L201.3 254.2 L204.3 254.0 L207.3 253.8 L210.3 253.5 L213.3 253.3 L216.3 253.0 L219.3 252.8 L222.3 252.5 L225.3 252.3 L228.3 252.0 L231.3 251.7 L234.4 251.5 L237.4 251.2 L240.4 250.9 L243.4 250.6 L246.4 250.3 L249.4 250.0 L252.4 249.8 L255.4 249.5 L258.4 249.1 L261.4 248.8 L264.4 248.5 L267.4 248.2 L270.4 247.9 L273.4 247.6 L276.4 247.3 L279.4 246.9 L282.4 246.6 L285.4 246.3 L288.4 245.9 L291.4 245.6 L294.4 245.2 L297.4 244.9 L300.4 244.5 L303.5 244.1 L306.5 243.8 L309.5 243.4 L312.5 243.0 L315.5 242.7 L318.5 242.3 L321.5 241.9 L324.5 241.5 L327.5 241.1 L330.5 240.7 L333.5 240.3 L336.5 240.0 L339.5 239.6 L342.5 239.1 L345.5 238.7 L348.5 238.3 L351.5 237.9 L354.5 237.5 L357.5 237.1 L360.5 236.7 L363.5 236.3 L366.5 235.8 L369.6 235.4 L372.6 235.0 L375.6 234.6 L378.6 234.1 L381.6 233.7 L384.6 233.3 L387.6 232.8 L390.6 232.4 L393.6 232.0 L396.6 231.5 L399.6 231.1 L402.6 230.7 L405.6 230.2 L408.6 229.8 L411.6 229.3 L414.6 228.9 L417.6 228.5 L420.6 228.0 L423.6 227.6 L426.6 227.2 L429.6 226.7 L432.6 226.3 L435.7 225.9 L438.7 225.4 L441.7 225.0 L444.7 224.6 L447.7 224.2 L450.7 223.7 L453.7 223.3 L456.7 222.9 L459.7 222.5 L462.7 222.1 L465.7 221.7 L468.7 221.3 L471.7 220.9 L474.7 220.5 L477.7 220.1 L480.7 219.7 L483.7 219.3 L486.7 219.0 L489.7 218.6 L492.7 218.2 L495.7 217.9 L498.7 217.5 L501.8 217.2 L504.8 216.8 L507.8 216.5 L510.8 216.1 L513.8 215.8 L516.8 215.5 L519.8 215.2 L522.8 214.9 L525.8 214.6 L528.8 214.3 L531.8 214.0 L534.8 213.7 L537.8 213.5 L540.8 213.2 L543.8 212.9 L546.8 212.7 L549.8 212.4 L552.8 212.2 L555.8 212.0 L558.8 211.8 L561.8 211.6 L564.8 211.4 L567.9 211.2 L570.9 211.0 L573.9 210.8 L576.9 210.7 L579.9 210.5 L582.9 210.4 L585.9 210.3 L588.9 210.1 L591.9 210.0 L594.9 209.9 L597.9 209.8 L600.9 209.7 L603.9 209.7 L606.9 209.6 L609.9 209.5 L612.9 209.5 L615.9 209.5 L618.9 209.4 L621.9 209.4 L624.9 209.4 L627.9 209.4 L630.9 209.4 L633.9 209.4 L637.0 209.5 L640.0 209.5 L643.0 209.5 L646.0 209.6 L649.0 209.7 L652.0 209.7 L655.0 209.8 L658.0 209.9 L661.0 210.0 L664.0 210.1 L667.0 210.2 L670.0 210.4 L673.0 210.5 L676.0 210.6 L679.0 210.8 L682.0 211.0 L685.0 211.1 L688.0 211.3 L691.0 211.5 L694.0 211.7 L697.0 211.9 L700.0 212.1 L703.1 212.3 L706.1 212.5 L709.1 212.7 L712.1 212.9 L715.1 213.2 L718.1 213.4 L721.1 213.7 L724.1 213.9 L727.1 214.2 L730.1 214.4 L733.1 214.7 L736.1 215.0 L739.1 215.3 L742.1 215.5 L745.1 215.8 L748.1 216.1 L751.1 216.4 L754.1 216.7 L757.1 217.0 L760.1 217.3 L763.1 217.6 L766.1 217.9 L769.2 218.2 L772.2 218.5 L775.2 218.8 L778.2 219.1 L781.2 219.4 L784.2 219.8 L787.2 220.1 L790.2 220.4 L793.2 220.7 L796.2 221.0 L799.2 221.3 L802.2 221.6 L805.2 221.9 L808.2 222.2 L811.2 222.5 L814.2 222.8 L817.2 223.1 L820.2 223.4 L823.2 223.7 L826.2 224.0 L829.2 224.3 L832.2 224.6 L835.3 224.9 L838.3 225.1 L841.3 225.4 L844.3 225.7 L847.3 225.9 L850.3 226.2 L853.3 226.4 L856.3 226.7 L859.3 226.9 L862.3 227.1 L865.3 227.4 L868.3 227.6 L871.3 227.8 L874.3 228.0 L877.3 228.2 L880.3 228.4 L883.3 228.5 L886.3 228.7 L889.3 228.9 L892.3 229.0 L895.3 229.1 L898.3 229.3 L901.3 229.4 L904.4 229.5 L907.4 229.6 L910.4 229.7 L913.4 229.7 L916.4 229.8 L919.4 229.9 L922.4 229.9 L925.4 229.9 L928.4 229.9 L931.4 229.9 L934.4 229.9 L937.4 229.9 L940.4 229.8 L943.4 229.8 L946.4 229.7 L949.4 229.6 L952.4 229.5 L955.4 229.4 L958.4 229.3 L961.4 229.2 L964.4 229.0 L967.4 228.8 L970.5 228.7 L973.5 228.5 L976.5 228.2 L979.5 228.0 L982.5 227.8 L985.5 227.5 L988.5 227.3 L991.5 227.0 L994.5 226.7 L997.5 226.4 L1000.5 226.1 L1003.5 225.7 L1006.5 225.4 L1009.5 225.1 L1012.5 224.7 L1015.5 224.4 L1018.5 224.0 L1021.5 223.6 L1024.5 223.3 L1027.5 222.9 L1030.5 222.6 L1033.5 222.2 L1036.6 221.8 L1039.6 221.5 L1042.6 221.1 L1045.6 220.8 L1048.6 220.5 L1051.6 220.2 L1054.6 219.9 L1057.6 219.6 L1060.6 219.4 L1063.6 219.2 L1066.6 219.0 L1069.6 218.8 L1072.6 218.7 L1075.6 218.6 L1078.6 218.5 L1081.6 218.5 L1084.6 218.5 L1087.6 218.5 L1090.6 218.6 L1093.6 218.7 L1096.6 218.8 L1099.6 219.0 L1102.7 219.3 L1105.7 219.5 L1108.7 219.8 L1111.7 220.2 L1114.7 220.5 L1117.7 220.9 L1120.7 221.4 L1123.7 221.9 L1126.7 222.4 L1129.7 222.9 L1132.7 223.4 L1135.7 224.0 L1138.7 224.6 L1141.7 225.2 L1144.7 225.8 L1147.7 226.5 L1150.7 227.1 L1153.7 227.8 L1156.7 228.4 L1159.7 229.1 L1162.7 229.8 L1165.7 230.5 L1168.8 231.2 L1171.8 231.8 L1174.8 232.5 L1177.8 233.2 L1180.8 233.8 L1183.8 234.5 L1186.8 235.1 L1189.8 235.8 L1192.8 236.4 L1195.8 237.0 L1198.8 237.6 L1201.8 238.2 L1204.8 238.8 L1207.8 239.4 L1210.8 240.0 L1213.8 240.5 L1216.8 241.0 L1219.8 241.5 L1222.8 242.0 L1225.8 242.5 L1228.8 243.0 L1231.8 243.5 L1234.8 243.9 L1237.9 244.3 L1240.9 244.7 L1243.9 245.1 L1246.9 245.5 L1249.9 245.9 L1252.9 246.2 L1255.9 246.5 L1258.9 246.9 L1261.9 247.2 L1264.9 247.5 L1267.9 247.7 L1270.9 248.0 L1273.9 248.2 L1276.9 248.5 L1279.9 248.7 L1282.9 248.9 L1285.9 249.0 L1288.9 249.2 L1291.9 249.4 L1294.9 249.5 L1297.9 249.6 L1300.9 249.7 L1304.0 249.8 L1307.0 249.9 L1310.0 250.0 L1313.0 250.1 L1316.0 250.1 L1319.0 250.1 L1322.0 250.2 L1325.0 250.2 L1328.0 250.2 L1331.0 250.1 L1334.0 250.1 L1337.0 250.1 L1340.0 250.0 L1343.0 250.0 L1346.0 249.9 L1349.0 249.8 L1352.0 249.7 L1355.0 249.6 L1358.0 249.5 L1361.0 249.4 L1364.0 249.2 L1367.0 249.1 L1370.1 248.9 L1373.1 248.8 L1376.1 248.6 L1379.1 248.5 L1382.1 248.3 L1385.1 248.1 L1388.1 247.9 L1391.1 247.7 L1394.1 247.5 L1397.1 247.3 L1400.1 247.1 L1403.1 246.9 L1406.1 246.7 L1409.1 246.5 L1412.1 246.3 L1415.1 246.1 L1418.1 245.8 L1421.1 245.6 L1424.1 245.4 L1427.1 245.2 L1430.1 245.0 L1433.1 244.7 L1436.2 244.5 L1439.2 244.3 L1442.2 244.1 L1445.2 243.9 L1448.2 243.7 L1451.2 243.5 L1454.2 243.3 L1457.2 243.1 L1460.2 242.9 L1463.2 242.7 L1466.2 242.5 L1469.2 242.3 L1472.2 242.2 L1475.2 242.0 L1478.2 241.8 L1481.2 241.6 L1484.2 241.5 L1487.2 241.3 L1490.2 241.2 L1493.2 241.0 L1496.2 240.9 L1499.2 240.7 L1502.2 240.6 L1505.3 240.5 L1508.3 240.4 L1511.3 240.2 L1514.3 240.1 L1517.3 240.0 L1520.3 239.9 L1523.3 239.8 L1526.3 239.7 L1529.3 239.6 L1532.3 239.5 L1535.3 239.4 L1538.3 239.4 L1541.3 239.3 L1544.3 239.2 L1547.3 239.1 L1550.3 239.1 L1553.3 239.0 L1556.3 238.9 L1559.3 238.9 L1562.3 238.8 L1565.3 238.8 L1568.3 238.7 L1571.4 238.7 L1574.4 238.6 L1577.4 238.6 L1580.4 238.6 L1583.4 238.5 L1586.4 238.5 L1589.4 238.5 L1592.4 238.5 L1595.4 238.4 L1598.4 238.4 L1601.4 238.4 L1604.4 238.4 L1607.4 238.4 L1610.4 238.4 L1613.4 238.4 L1616.4 238.4 L1619.4 238.4 L1622.4 238.4 L1625.4 238.4 L1628.4 238.4 L1631.4 238.4 L1634.4 238.5 L1637.5 238.5 L1640.5 238.5 L1643.5 238.6 L1646.5 238.6 L1649.5 238.6 L1652.5 238.7 L1655.5 238.8 L1658.5 238.8 L1661.5 238.9 L1664.5 239.0 L1667.5 239.1 L1670.5 239.2 L1673.5 239.3 L1676.5 239.4 L1679.5 239.6 L1682.5 239.7 L1685.5 239.9 L1688.5 240.1 L1691.5 240.3 L1694.5 240.5 L1697.5 240.7 L1700.5 241.0 L1703.6 241.3 L1706.6 241.6 L1709.6 241.9 L1712.6 242.3 L1715.6 242.7 L1718.6 243.1 L1721.6 243.6 L1724.6 244.1 L1727.6 244.7 L1730.6 245.3 L1733.6 246.0 L1736.6 246.7 L1739.6 247.5 L1742.6 248.4 L1745.6 249.3 L1748.6 250.3 L1751.6 251.4 L1754.6 252.6 L1757.6 253.9 L1760.6 255.2 L1763.6 256.7 L1766.6 258.3 L1769.7 260.0 L1772.7 261.8 L1775.7 263.7 L1778.7 265.7 L1781.7 267.9 L1784.7 270.3 L1787.7 272.7 L1790.7 275.3 L1793.7 278.1 L1796.7 281.0 L1799.7 284.0 L1802.7 287.2" stroke="#b4c0cc" stroke-width="2" fill="none" opacity=".85"/><rect x="0" y="263.5" width="1802.7" height="5" fill="#a8b8c8" opacity=".7"/><path d="M0.0 266.0 L3.0 266.0 L6.0 266.0 L9.0 266.0 L12.0 266.0 L15.0 266.0 L18.0 266.0 L21.0 266.0 L24.0 266.0 L27.0 266.0 L30.0 266.0 L33.0 266.0 L36.1 266.0 L39.1 266.0 L42.1 266.0 L45.1 266.0 L48.1 266.0 L51.1 266.0 L54.1 266.0 L57.1 266.0 L60.1 266.0 L63.1 266.0 L66.1 266.0 L69.1 266.0 L72.1 266.0 L75.1 266.0 L78.1 266.0 L81.1 266.0 L84.1 266.0 L87.1 266.0 L90.1 266.0 L93.1 266.0 L96.1 266.0 L99.1 266.0 L102.2 266.0 L105.2 266.0 L108.2 266.0 L111.2 266.0 L114.2 266.0 L117.2 266.0 L120.2 266.0 L123.2 266.0 L126.2 266.0 L129.2 266.0 L132.2 266.0 L135.2 266.0 L138.2 266.0 L141.2 266.0 L144.2 266.0 L147.2 266.0 L150.2 266.0 L153.2 266.0 L156.2 266.0 L159.2 266.0 L162.2 266.0 L165.2 266.0 L168.3 266.0 L171.3 266.0 L174.3 266.0 L177.3 266.0 L180.3 266.0 L183.3 266.0 L186.3 266.0 L189.3 266.0 L192.3 266.0 L195.3 266.0 L198.3 266.0 L201.3 266.0 L204.3 266.0 L207.3 266.0 L210.3 266.0 L213.3 266.0 L216.3 266.0 L219.3 266.0 L222.3 266.0 L225.3 265.9 L228.3 265.9 L231.3 265.9 L234.4 265.9 L237.4 265.9 L240.4 265.9 L243.4 265.9 L246.4 265.9 L249.4 265.9 L252.4 265.9 L255.4 265.9 L258.4 265.9 L261.4 265.9 L264.4 265.9 L267.4 265.9 L270.4 265.9 L273.4 265.9 L276.4 265.9 L279.4 265.9 L282.4 265.9 L285.4 265.9 L288.4 265.9 L291.4 265.9 L294.4 265.9 L297.4 265.9 L300.4 265.9 L303.5 265.9 L306.5 265.9 L309.5 265.9 L312.5 265.9 L315.5 265.9 L318.5 265.9 L321.5 265.9 L324.5 265.9 L327.5 265.9 L330.5 265.9 L333.5 265.9 L336.5 265.9 L339.5 265.9 L342.5 265.9 L345.5 265.9 L348.5 265.9 L351.5 265.9 L354.5 265.9 L357.5 265.9 L360.5 265.9 L363.5 265.9 L366.5 265.9 L369.6 265.8 L372.6 265.8 L375.6 265.8 L378.6 265.8 L381.6 265.8 L384.6 265.8 L387.6 265.8 L390.6 265.8 L393.6 265.8 L396.6 265.8 L399.6 265.8 L402.6 265.8 L405.6 265.8 L408.6 265.8 L411.6 265.8 L414.6 265.8 L417.6 265.8 L420.6 265.8 L423.6 265.8 L426.6 265.8 L429.6 265.8 L432.6 265.8 L435.7 265.7 L438.7 265.7 L441.7 265.7 L444.7 265.7 L447.7 265.7 L450.7 265.7 L453.7 265.7 L456.7 265.7 L459.7 265.7 L462.7 265.7 L465.7 265.7 L468.7 265.7 L471.7 265.7 L474.7 265.7 L477.7 265.6 L480.7 265.6 L483.7 265.6 L486.7 265.6 L489.7 265.6 L492.7 265.6 L495.7 265.6 L498.7 265.6 L501.8 265.6 L504.8 265.6 L507.8 265.6 L510.8 265.5 L513.8 265.5 L516.8 265.5 L519.8 265.5 L522.8 265.5 L525.8 265.5 L528.8 265.5 L531.8 265.5 L534.8 265.5 L537.8 265.4 L540.8 265.4 L543.8 265.4 L546.8 265.4 L549.8 265.4 L552.8 265.4 L555.8 265.4 L558.8 265.3 L561.8 265.3 L564.8 265.3 L567.9 265.3 L570.9 265.3 L573.9 265.3 L576.9 265.2 L579.9 265.2 L582.9 265.2 L585.9 265.2 L588.9 265.2 L591.9 265.1 L594.9 265.1 L597.9 265.1 L600.9 265.1 L603.9 265.1 L606.9 265.0 L609.9 265.0 L612.9 265.0 L615.9 265.0 L618.9 264.9 L621.9 264.9 L624.9 264.9 L627.9 264.9 L630.9 264.8 L633.9 264.8 L637.0 264.8 L640.0 264.8 L643.0 264.7 L646.0 264.7 L649.0 264.7 L652.0 264.6 L655.0 264.6 L658.0 264.6 L661.0 264.5 L664.0 264.5 L667.0 264.5 L670.0 264.4 L673.0 264.4 L676.0 264.3 L679.0 264.3 L682.0 264.3 L685.0 264.2 L688.0 264.2 L691.0 264.1 L694.0 264.1 L697.0 264.0 L700.0 264.0 L703.1 263.9 L706.1 263.9 L709.1 263.8 L712.1 263.8 L715.1 263.7 L718.1 263.7 L721.1 263.6 L724.1 263.6 L727.1 263.5 L730.1 263.4 L733.1 263.4 L736.1 263.3 L739.1 263.3 L742.1 263.2 L745.1 263.1 L748.1 263.0 L751.1 263.0 L754.1 262.9 L757.1 262.8 L760.1 262.7 L763.1 262.7 L766.1 262.6 L769.2 262.5 L772.2 262.4 L775.2 262.3 L778.2 262.2 L781.2 262.1 L784.2 262.0 L787.2 261.9 L790.2 261.8 L793.2 261.7 L796.2 261.6 L799.2 261.5 L802.2 261.4 L805.2 261.3 L808.2 261.1 L811.2 261.0 L814.2 260.9 L817.2 260.8 L820.2 260.6 L823.2 260.5 L826.2 260.4 L829.2 260.2 L832.2 260.1 L835.3 259.9 L838.3 259.7 L841.3 259.6 L844.3 259.4 L847.3 259.2 L850.3 259.1 L853.3 258.9 L856.3 258.7 L859.3 258.5 L862.3 258.3 L865.3 258.1 L868.3 257.9 L871.3 257.7 L874.3 257.5 L877.3 257.3 L880.3 257.0 L883.3 256.8 L886.3 256.5 L889.3 256.3 L892.3 256.0 L895.3 255.8 L898.3 255.5 L901.3 255.2 L904.4 254.9 L907.4 254.6 L910.4 254.3 L913.4 254.0 L916.4 253.7 L919.4 253.4 L922.4 253.0 L925.4 252.7 L928.4 252.3 L931.4 252.0 L934.4 251.6 L937.4 251.2 L940.4 250.8 L943.4 250.4 L946.4 250.0 L949.4 249.6 L952.4 249.1 L955.4 248.7 L958.4 248.2 L961.4 247.8 L964.4 247.3 L967.4 246.8 L970.5 246.3 L973.5 245.8 L976.5 245.3 L979.5 244.7 L982.5 244.2 L985.5 243.6 L988.5 243.1 L991.5 242.5 L994.5 241.9 L997.5 241.4 L1000.5 240.8 L1003.5 240.2 L1006.5 239.6 L1009.5 239.0 L1012.5 238.4 L1015.5 237.8 L1018.5 237.2 L1021.5 236.5 L1024.5 235.9 L1027.5 235.3 L1030.5 234.7 L1033.5 234.1 L1036.6 233.6 L1039.6 233.0 L1042.6 232.4 L1045.6 231.9 L1048.6 231.4 L1051.6 230.8 L1054.6 230.4 L1057.6 229.9 L1060.6 229.4 L1063.6 229.0 L1066.6 228.6 L1069.6 228.3 L1072.6 228.0 L1075.6 227.7 L1078.6 227.4 L1081.6 227.2 L1084.6 227.1 L1087.6 226.9 L1090.6 226.9 L1093.6 226.8 L1096.6 226.8 L1099.6 226.9 L1102.7 226.9 L1105.7 227.1 L1108.7 227.2 L1111.7 227.4 L1114.7 227.7 L1117.7 227.9 L1120.7 228.3 L1123.7 228.6 L1126.7 229.0 L1129.7 229.4 L1132.7 229.8 L1135.7 230.3 L1138.7 230.8 L1141.7 231.3 L1144.7 231.8 L1147.7 232.4 L1150.7 232.9 L1153.7 233.5 L1156.7 234.1 L1159.7 234.7 L1162.7 235.3 L1165.7 235.9 L1168.8 236.5 L1171.8 237.1 L1174.8 237.7 L1177.8 238.3 L1180.8 238.9 L1183.8 239.5 L1186.8 240.1 L1189.8 240.7 L1192.8 241.3 L1195.8 241.9 L1198.8 242.4 L1201.8 243.0 L1204.8 243.6 L1207.8 244.1 L1210.8 244.7 L1213.8 245.2 L1216.8 245.7 L1219.8 246.2 L1222.8 246.7 L1225.8 247.2 L1228.8 247.7 L1231.8 248.2 L1234.8 248.6 L1237.9 249.1 L1240.9 249.5 L1243.9 249.9 L1246.9 250.3 L1249.9 250.8 L1252.9 251.1 L1255.9 251.5 L1258.9 251.9 L1261.9 252.3 L1264.9 252.6 L1267.9 253.0 L1270.9 253.3 L1273.9 253.7 L1276.9 254.0 L1279.9 254.3 L1282.9 254.6 L1285.9 254.9 L1288.9 255.2 L1291.9 255.5 L1294.9 255.7 L1297.9 256.0 L1300.9 256.3 L1304.0 256.5 L1307.0 256.8 L1310.0 257.0 L1313.0 257.2 L1316.0 257.4 L1319.0 257.7 L1322.0 257.9 L1325.0 258.1 L1328.0 258.3 L1331.0 258.5 L1334.0 258.7 L1337.0 258.9 L1340.0 259.0 L1343.0 259.2 L1346.0 259.4 L1349.0 259.6 L1352.0 259.7 L1355.0 259.9 L1358.0 260.0 L1361.0 260.2 L1364.0 260.3 L1367.0 260.5 L1370.1 260.6 L1373.1 260.7 L1376.1 260.9 L1379.1 261.0 L1382.1 261.1 L1385.1 261.2 L1388.1 261.4 L1391.1 261.5 L1394.1 261.6 L1397.1 261.7 L1400.1 261.8 L1403.1 261.9 L1406.1 262.0 L1409.1 262.1 L1412.1 262.2 L1415.1 262.3 L1418.1 262.4 L1421.1 262.5 L1424.1 262.6 L1427.1 262.6 L1430.1 262.7 L1433.1 262.8 L1436.2 262.9 L1439.2 263.0 L1442.2 263.0 L1445.2 263.1 L1448.2 263.2 L1451.2 263.2 L1454.2 263.3 L1457.2 263.4 L1460.2 263.4 L1463.2 263.5 L1466.2 263.6 L1469.2 263.6 L1472.2 263.7 L1475.2 263.7 L1478.2 263.8 L1481.2 263.8 L1484.2 263.9 L1487.2 263.9 L1490.2 264.0 L1493.2 264.0 L1496.2 264.1 L1499.2 264.1 L1502.2 264.2 L1505.3 264.2 L1508.3 264.3 L1511.3 264.3 L1514.3 264.3 L1517.3 264.4 L1520.3 264.4 L1523.3 264.5 L1526.3 264.5 L1529.3 264.5 L1532.3 264.6 L1535.3 264.6 L1538.3 264.6 L1541.3 264.7 L1544.3 264.7 L1547.3 264.7 L1550.3 264.7 L1553.3 264.8 L1556.3 264.8 L1559.3 264.8 L1562.3 264.9 L1565.3 264.9 L1568.3 264.9 L1571.4 264.9 L1574.4 265.0 L1577.4 265.0 L1580.4 265.0 L1583.4 265.0 L1586.4 265.1 L1589.4 265.1 L1592.4 265.1 L1595.4 265.1 L1598.4 265.1 L1601.4 265.2 L1604.4 265.2 L1607.4 265.2 L1610.4 265.2 L1613.4 265.2 L1616.4 265.3 L1619.4 265.3 L1622.4 265.3 L1625.4 265.3 L1628.4 265.3 L1631.4 265.3 L1634.4 265.4 L1637.5 265.4 L1640.5 265.4 L1643.5 265.4 L1646.5 265.4 L1649.5 265.4 L1652.5 265.4 L1655.5 265.5 L1658.5 265.5 L1661.5 265.5 L1664.5 265.5 L1667.5 265.5 L1670.5 265.5 L1673.5 265.5 L1676.5 265.5 L1679.5 265.5 L1682.5 265.6 L1685.5 265.6 L1688.5 265.6 L1691.5 265.6 L1694.5 265.6 L1697.5 265.6 L1700.5 265.6 L1703.6 265.6 L1706.6 265.6 L1709.6 265.6 L1712.6 265.6 L1715.6 265.7 L1718.6 265.7 L1721.6 265.7 L1724.6 265.7 L1727.6 265.7 L1730.6 265.7 L1733.6 265.7 L1736.6 265.7 L1739.6 265.7 L1742.6 265.7 L1745.6 265.7 L1748.6 265.7 L1751.6 265.7 L1754.6 265.7 L1757.6 265.8 L1760.6 265.8 L1763.6 265.8 L1766.6 265.8 L1769.7 265.8 L1772.7 265.8 L1775.7 265.8 L1778.7 265.8 L1781.7 265.8 L1784.7 265.8 L1787.7 265.8 L1790.7 265.8 L1793.7 265.8 L1796.7 265.8 L1799.7 265.8 L1802.7 265.8" stroke="#5cc4fa" stroke-width="2.8" fill="none"/><circle cx="344.9" cy="266.0" r="14" fill="#e8923a" opacity="0.35"/><circle cx="420.0" cy="266.0" r="14" fill="#d8d840" opacity="0.35"/><circle cx="659.1" cy="266.0" r="14" fill="#5ad85a" opacity="0.35"/><circle cx="618.6" cy="210.5" r="14" fill="#45d490" opacity="0.35"/><circle cx="1400.3" cy="251.3" r="14" fill="#b486ea" opacity="0.35"/><circle cx="1802.7" cy="313.4" r="14" fill="#e03ca6" opacity="0.33"/><circle cx="1095.3" cy="226.8" r="22" fill="rgba(90,170,230,.18)"/><circle cx="1095.3" cy="226.8" r="13.5" fill="#5cc8fa"/></svg>
<div style="left:1534px;top:551.5px;width:88px;height:54px;background:rgba(40,80,115,.55);border-radius:3px"></div>
<svg style="position:absolute;left:369.0px;top:560px;" width="48" height="35" viewBox="0 0 48 35"><path d="M2 31 L26 4 Q29 1 34 1 L45 1" stroke="#8090a8" stroke-width="2.2" fill="none"/></svg>
<svg style="position:absolute;left:606.0px;top:560px;" width="54" height="35" viewBox="0 0 54 35"><path d="M2 2 H22 Q26 2 29 7 L33 14.5 Q34 16 36 16 H52 M36 16 Q34 16 33 17.5 L29 25 Q26 30 22 30 H2" stroke="#e8923a" stroke-width="2.2" fill="none"/></svg>
<svg style="position:absolute;left:838.0px;top:559px;" width="60" height="35" viewBox="0 0 60 35"><path d="M1 17 H13 C17 17 19 13.5 22 9 C25 4 27 1.5 30 1.5 C33 1.5 35 4 38 9 C41 13.5 43 17 47 17 H59 M13 17 C17 17 19 20.5 22 25 C25 30 27 32.5 30 32.5 C33 32.5 35 30 38 25 C41 20.5 43 17 47 17" stroke="#d8d840" stroke-width="2.5" fill="none"/></svg>
<svg style="position:absolute;left:1075.0px;top:559px;" width="60" height="35" viewBox="0 0 60 35"><path d="M1 17 H13 C17 17 19 13.5 22 9 C25 4 27 1.5 30 1.5 C33 1.5 35 4 38 9 C41 13.5 43 17 47 17 H59 M13 17 C17 17 19 20.5 22 25 C25 30 27 32.5 30 32.5 C33 32.5 35 30 38 25 C41 20.5 43 17 47 17" stroke="#5ad85a" stroke-width="2.5" fill="none"/></svg>
<svg style="position:absolute;left:1311.0px;top:559px;" width="60" height="35" viewBox="0 0 60 35"><path d="M1 17 H13 C17 17 19 13.5 22 9 C25 4 27 1.5 30 1.5 C33 1.5 35 4 38 9 C41 13.5 43 17 47 17 H59 M13 17 C17 17 19 20.5 22 25 C25 30 27 32.5 30 32.5 C33 32.5 35 30 38 25 C41 20.5 43 17 47 17" stroke="#45d490" stroke-width="2.5" fill="none"/></svg>
<svg style="position:absolute;left:1547.0px;top:559px;" width="60" height="35" viewBox="0 0 60 35"><path d="M1 17 H13 C17 17 19 13.5 22 9 C25 4 27 1.5 30 1.5 C33 1.5 35 4 38 9 C41 13.5 43 17 47 17 H59 M13 17 C17 17 19 20.5 22 25 C25 30 27 32.5 30 32.5 C33 32.5 35 30 38 25 C41 20.5 43 17 47 17" stroke="#6ab8ec" stroke-width="2.5" fill="none"/></svg>
<svg style="position:absolute;left:1786.0px;top:560px;" width="54" height="35" viewBox="0 0 54 35"><path d="M52 2 H32 Q28 2 25 7 L21 14.5 Q20 16 18 16 H2 M18 16 Q20 16 21 17.5 L25 25 Q28 30 32 30 H52" stroke="#b486ea" stroke-width="2.2" fill="none"/></svg>
<svg style="position:absolute;left:2024.0px;top:560px;" width="48" height="35" viewBox="0 0 48 35"><path d="M2 2 H13 Q17 2 20 5 L45 31" stroke="#e03ca6" stroke-width="2.2" fill="none"/></svg>
<svg style="position:absolute;left:280px;top:580px;" width="18" height="18" viewBox="0 0 18 18"><path d="M9 1 V17 M1 9 H17" stroke="#b8c8e0" stroke-width="2.6"/></svg>
<svg style="position:absolute;left:2160px;top:577px;" width="18" height="18" viewBox="0 0 18 18"><path d="M9 1 V17 M1 9 H17" stroke="#b8c8e0" stroke-width="2.6"/></svg>
<div style="left:281px;top:1134px;width:16px;height:3px;background:#b8c8e0"></div>
<div style="left:2162px;top:1134px;width:16px;height:3px;background:#b8c8e0"></div>
<div style="left:257.0px;top:597.3px;width:60px;height:60px;line-height:60px;text-align:center;font-size:22px;color:#9aabc2;">0</div>
<div style="left:257.0px;top:638.3px;width:60px;height:60px;line-height:60px;text-align:center;font-size:22px;color:#9aabc2;">5</div>
<div style="left:257.0px;top:679.3px;width:60px;height:60px;line-height:60px;text-align:center;font-size:22px;color:#9aabc2;">10</div>
<div style="left:257.0px;top:720.3px;width:60px;height:60px;line-height:60px;text-align:center;font-size:22px;color:#9aabc2;">15</div>
<div style="left:257.0px;top:761.3px;width:60px;height:60px;line-height:60px;text-align:center;font-size:22px;color:#9aabc2;">20</div>
<div style="left:257.0px;top:802.3px;width:60px;height:60px;line-height:60px;text-align:center;font-size:22px;color:#9aabc2;">25</div>
<div style="left:257.0px;top:843.3px;width:60px;height:60px;line-height:60px;text-align:center;font-size:22px;color:#9aabc2;">30</div>
<div style="left:257.0px;top:884.3px;width:60px;height:60px;line-height:60px;text-align:center;font-size:22px;color:#9aabc2;">35</div>
<div style="left:257.0px;top:925.3px;width:60px;height:60px;line-height:60px;text-align:center;font-size:22px;color:#9aabc2;">40</div>
<div style="left:257.0px;top:966.3px;width:60px;height:60px;line-height:60px;text-align:center;font-size:22px;color:#9aabc2;">45</div>
<div style="left:257.0px;top:1007.3px;width:60px;height:60px;line-height:60px;text-align:center;font-size:22px;color:#9aabc2;">50</div>
<div style="left:257.0px;top:1048.3px;width:60px;height:60px;line-height:60px;text-align:center;font-size:22px;color:#9aabc2;">55</div>
<div style="left:257.0px;top:1089.3px;width:60px;height:60px;line-height:60px;text-align:center;font-size:22px;color:#9aabc2;">60</div>
<div style="left:2140.0px;top:597.0px;width:60px;height:60px;line-height:60px;text-align:center;font-size:22px;color:#8e9cb0;">15</div>
<div style="left:2140.0px;top:678.7px;width:60px;height:60px;line-height:60px;text-align:center;font-size:22px;color:#8e9cb0;">10</div>
<div style="left:2140.0px;top:760.4px;width:60px;height:60px;line-height:60px;text-align:center;font-size:22px;color:#8e9cb0;">5</div>
<div style="left:2140.0px;top:842.0px;width:60px;height:60px;line-height:60px;text-align:center;font-size:22px;color:#8e9cb0;">0</div>
<div style="left:2140.0px;top:923.6px;width:60px;height:60px;line-height:60px;text-align:center;font-size:22px;color:#8e9cb0;">5</div>
<div style="left:2140.0px;top:1005.3px;width:60px;height:60px;line-height:60px;text-align:center;font-size:22px;color:#8e9cb0;">10</div>
<div style="left:2140.0px;top:1087.0px;width:60px;height:60px;line-height:60px;text-align:center;font-size:22px;color:#8e9cb0;">15</div>
<div style="left:323.8px;top:865.0px;height:60px;line-height:60px;white-space:nowrap;font-size:22px;color:#d8e0ea;">20</div>
<div style="left:389.6px;top:865.0px;width:80px;height:60px;line-height:60px;text-align:center;font-size:22px;color:#d8e0ea;">30</div>
<div style="left:464.7px;top:865.0px;width:80px;height:60px;line-height:60px;text-align:center;font-size:22px;color:#d8e0ea;">40</div>
<div style="left:522.9px;top:865.0px;width:80px;height:60px;line-height:60px;text-align:center;font-size:22px;color:#d8e0ea;">50</div>
<div style="left:570.5px;top:865.0px;width:80px;height:60px;line-height:60px;text-align:center;font-size:22px;color:#d8e0ea;">60</div>
<div style="left:645.6px;top:865.0px;width:80px;height:60px;line-height:60px;text-align:center;font-size:22px;color:#d8e0ea;">80</div>
<div style="left:703.8px;top:865.0px;width:80px;height:60px;line-height:60px;text-align:center;font-size:22px;color:#d8e0ea;">100</div>
<div style="left:884.7px;top:865.0px;width:80px;height:60px;line-height:60px;text-align:center;font-size:22px;color:#d8e0ea;">200</div>
<div style="left:990.5px;top:865.0px;width:80px;height:60px;line-height:60px;text-align:center;font-size:22px;color:#d8e0ea;">300</div>
<div style="left:1065.6px;top:865.0px;width:80px;height:60px;line-height:60px;text-align:center;font-size:22px;color:#d8e0ea;">400</div>
<div style="left:1123.8px;top:865.0px;width:80px;height:60px;line-height:60px;text-align:center;font-size:22px;color:#d8e0ea;">500</div>
<div style="left:1246.5px;top:865.0px;width:80px;height:60px;line-height:60px;text-align:center;font-size:22px;color:#d8e0ea;">800</div>
<div style="left:1304.7px;top:865.0px;width:80px;height:60px;line-height:60px;text-align:center;font-size:22px;color:#d8e0ea;">1k</div>
<div style="left:1485.6px;top:865.0px;width:80px;height:60px;line-height:60px;text-align:center;font-size:22px;color:#d8e0ea;">2k</div>
<div style="left:1591.4px;top:865.0px;width:80px;height:60px;line-height:60px;text-align:center;font-size:22px;color:#d8e0ea;">3k</div>
<div style="left:1666.5px;top:865.0px;width:80px;height:60px;line-height:60px;text-align:center;font-size:22px;color:#d8e0ea;">4k</div>
<div style="left:1772.3px;top:865.0px;width:80px;height:60px;line-height:60px;text-align:center;font-size:22px;color:#d8e0ea;">6k</div>
<div style="left:1847.4px;top:865.0px;width:80px;height:60px;line-height:60px;text-align:center;font-size:22px;color:#d8e0ea;">8k</div>
<div style="left:1905.6px;top:865.0px;width:80px;height:60px;line-height:60px;text-align:center;font-size:22px;color:#d8e0ea;">10k</div>
<div style="left:1128.5px;top:865.0px;width:1000px;height:60px;line-height:60px;text-align:right;white-space:nowrap;font-size:22px;color:#d8e0ea;">20k</div>
<div style="left:2233px;top:625px;width:2px;height:493px;background:rgba(140,160,190,.35)"></div>
<div style="left:2203px;top:627px;width:12px;height:2px;background:#6a7a90"></div>
<div style="left:2255px;top:627px;width:12px;height:2px;background:#6a7a90"></div>
<div style="left:2203px;top:1117px;width:12px;height:2px;background:#6a7a90"></div>
<div style="left:2255px;top:1117px;width:12px;height:2px;background:#6a7a90"></div>
<div style="left:2203px;top:871px;width:14px;height:2px;background:#6a7a90"></div>
<div style="left:2253px;top:871px;width:14px;height:2px;background:#6a7a90"></div>
<svg style="position:absolute;left:2216px;top:853px;" width="38" height="38" viewBox="0 0 38 38"><circle cx="19" cy="19" r="17.5" fill="#0a0f18"/><circle cx="19" cy="19" r="13" stroke="#7ea4dc" stroke-width="4.5" fill="#1d2c44"/><path d="M4 19 H11 M27 19 H34" stroke="#0a0f18" stroke-width="2.5"/><circle cx="19" cy="19" r="1.2" fill="#cfe0f5"/></svg>
<div style="left:1500px;top:1145px;width:156px;height:127px;background:#124168;border-radius:3px"></div>
<div style="left:282.5px;top:1136.5px;width:230px;height:60px;line-height:60px;text-align:center;font-size:29px;color:#5a6a80;">20.0<span style="font-size:20px"> Hz</span></div>
<div style="left:517.4px;top:1136.5px;width:230px;height:60px;line-height:60px;text-align:center;font-size:29px;color:#e0903c;">75.0<span style="font-size:20px"> Hz</span></div>
<div style="left:755.0px;top:1136.5px;width:230px;height:60px;line-height:60px;text-align:center;font-size:29px;color:#cfcf42;">100<span style="font-size:20px"> Hz</span></div>
<div style="left:991.0px;top:1136.5px;width:230px;height:60px;line-height:60px;text-align:center;font-size:29px;color:#5ad05a;">250<span style="font-size:20px"> Hz</span></div>
<div style="left:1227.0px;top:1136.5px;width:230px;height:60px;line-height:60px;text-align:center;font-size:29px;color:#4cc98a;">214<span style="font-size:20px"> Hz</span></div>
<div style="left:1462.0px;top:1136.5px;width:230px;height:60px;line-height:60px;text-align:center;font-size:29px;color:#7cbcea;">1330<span style="font-size:20px"> Hz</span></div>
<div style="left:1698.0px;top:1136.5px;width:230px;height:60px;line-height:60px;text-align:center;font-size:29px;color:#b28ae2;">4280<span style="font-size:20px"> Hz</span></div>
<div style="left:1935.0px;top:1136.5px;width:230px;height:60px;line-height:60px;text-align:center;font-size:29px;color:#d83ca8;">20000<span style="font-size:20px"> Hz</span></div>
<div style="left:282.5px;top:1178.5px;width:230px;height:60px;line-height:60px;text-align:center;font-size:29px;color:#5a6a80;">12<span style="font-size:20px"> dB/Oct</span></div>
<div style="left:517.4px;top:1178.5px;width:230px;height:60px;line-height:60px;text-align:center;font-size:29px;color:#e0903c;">0.0<span style="font-size:20px"> dB</span></div>
<div style="left:755.0px;top:1178.5px;width:230px;height:60px;line-height:60px;text-align:center;font-size:29px;color:#cfcf42;">0.0<span style="font-size:20px"> dB</span></div>
<div style="left:991.0px;top:1178.5px;width:230px;height:60px;line-height:60px;text-align:center;font-size:29px;color:#5ad05a;">0.0<span style="font-size:20px"> dB</span></div>
<div style="left:1227.0px;top:1178.5px;width:230px;height:60px;line-height:60px;text-align:center;font-size:29px;color:#4cc98a;">+3.4<span style="font-size:20px"> dB</span></div>
<div style="left:1462.0px;top:1178.5px;width:230px;height:60px;line-height:60px;text-align:center;font-size:29px;color:#7cbcea;">+2.4<span style="font-size:20px"> dB</span></div>
<div style="left:1698.0px;top:1178.5px;width:230px;height:60px;line-height:60px;text-align:center;font-size:29px;color:#b28ae2;">+1.7<span style="font-size:20px"> dB</span></div>
<div style="left:1935.0px;top:1178.5px;width:230px;height:60px;line-height:60px;text-align:center;font-size:29px;color:#d83ca8;">6<span style="font-size:20px"> dB/Oct</span></div>
<div style="left:282.5px;top:1220.5px;width:230px;height:60px;line-height:60px;text-align:center;font-size:29px;color:#5a6a80;">0.71</div>
<div style="left:517.4px;top:1220.5px;width:230px;height:60px;line-height:60px;text-align:center;font-size:29px;color:#e0903c;">1.00</div>
<div style="left:755.0px;top:1220.5px;width:230px;height:60px;line-height:60px;text-align:center;font-size:29px;color:#cfcf42;">3.80</div>
<div style="left:991.0px;top:1220.5px;width:230px;height:60px;line-height:60px;text-align:center;font-size:29px;color:#5ad05a;">0.37</div>
<div style="left:1227.0px;top:1220.5px;width:230px;height:60px;line-height:60px;text-align:center;font-size:29px;color:#4cc98a;">0.41</div>
<div style="left:1462.0px;top:1220.5px;width:230px;height:60px;line-height:60px;text-align:center;font-size:29px;color:#7cbcea;">1.00</div>
<div style="left:1698.0px;top:1220.5px;width:230px;height:60px;line-height:60px;text-align:center;font-size:29px;color:#b28ae2;">1.00</div>
<div style="left:1935.0px;top:1220.5px;width:230px;height:60px;line-height:60px;text-align:center;font-size:29px;color:#d83ca8;">0.71</div>
<div style="left:2158.0px;top:1130.5px;width:150px;height:60px;line-height:60px;text-align:center;font-size:28px;color:#8a9ab0;">Gain</div>
<div style="left:2153.0px;top:1179.5px;width:150px;height:60px;line-height:60px;text-align:center;font-size:28px;color:#8a9ab0;">0.0<span style="font-size:20px"> dB</span></div>
<div style="left:320px;top:1283.5px;width:200px;height:53px;background:#1f3553;border-radius:3px"></div>
<div style="left:341.0px;top:1280.0px;height:60px;line-height:60px;white-space:nowrap;font-size:28px;color:#c0d4f0;">Analyzer</div>
<div style="left:461px;top:1290px;width:50px;height:27px;background:#14243a"></div>
<div style="left:462.0px;top:1273.0px;height:60px;line-height:60px;white-space:nowrap;font-size:17px;color:#c0d4f0;">POST</div>
<div style="left:532px;top:1283.5px;width:154px;height:53px;background:#1f3553;border-radius:3px"></div>
<div style="left:532.0px;top:1280.0px;width:154px;height:60px;line-height:60px;text-align:center;font-size:28px;color:#b4ccf0;">Q-Couple</div>
<div style="left:698px;top:1283.5px;width:74px;height:53px;background:#16263c;border-radius:3px"></div>
<div style="left:698.0px;top:1280.0px;width:74px;height:60px;line-height:60px;text-align:center;font-size:28px;color:#8a9ab4;">HQ</div>
<div style="left:-50.0px;top:1280.0px;width:1000px;height:60px;line-height:60px;text-align:right;white-space:nowrap;font-size:28px;color:#8a96a8;">Processing:</div>
<div style="left:958px;top:1283.5px;width:216px;height:53px;background:#16263c;border-radius:3px"></div>
<div style="left:972.0px;top:1280.0px;height:60px;line-height:60px;white-space:nowrap;font-size:28px;color:#9caabc;">Stereo</div>
<svg style="position:absolute;left:1144px;top:1298px;" width="14" height="26" viewBox="0 0 14 26"><path d="M2 9 L7 4 L12 9 M2 17 L7 22 L12 17" stroke="#8a9ab4" stroke-width="1.8" fill="none"/></svg>
<div style="left:250px;top:1353px;width:2048px;height:2px;background:#1a1f28"></div>
<div style="left:250px;top:1355px;width:2048px;height:162px;background:#0e0e0e"></div>
<svg style="position:absolute;left:274px;top:1384px;" width="23" height="17" viewBox="0 0 23 17"><path d="M0 0 H23 L11.5 17 Z" fill="#8a8a8a"/></svg>
<div style="left:384.0px;top:1357.0px;width:1000px;height:60px;line-height:60px;text-align:right;white-space:nowrap;font-size:40.5px;color:#8c8c8c;">Channel EQ</div>
<div style="left:-409.0px;top:1424.5px;width:1000px;height:60px;line-height:60px;text-align:right;white-space:nowrap;font-size:27px;color:#c2c2c2;">Analyzer Decay:</div>
<div style="left:603px;top:1434.5px;width:234px;height:39px;background:#2d2d2d;border-radius:4px"></div>
<svg style="position:absolute;left:616px;top:1449px;" width="14" height="9" viewBox="0 0 14 9"><path d="M1.5 1.5 L7 7 L12.5 1.5" stroke="#9a9a9a" stroke-width="1.8" fill="none"/></svg>
<svg style="position:absolute;left:810px;top:1449px;" width="14" height="9" viewBox="0 0 14 9"><path d="M1.5 7.5 L7 2 L12.5 7.5" stroke="#9a9a9a" stroke-width="1.8" fill="none"/></svg>
<div style="left:645.0px;top:1424.5px;width:150px;height:60px;line-height:60px;text-align:center;font-size:28px;color:#f0f0f0;">10 dB/s</div>
<div style="left:862px;top:1451px;width:228px;height:6px;background:#2a2a2a;border-radius:3px"></div>
<div style="left:959px;top:1438px;width:32px;height:32px;border-radius:50%;background:#686868"></div></div></body></html>
